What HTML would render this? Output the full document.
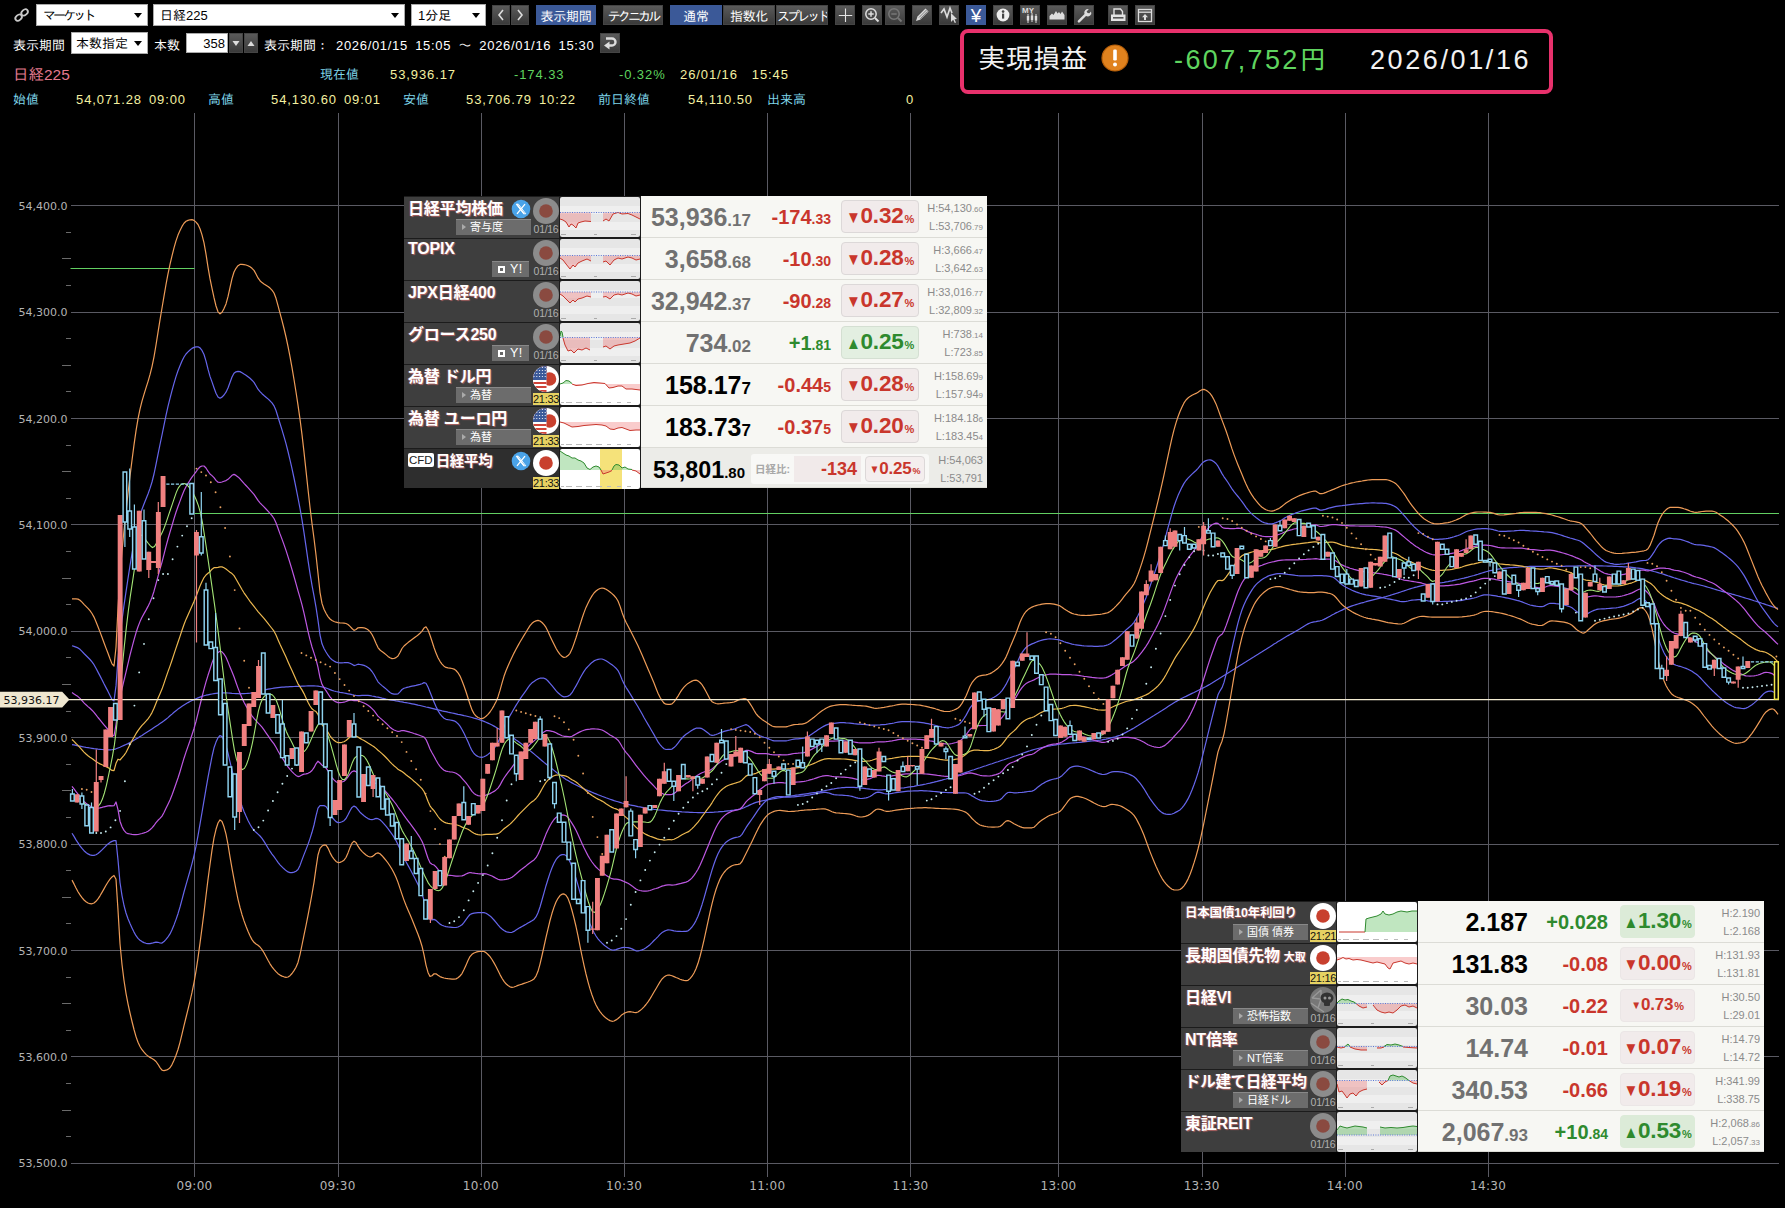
<!DOCTYPE html>
<html lang="ja"><head><meta charset="utf-8"><title>日経225 チャート</title>
<style>
html,body{margin:0;padding:0;background:#000}
body{width:1785px;height:1208px;position:relative;overflow:hidden;font-family:"Liberation Sans","IPAGothic","Noto Sans CJK JP",sans-serif}

.abs{position:absolute}
.sel{position:absolute;background:#fff;border:1px solid #aaa;box-sizing:border-box;color:#000;font-size:13px}
.sel span{position:absolute;top:3px;white-space:nowrap}
.sel i{position:absolute;right:5px;top:8px;width:0;height:0;border-left:4px solid transparent;border-right:4px solid transparent;border-top:5px solid #000}
.btn{position:absolute;box-sizing:border-box;overflow:hidden}
.btn.g{background:linear-gradient(#5a5a5a,#3a3a3a);border:1px solid #444}
.btn.b{background:#3b5998;border:1px solid #3b5998}
.btn.t{color:#fff;font-size:13px;text-align:center;line-height:21px;white-space:nowrap;letter-spacing:-0.3px}
.btn svg{position:absolute;left:-1px;top:-1px}
.tx{position:absolute;font-size:13px;white-space:nowrap;line-height:16px}
.tx.w{color:#fff}.tx.c{color:#7fd6ea}.tx.y{color:#f4f0a0;letter-spacing:0.9px;word-spacing:2.5px}.tx.gr{color:#5fd45f;letter-spacing:0.9px}
b.k{font-weight:normal;letter-spacing:-2.9px}
.inp{position:absolute;background:#fff;border:1px solid #aaa;box-sizing:border-box;color:#000;font-size:13px}
.inp span{position:absolute;right:2px;top:2px}
.pl{white-space:nowrap;line-height:34px}

.tbl{position:absolute;width:583px;background:#1c1c1c;font-family:"Liberation Sans","Noto Sans CJK JP",sans-serif}
.row{position:absolute;left:0;width:583px}
.lab{position:absolute;left:0;top:1px;width:155px;background:#3e3e3e}
.lastrow .lab{background:#2e2e2e}
.nm{position:absolute;left:4px;top:0px;font-size:16px;font-weight:bold;color:#fff;white-space:nowrap;line-height:24px;text-shadow:1px 1px 1px rgba(210,110,110,.75),-1px 0 1px rgba(210,110,110,.35);letter-spacing:-0.2px}
.nm .sub{font-size:11px;margin-left:4px;letter-spacing:0}
.cfdt{display:inline-block;background:#fff;color:#222;font-weight:normal;font-size:11.5px;line-height:14px;padding:0 1px;border-radius:2px;margin-right:2px;text-shadow:none;vertical-align:2px;letter-spacing:0}
.xi{position:absolute;left:107px;top:2px}
.fl{position:absolute;left:128px;top:0px}
.tm{position:absolute;left:128px;width:28px;top:26px;height:12px;font-size:10.5px;line-height:12px;color:#b0b0b0;text-align:center;letter-spacing:-0.3px}
.tm.live{background:#e6d262;color:#111;top:28px;left:129px;width:26px;height:12px;font-size:11px}
.tag{position:absolute;left:52px;top:22px;width:75px;height:16px;background:#6c6c6c;border-top:1px solid #888;box-sizing:border-box;color:#fff;font-size:11px;line-height:15px;padding-left:14px;white-space:nowrap}
.tag .ar{position:absolute;left:6px;top:4px;width:0;height:0;border-top:3.5px solid transparent;border-bottom:3.5px solid transparent;border-left:4px solid #aaa}
.tag.yt{left:88px;width:37px;padding-left:18px;font-size:12.5px;letter-spacing:0.3px}
.tag .sq{position:absolute;left:6px;top:3.5px;width:7px;height:7px;background:#fff;box-shadow:inset 0 0 0 2px #fff, inset 0 0 0 3.5px #666}
.mc{position:absolute;left:156px;top:1px}
.wh{position:absolute;left:237px;top:0px;width:346px;background:#f7f7f3;border-bottom:1px solid #dcdcd6;box-sizing:border-box}
.wh>*{margin-top:1px}
.wh.cfd{background:#ecece8}
.val{position:absolute;right:236px;top:5px;font-size:25px;font-weight:bold;line-height:30px;white-space:nowrap}
.val small{font-size:17px}
.chg{position:absolute;right:156px;top:7px;font-size:20px;font-weight:bold;line-height:26px;white-space:nowrap}
.chg small{font-size:14px}
.pct{position:absolute;left:200px;top:3px;width:78px;height:33px;box-sizing:border-box;border:1px solid #dcd8d8;border-radius:4px;background:#f1ebeb;font-size:22.5px;font-weight:bold;line-height:30px;text-align:center;white-space:nowrap;letter-spacing:-0.2px}
.pct.up{background:#e3efe1;border-color:#d4dfd2}
.pct i{font-style:normal;font-size:15px;vertical-align:1px;margin-right:0px;display:inline-block;transform:scale(1.0,1.15)}
.pct small{font-size:11px;margin-left:1px}
.pct.s2{font-size:17px}
.pct.s2 i{font-size:10px}
.hl{position:absolute;right:4px;font-size:11px;line-height:13px;color:#8b8b8b;white-space:nowrap}
.hl small{font-size:8px}
.cfdbox{position:absolute;left:110px;top:5px;width:178px;height:30px;background:#f8f8f6;border-radius:3px}
.nk{position:absolute;left:4px;top:8px;font-size:10.5px;font-weight:bold;color:#a8a8a8;line-height:14px}
.cv{position:absolute;left:43px;width:67px;top:2px;height:26px;background:#f1eaea;font-size:18px;font-weight:bold;line-height:26px;text-align:right;padding-right:4px;box-sizing:border-box}
.pct.sm{left:224px;top:7px;width:60px;height:26px;font-size:17px;line-height:24px;background:#f4eeee}
.wh.cfd .val{font-size:23.3px;right:242px;top:6px}
.wh.cfd .val small{font-size:15px}
.t2 .pct{border-color:#ebe6e6;left:202px;width:75px}
.t2 .pct.up{border-color:#dcebd8;background:#dcebd8}
.pct.sm i{font-size:10px}
.pct.sm small{font-size:9px}
</style></head>
<body>
<svg class="abs" style="left:0;top:0" width="1785" height="1208" viewBox="0 0 1785 1208">
<path d="M70.5 205.5H1779 M70.5 312.5H1779 M70.5 418.5H1779 M70.5 524.5H1779 M70.5 631.5H1779 M70.5 737.5H1779 M70.5 844.5H1779 M70.5 950.5H1779 M70.5 1056.5H1779 M70.5 1163.5H1779 M194.5 113V1177 M338.5 113V1177 M481.5 113V1177 M624.5 113V1177 M767.5 113V1177 M910.5 113V1177 M1058.5 113V1177 M1202.5 113V1177 M1345.5 113V1177 M1488.5 113V1177" stroke="#5a5a63" stroke-width="1" fill="none" shape-rendering="crispEdges"/>
<path d="M66 232.5H71 M62 258.5H71 M66 285.5H71 M66 338.5H71 M62 365.5H71 M66 391.5H71 M66 445.5H71 M62 471.5H71 M66 498.5H71 M66 551.5H71 M62 578.5H71 M66 604.5H71 M66 657.5H71 M62 684.5H71 M66 711.5H71 M66 764.5H71 M62 790.5H71 M66 817.5H71 M66 870.5H71 M62 897.5H71 M66 923.5H71 M66 977.5H71 M62 1003.5H71 M66 1030.5H71 M66 1083.5H71 M62 1110.5H71 M66 1136.5H71" stroke="#6a6a6a" stroke-width="1" fill="none" shape-rendering="crispEdges"/>
<g font-family="DejaVu Sans, Liberation Sans, sans-serif" font-size="11" fill="#b4b4b4" text-anchor="end">
<text x="67.5" y="209.8">54,400.0</text>
<text x="67.5" y="316.2">54,300.0</text>
<text x="67.5" y="422.6">54,200.0</text>
<text x="67.5" y="528.9">54,100.0</text>
<text x="67.5" y="635.3">54,000.0</text>
<text x="67.5" y="741.7">53,900.0</text>
<text x="67.5" y="848.1">53,800.0</text>
<text x="67.5" y="954.5">53,700.0</text>
<text x="67.5" y="1060.8">53,600.0</text>
<text x="67.5" y="1167.2">53,500.0</text>
</g>
<g font-family="DejaVu Sans, Liberation Sans, sans-serif" font-size="12" fill="#b4b4b4" text-anchor="middle" letter-spacing="0.3">
<text x="194.5" y="1190">09:00</text>
<text x="337.7" y="1190">09:30</text>
<text x="480.9" y="1190">10:00</text>
<text x="624.1" y="1190">10:30</text>
<text x="767.3" y="1190">11:00</text>
<text x="910.5" y="1190">11:30</text>
<text x="1058.5" y="1190">13:00</text>
<text x="1201.7" y="1190">13:30</text>
<text x="1344.9" y="1190">14:00</text>
<text x="1488.1" y="1190">14:30</text>
</g>
<path d="M70.5 268.5H194.5M194.5 513.5H1779" stroke="#62cf62" stroke-width="1.15" fill="none"/>
<path d="M72.0 744.6 L74.0 744.9 L76.0 745.3 L78.0 745.8 L80.0 746.2 L82.0 746.6 L84.0 747.0 L86.0 747.4 L88.0 747.7 L90.0 748.0 L92.0 748.3 L94.0 748.6 L96.0 748.8 L98.0 749.1 L100.0 749.3 L102.0 749.5 L104.0 749.7 L106.0 749.9 L108.0 749.9 L110.0 749.9 L112.0 749.7 L114.0 749.3 L116.0 748.8 L118.0 748.0 L120.0 747.2 L122.0 746.3 L124.0 745.4 L126.0 744.5 L128.0 743.6 L130.0 742.5 L132.0 741.4 L134.0 740.3 L136.0 739.1 L138.0 737.9 L140.0 736.6 L142.0 735.4 L144.0 734.1 L146.0 732.8 L148.0 731.5 L150.0 730.2 L152.0 728.9 L154.0 727.6 L156.0 726.3 L158.0 725.0 L160.0 723.6 L162.0 722.2 L164.0 720.8 L166.0 719.2 L168.0 717.6 L170.0 715.8 L172.0 714.1 L174.0 712.3 L176.0 710.7 L178.0 709.1 L180.0 707.7 L182.0 706.3 L184.0 705.0 L186.0 703.8 L188.0 702.6 L190.0 701.5 L192.0 700.5 L194.0 699.6 L196.0 698.7 L198.0 697.9 L200.0 697.1 L202.0 696.4 L204.0 695.8 L206.0 695.2 L208.0 694.8 L210.0 694.4 L212.0 694.0 L214.0 693.7 L216.0 693.4 L218.0 693.2 L220.0 693.0 L222.0 692.9 L224.0 692.8 L226.0 692.9 L228.0 693.0 L230.0 693.2 L232.0 693.4 L234.0 693.5 L236.0 693.7 L238.0 693.7 L240.0 693.8 L242.0 693.7 L244.0 693.6 L246.0 693.5 L248.0 693.3 L250.0 693.2 L252.0 693.0 L254.0 692.7 L256.0 692.4 L258.0 691.9 L260.0 691.4 L262.0 690.8 L264.0 690.2 L266.0 689.7 L268.0 689.2 L270.0 688.8 L272.0 688.5 L274.0 688.2 L276.0 687.9 L278.0 687.6 L280.0 687.4 L282.0 687.2 L284.0 687.1 L286.0 686.9 L288.0 686.8 L290.0 686.7 L292.0 686.6 L294.0 686.5 L296.0 686.4 L298.0 686.4 L300.0 686.3 L302.0 686.2 L304.0 686.1 L306.0 686.0 L308.0 685.9 L310.0 685.9 L312.0 685.9 L314.0 685.9 L316.0 686.0 L318.0 686.2 L320.0 686.5 L322.0 686.9 L324.0 687.4 L326.0 688.0 L328.0 688.8 L330.0 689.6 L332.0 690.4 L334.0 691.0 L336.0 691.5 L338.0 691.9 L340.0 692.3 L342.0 692.6 L344.0 693.0 L346.0 693.4 L348.0 693.8 L350.0 694.2 L352.0 694.7 L354.0 695.1 L356.0 695.4 L358.0 695.6 L360.0 695.6 L362.0 695.4 L364.0 695.3 L366.0 695.3 L368.0 695.4 L370.0 695.6 L372.0 696.0 L374.0 696.3 L376.0 696.8 L378.0 697.2 L380.0 697.7 L382.0 698.2 L384.0 698.6 L386.0 699.1 L388.0 699.5 L390.0 699.8 L392.0 700.2 L394.0 700.5 L396.0 700.9 L398.0 701.2 L400.0 701.6 L402.0 701.9 L404.0 702.3 L406.0 702.6 L408.0 703.0 L410.0 703.4 L412.0 703.8 L414.0 704.2 L416.0 704.6 L418.0 705.1 L420.0 705.5 L422.0 706.0 L424.0 706.5 L426.0 707.0 L428.0 707.4 L430.0 707.9 L432.0 708.4 L434.0 708.9 L436.0 709.4 L438.0 709.9 L440.0 710.4 L442.0 710.9 L444.0 711.3 L446.0 711.7 L448.0 712.2 L450.0 712.6 L452.0 713.0 L454.0 713.4 L456.0 713.8 L458.0 714.3 L460.0 714.7 L462.0 715.1 L464.0 715.6 L466.0 716.0 L468.0 716.5 L470.0 717.0 L472.0 717.5 L474.0 718.1 L476.0 718.6 L478.0 719.3 L480.0 719.9 L482.0 720.6 L484.0 721.4 L486.0 722.2 L488.0 723.1 L490.0 724.0 L492.0 725.0 L494.0 726.1 L496.0 727.2 L498.0 728.4 L500.0 729.6 L502.0 730.8 L504.0 732.0 L506.0 733.3 L508.0 734.6 L510.0 735.9 L512.0 737.2 L514.0 738.5 L516.0 739.9 L518.0 741.2 L520.0 742.7 L522.0 744.2 L524.0 745.7 L526.0 747.3 L528.0 748.9 L530.0 750.6 L532.0 752.2 L534.0 753.9 L536.0 755.6 L538.0 757.3 L540.0 759.0 L542.0 760.7 L544.0 762.4 L546.0 764.0 L548.0 765.6 L550.0 767.2 L552.0 768.8 L554.0 770.4 L556.0 772.0 L558.0 773.6 L560.0 775.1 L562.0 776.6 L564.0 778.0 L566.0 779.4 L568.0 780.6 L570.0 781.8 L572.0 782.9 L574.0 784.0 L576.0 785.0 L578.0 786.0 L580.0 787.0 L582.0 787.9 L584.0 788.8 L586.0 789.7 L588.0 790.6 L590.0 791.4 L592.0 792.2 L594.0 793.1 L596.0 793.9 L598.0 794.7 L600.0 795.5 L602.0 796.3 L604.0 797.0 L606.0 797.8 L608.0 798.5 L610.0 799.2 L612.0 799.9 L614.0 800.6 L616.0 801.2 L618.0 801.8 L620.0 802.4 L622.0 803.0 L624.0 803.5 L626.0 804.0 L628.0 804.4 L630.0 804.9 L632.0 805.3 L634.0 805.7 L636.0 806.1 L638.0 806.6 L640.0 806.9 L642.0 807.3 L644.0 807.7 L646.0 808.0 L648.0 808.4 L650.0 808.7 L652.0 809.0 L654.0 809.3 L656.0 809.5 L658.0 809.8 L660.0 810.0 L662.0 810.2 L664.0 810.4 L666.0 810.6 L668.0 810.8 L670.0 810.9 L672.0 811.1 L674.0 811.3 L676.0 811.4 L678.0 811.6 L680.0 811.7 L682.0 811.9 L684.0 812.0 L686.0 812.1 L688.0 812.2 L690.0 812.3 L692.0 812.4 L694.0 812.5 L696.0 812.5 L698.0 812.6 L700.0 812.6 L702.0 812.6 L704.0 812.6 L706.0 812.5 L708.0 812.5 L710.0 812.4 L712.0 812.3 L714.0 812.2 L716.0 812.0 L718.0 811.9 L720.0 811.7 L722.0 811.6 L724.0 811.4 L726.0 811.1 L728.0 810.9 L730.0 810.7 L732.0 810.4 L734.0 810.2 L736.0 809.9 L738.0 809.6 L740.0 809.1 L742.0 808.5 L744.0 807.7 L746.0 806.8 L748.0 805.9 L750.0 804.9 L752.0 804.0 L754.0 803.1 L756.0 802.4 L758.0 801.9 L760.0 801.4 L762.0 800.9 L764.0 800.5 L766.0 800.1 L768.0 799.7 L770.0 799.4 L772.0 799.0 L774.0 798.7 L776.0 798.3 L778.0 798.0 L780.0 797.7 L782.0 797.3 L784.0 797.0 L786.0 796.7 L788.0 796.4 L790.0 796.1 L792.0 795.8 L794.0 795.5 L796.0 795.2 L798.0 795.0 L800.0 794.7 L802.0 794.4 L804.0 794.1 L806.0 793.8 L808.0 793.5 L810.0 793.2 L812.0 792.9 L814.0 792.6 L816.0 792.3 L818.0 791.9 L820.0 791.6 L822.0 791.2 L824.0 790.8 L826.0 790.4 L828.0 790.0 L830.0 789.6 L832.0 789.2 L834.0 788.9 L836.0 788.5 L838.0 788.2 L840.0 788.0 L842.0 787.7 L844.0 787.6 L846.0 787.4 L848.0 787.3 L850.0 787.3 L852.0 787.3 L854.0 787.4 L856.0 787.6 L858.0 787.7 L860.0 788.0 L862.0 788.2 L864.0 788.4 L866.0 788.7 L868.0 788.9 L870.0 789.2 L872.0 789.4 L874.0 789.6 L876.0 789.7 L878.0 789.8 L880.0 789.8 L882.0 789.8 L884.0 789.7 L886.0 789.6 L888.0 789.5 L890.0 789.3 L892.0 789.1 L894.0 788.9 L896.0 788.7 L898.0 788.5 L900.0 788.2 L902.0 788.0 L904.0 787.8 L906.0 787.5 L908.0 787.2 L910.0 786.9 L912.0 786.6 L914.0 786.3 L916.0 785.9 L918.0 785.5 L920.0 785.2 L922.0 784.8 L924.0 784.4 L926.0 784.0 L928.0 783.5 L930.0 783.1 L932.0 782.6 L934.0 782.2 L936.0 781.7 L938.0 781.1 L940.0 780.6 L942.0 780.1 L944.0 779.5 L946.0 779.0 L948.0 778.4 L950.0 777.8 L952.0 777.1 L954.0 776.5 L956.0 775.8 L958.0 775.1 L960.0 774.5 L962.0 773.8 L964.0 773.1 L966.0 772.4 L968.0 771.7 L970.0 771.0 L972.0 770.3 L974.0 769.7 L976.0 769.0 L978.0 768.3 L980.0 767.7 L982.0 767.0 L984.0 766.3 L986.0 765.7 L988.0 765.0 L990.0 764.3 L992.0 763.7 L994.0 763.0 L996.0 762.3 L998.0 761.7 L1000.0 761.0 L1002.0 760.3 L1004.0 759.7 L1006.0 759.0 L1008.0 758.3 L1010.0 757.7 L1012.0 757.0 L1014.0 756.3 L1016.0 755.7 L1018.0 755.0 L1020.0 754.2 L1022.0 753.5 L1024.0 752.8 L1026.0 752.1 L1028.0 751.4 L1030.0 750.8 L1032.0 750.1 L1034.0 749.5 L1036.0 749.0 L1038.0 748.5 L1040.0 748.0 L1042.0 747.5 L1044.0 747.1 L1046.0 746.6 L1048.0 746.2 L1050.0 745.8 L1052.0 745.5 L1054.0 745.1 L1056.0 744.8 L1058.0 744.5 L1060.0 744.2 L1062.0 744.0 L1064.0 743.8 L1066.0 743.6 L1068.0 743.4 L1070.0 743.2 L1072.0 743.0 L1074.0 742.8 L1076.0 742.7 L1078.0 742.5 L1080.0 742.3 L1082.0 742.1 L1084.0 741.9 L1086.0 741.7 L1088.0 741.4 L1090.0 741.2 L1092.0 741.0 L1094.0 740.8 L1096.0 740.6 L1098.0 740.3 L1100.0 740.1 L1102.0 739.8 L1104.0 739.4 L1106.0 739.1 L1108.0 738.7 L1110.0 738.2 L1112.0 737.7 L1114.0 737.2 L1116.0 736.6 L1118.0 735.9 L1120.0 735.2 L1122.0 734.4 L1124.0 733.4 L1126.0 732.4 L1128.0 731.3 L1130.0 730.2 L1132.0 729.1 L1134.0 728.0 L1136.0 726.8 L1138.0 725.6 L1140.0 724.3 L1142.0 723.1 L1144.0 721.8 L1146.0 720.5 L1148.0 719.2 L1150.0 718.0 L1152.0 716.7 L1154.0 715.5 L1156.0 714.2 L1158.0 713.0 L1160.0 711.7 L1162.0 710.5 L1164.0 709.2 L1166.0 707.9 L1168.0 706.6 L1170.0 705.3 L1172.0 704.1 L1174.0 702.8 L1176.0 701.6 L1178.0 700.5 L1180.0 699.4 L1182.0 698.3 L1184.0 697.3 L1186.0 696.4 L1188.0 695.4 L1190.0 694.4 L1192.0 693.4 L1194.0 692.5 L1196.0 691.5 L1198.0 690.5 L1200.0 689.5 L1202.0 688.6 L1204.0 687.5 L1206.0 686.5 L1208.0 685.4 L1210.0 684.3 L1212.0 683.1 L1214.0 681.8 L1216.0 680.5 L1218.0 679.3 L1220.0 678.0 L1222.0 676.7 L1224.0 675.4 L1226.0 674.2 L1228.0 672.9 L1230.0 671.7 L1232.0 670.4 L1234.0 669.2 L1236.0 667.9 L1238.0 666.7 L1240.0 665.4 L1242.0 664.2 L1244.0 662.9 L1246.0 661.7 L1248.0 660.4 L1250.0 659.2 L1252.0 657.9 L1254.0 656.7 L1256.0 655.4 L1258.0 654.2 L1260.0 652.9 L1262.0 651.7 L1264.0 650.4 L1266.0 649.2 L1268.0 647.9 L1270.0 646.7 L1272.0 645.4 L1274.0 644.1 L1276.0 642.9 L1278.0 641.6 L1280.0 640.4 L1282.0 639.2 L1284.0 638.0 L1286.0 636.8 L1288.0 635.6 L1290.0 634.5 L1292.0 633.4 L1294.0 632.2 L1296.0 631.1 L1298.0 629.9 L1300.0 628.7 L1302.0 627.4 L1304.0 626.2 L1306.0 625.0 L1308.0 623.9 L1310.0 623.0 L1312.0 622.3 L1314.0 621.9 L1316.0 621.6 L1318.0 621.2 L1320.0 620.8 L1322.0 620.2 L1324.0 619.4 L1326.0 618.4 L1328.0 617.3 L1330.0 616.2 L1332.0 615.0 L1334.0 614.0 L1336.0 612.9 L1338.0 612.0 L1340.0 611.0 L1342.0 610.1 L1344.0 609.1 L1346.0 608.2 L1348.0 607.4 L1350.0 606.6 L1352.0 605.9 L1354.0 605.2 L1356.0 604.6 L1358.0 604.0 L1360.0 603.4 L1362.0 602.8 L1364.0 602.3 L1366.0 601.7 L1368.0 601.2 L1370.0 600.7 L1372.0 600.2 L1374.0 599.7 L1376.0 599.2 L1378.0 598.7 L1380.0 598.2 L1382.0 597.7 L1384.0 597.1 L1386.0 596.6 L1388.0 596.0 L1390.0 595.4 L1392.0 594.7 L1394.0 594.1 L1396.0 593.5 L1398.0 592.9 L1400.0 592.2 L1402.0 591.5 L1404.0 590.9 L1406.0 590.2 L1408.0 589.5 L1410.0 588.9 L1412.0 588.3 L1414.0 587.7 L1416.0 587.2 L1418.0 586.6 L1420.0 586.1 L1422.0 585.6 L1424.0 585.1 L1426.0 584.7 L1428.0 584.3 L1430.0 584.0 L1432.0 583.8 L1434.0 583.5 L1436.0 583.3 L1438.0 583.1 L1440.0 582.8 L1442.0 582.6 L1444.0 582.3 L1446.0 581.9 L1448.0 581.6 L1450.0 581.2 L1452.0 580.8 L1454.0 580.3 L1456.0 579.9 L1458.0 579.5 L1460.0 579.0 L1462.0 578.5 L1464.0 578.1 L1466.0 577.6 L1468.0 577.1 L1470.0 576.5 L1472.0 576.0 L1474.0 575.5 L1476.0 574.9 L1478.0 574.3 L1480.0 573.6 L1482.0 573.0 L1484.0 572.4 L1486.0 571.8 L1488.0 571.2 L1490.0 570.7 L1492.0 570.3 L1494.0 569.9 L1496.0 569.5 L1498.0 569.1 L1500.0 568.8 L1502.0 568.5 L1504.0 568.3 L1506.0 568.1 L1508.0 567.9 L1510.0 567.7 L1512.0 567.6 L1514.0 567.4 L1516.0 567.3 L1518.0 567.2 L1520.0 567.0 L1522.0 566.9 L1524.0 566.8 L1526.0 566.6 L1528.0 566.5 L1530.0 566.4 L1532.0 566.3 L1534.0 566.3 L1536.0 566.3 L1538.0 566.3 L1540.0 566.3 L1542.0 566.3 L1544.0 566.3 L1546.0 566.3 L1548.0 566.3 L1550.0 566.3 L1552.0 566.3 L1554.0 566.3 L1556.0 566.3 L1558.0 566.3 L1560.0 566.3 L1562.0 566.3 L1564.0 566.3 L1566.0 566.2 L1568.0 566.2 L1570.0 566.2 L1572.0 566.1 L1574.0 566.1 L1576.0 566.0 L1578.0 565.9 L1580.0 565.9 L1582.0 565.9 L1584.0 565.9 L1586.0 565.9 L1588.0 565.9 L1590.0 565.9 L1592.0 565.9 L1594.0 565.9 L1596.0 565.9 L1598.0 565.9 L1600.0 565.9 L1602.0 565.9 L1604.0 566.0 L1606.0 566.0 L1608.0 566.1 L1610.0 566.2 L1612.0 566.2 L1614.0 566.3 L1616.0 566.4 L1618.0 566.5 L1620.0 566.6 L1622.0 566.7 L1624.0 566.8 L1626.0 566.9 L1628.0 567.0 L1630.0 567.2 L1632.0 567.4 L1634.0 567.6 L1636.0 567.9 L1638.0 568.1 L1640.0 568.4 L1642.0 568.7 L1644.0 569.1 L1646.0 569.5 L1648.0 569.9 L1650.0 570.4 L1652.0 570.9 L1654.0 571.5 L1656.0 572.0 L1658.0 572.6 L1660.0 573.2 L1662.0 573.8 L1664.0 574.4 L1666.0 575.1 L1668.0 575.8 L1670.0 576.4 L1672.0 577.1 L1674.0 577.8 L1676.0 578.4 L1678.0 579.0 L1680.0 579.6 L1682.0 580.2 L1684.0 580.8 L1686.0 581.4 L1688.0 582.0 L1690.0 582.5 L1692.0 583.1 L1694.0 583.6 L1696.0 584.0 L1698.0 584.5 L1700.0 585.0 L1702.0 585.5 L1704.0 586.0 L1706.0 586.6 L1708.0 587.2 L1710.0 587.8 L1712.0 588.4 L1714.0 589.0 L1716.0 589.6 L1718.0 590.2 L1720.0 590.8 L1722.0 591.4 L1724.0 591.9 L1726.0 592.5 L1728.0 593.0 L1730.0 593.5 L1732.0 594.1 L1734.0 594.6 L1736.0 595.2 L1738.0 595.8 L1740.0 596.4 L1742.0 597.0 L1744.0 597.6 L1746.0 598.2 L1748.0 598.8 L1750.0 599.4 L1752.0 600.0 L1754.0 600.7 L1756.0 601.3 L1758.0 601.9 L1760.0 602.6 L1762.0 603.3 L1764.0 603.9 L1766.0 604.6 L1768.0 605.2 L1770.0 605.9 L1772.0 606.6 L1774.0 607.2 L1776.0 607.9 L1778.0 608.3" stroke="#6666ec" stroke-width="1.2" fill="none" stroke-linejoin="round"/>
<path d="M72.0 598.9 L74.0 598.9 L76.0 598.9 L78.0 599.1 L80.0 600.2 L82.0 602.1 L84.0 604.3 L86.0 606.3 L88.0 608.3 L90.0 610.7 L92.0 613.5 L94.0 617.1 L96.0 621.7 L98.0 626.8 L100.0 631.9 L102.0 637.2 L104.0 642.7 L106.0 648.1 L108.0 653.2 L110.0 658.8 L112.0 663.9 L114.0 666.0 L116.0 647.2 L118.0 608.1 L120.0 576.1 L122.0 550.9 L124.0 530.3 L126.0 511.7 L128.0 493.4 L130.0 476.1 L132.0 460.2 L134.0 444.9 L136.0 430.9 L138.0 418.8 L140.0 409.2 L142.0 401.2 L144.0 394.3 L146.0 387.9 L148.0 381.6 L150.0 374.7 L152.0 366.6 L154.0 356.8 L156.0 345.0 L158.0 332.3 L160.0 319.9 L162.0 308.0 L164.0 296.1 L166.0 284.5 L168.0 273.8 L170.0 264.4 L172.0 255.9 L174.0 247.9 L176.0 240.9 L178.0 235.1 L180.0 230.5 L182.0 226.4 L184.0 223.2 L186.0 221.3 L188.0 220.4 L190.0 219.8 L192.0 219.6 L194.0 220.4 L196.0 222.1 L198.0 224.5 L200.0 228.8 L202.0 234.9 L204.0 242.9 L206.0 254.2 L208.0 267.1 L210.0 278.7 L212.0 288.3 L214.0 297.7 L216.0 306.0 L218.0 311.8 L220.0 313.9 L222.0 312.2 L224.0 308.6 L226.0 303.9 L228.0 296.7 L230.0 287.6 L232.0 278.7 L234.0 272.0 L236.0 268.3 L238.0 265.7 L240.0 264.4 L242.0 264.4 L244.0 264.6 L246.0 265.0 L248.0 265.7 L250.0 266.8 L252.0 268.3 L254.0 270.4 L256.0 274.0 L258.0 277.9 L260.0 280.7 L262.0 282.6 L264.0 284.0 L266.0 285.3 L268.0 286.6 L270.0 288.1 L272.0 290.2 L274.0 293.0 L276.0 298.3 L278.0 305.7 L280.0 313.2 L282.0 320.7 L284.0 328.5 L286.0 337.0 L288.0 346.4 L290.0 356.7 L292.0 367.7 L294.0 379.5 L296.0 392.0 L298.0 405.2 L300.0 419.2 L302.0 434.7 L304.0 452.1 L306.0 470.6 L308.0 489.2 L310.0 507.2 L312.0 523.5 L314.0 538.5 L316.0 555.0 L318.0 573.5 L320.0 592.3 L322.0 603.4 L324.0 609.3 L326.0 613.3 L328.0 616.6 L330.0 619.0 L332.0 620.5 L334.0 621.5 L336.0 622.2 L338.0 622.6 L340.0 622.9 L342.0 623.0 L344.0 623.2 L346.0 623.5 L348.0 624.5 L350.0 626.4 L352.0 628.5 L354.0 630.4 L356.0 629.5 L358.0 627.8 L360.0 627.6 L362.0 627.6 L364.0 627.8 L366.0 628.6 L368.0 629.8 L370.0 631.6 L372.0 634.5 L374.0 638.4 L376.0 643.3 L378.0 647.6 L380.0 650.0 L382.0 651.6 L384.0 653.0 L386.0 654.6 L388.0 656.4 L390.0 657.8 L392.0 658.6 L394.0 658.5 L396.0 657.6 L398.0 656.0 L400.0 652.5 L402.0 648.5 L404.0 646.0 L406.0 644.2 L408.0 642.6 L410.0 641.1 L412.0 639.6 L414.0 638.1 L416.0 636.6 L418.0 635.0 L420.0 633.3 L422.0 631.2 L424.0 628.1 L426.0 626.8 L428.0 630.0 L430.0 635.2 L432.0 641.3 L434.0 647.5 L436.0 653.1 L438.0 657.7 L440.0 661.3 L442.0 664.1 L444.0 666.2 L446.0 667.4 L448.0 667.9 L450.0 668.2 L452.0 668.5 L454.0 669.1 L456.0 670.5 L458.0 672.8 L460.0 676.1 L462.0 680.7 L464.0 686.0 L466.0 691.8 L468.0 698.0 L470.0 704.3 L472.0 709.9 L474.0 713.6 L476.0 716.1 L478.0 717.5 L480.0 718.3 L482.0 718.6 L484.0 717.9 L486.0 716.3 L488.0 714.4 L490.0 712.0 L492.0 709.0 L494.0 705.6 L496.0 701.7 L498.0 696.9 L500.0 690.4 L502.0 683.1 L504.0 676.3 L506.0 670.8 L508.0 665.9 L510.0 661.4 L512.0 657.2 L514.0 653.1 L516.0 649.3 L518.0 645.6 L520.0 642.0 L522.0 638.7 L524.0 635.4 L526.0 632.2 L528.0 628.8 L530.0 625.7 L532.0 623.3 L534.0 621.8 L536.0 620.9 L538.0 620.4 L540.0 621.0 L542.0 622.5 L544.0 624.6 L546.0 627.4 L548.0 631.5 L550.0 636.0 L552.0 640.2 L554.0 644.3 L556.0 648.3 L558.0 651.7 L560.0 654.3 L562.0 656.4 L564.0 657.5 L566.0 657.0 L568.0 655.6 L570.0 653.3 L572.0 649.1 L574.0 643.6 L576.0 637.8 L578.0 631.4 L580.0 624.8 L582.0 618.5 L584.0 612.6 L586.0 607.4 L588.0 603.2 L590.0 599.3 L592.0 595.9 L594.0 593.0 L596.0 591.0 L598.0 589.5 L600.0 588.5 L602.0 588.0 L604.0 588.4 L606.0 589.3 L608.0 590.6 L610.0 592.0 L612.0 593.6 L614.0 595.5 L616.0 597.8 L618.0 601.0 L620.0 606.1 L622.0 612.3 L624.0 617.8 L626.0 622.2 L628.0 626.1 L630.0 629.9 L632.0 633.8 L634.0 637.8 L636.0 641.7 L638.0 645.8 L640.0 650.2 L642.0 654.8 L644.0 659.6 L646.0 664.3 L648.0 669.0 L650.0 673.6 L652.0 678.3 L654.0 683.1 L656.0 688.2 L658.0 693.2 L660.0 697.2 L662.0 700.5 L664.0 703.1 L666.0 704.2 L668.0 704.3 L670.0 704.3 L672.0 703.8 L674.0 701.8 L676.0 699.2 L678.0 696.1 L680.0 692.7 L682.0 689.6 L684.0 687.2 L686.0 685.1 L688.0 683.4 L690.0 682.2 L692.0 681.1 L694.0 680.3 L696.0 680.1 L698.0 680.9 L700.0 682.5 L702.0 684.7 L704.0 687.9 L706.0 691.5 L708.0 695.2 L710.0 699.2 L712.0 701.7 L714.0 702.8 L716.0 703.5 L718.0 703.8 L720.0 703.7 L722.0 703.5 L724.0 703.2 L726.0 703.0 L728.0 702.8 L730.0 702.7 L732.0 702.4 L734.0 702.0 L736.0 701.1 L738.0 700.1 L740.0 699.4 L742.0 699.0 L744.0 698.7 L746.0 698.9 L748.0 700.6 L750.0 703.6 L752.0 706.8 L754.0 710.3 L756.0 713.6 L758.0 716.0 L760.0 717.8 L762.0 719.4 L764.0 720.8 L766.0 722.1 L768.0 723.4 L770.0 724.8 L772.0 726.0 L774.0 726.7 L776.0 726.9 L778.0 726.9 L780.0 726.9 L782.0 726.9 L784.0 726.9 L786.0 726.8 L788.0 726.3 L790.0 725.7 L792.0 725.1 L794.0 724.7 L796.0 724.5 L798.0 724.4 L800.0 724.2 L802.0 724.1 L804.0 723.7 L806.0 722.9 L808.0 721.7 L810.0 720.2 L812.0 718.8 L814.0 717.3 L816.0 715.6 L818.0 713.9 L820.0 712.3 L822.0 710.8 L824.0 709.6 L826.0 708.3 L828.0 707.2 L830.0 706.4 L832.0 705.9 L834.0 705.5 L836.0 705.1 L838.0 704.8 L840.0 704.7 L842.0 704.6 L844.0 704.6 L846.0 704.7 L848.0 704.8 L850.0 705.0 L852.0 705.2 L854.0 705.3 L856.0 705.5 L858.0 705.6 L860.0 705.7 L862.0 705.8 L864.0 706.0 L866.0 706.2 L868.0 706.7 L870.0 707.2 L872.0 707.7 L874.0 708.1 L876.0 708.3 L878.0 708.2 L880.0 708.0 L882.0 707.7 L884.0 707.4 L886.0 707.0 L888.0 706.6 L890.0 706.2 L892.0 705.9 L894.0 705.5 L896.0 705.0 L898.0 704.6 L900.0 704.3 L902.0 704.2 L904.0 704.2 L906.0 704.2 L908.0 704.3 L910.0 704.4 L912.0 704.5 L914.0 704.6 L916.0 704.8 L918.0 705.0 L920.0 705.2 L922.0 705.6 L924.0 706.0 L926.0 706.4 L928.0 706.9 L930.0 707.4 L932.0 707.8 L934.0 708.3 L936.0 709.0 L938.0 709.6 L940.0 710.3 L942.0 710.8 L944.0 711.3 L946.0 711.5 L948.0 711.5 L950.0 711.3 L952.0 710.7 L954.0 710.0 L956.0 709.1 L958.0 708.0 L960.0 706.2 L962.0 703.4 L964.0 699.8 L966.0 696.0 L968.0 691.2 L970.0 686.2 L972.0 682.7 L974.0 680.1 L976.0 678.0 L978.0 676.6 L980.0 675.8 L982.0 675.4 L984.0 675.1 L986.0 674.8 L988.0 674.3 L990.0 673.6 L992.0 672.6 L994.0 671.3 L996.0 669.8 L998.0 668.2 L1000.0 666.1 L1002.0 663.6 L1004.0 660.7 L1006.0 657.1 L1008.0 652.4 L1010.0 647.4 L1012.0 642.7 L1014.0 638.1 L1016.0 633.3 L1018.0 627.8 L1020.0 622.2 L1022.0 617.7 L1024.0 614.2 L1026.0 611.5 L1028.0 609.6 L1030.0 608.3 L1032.0 607.1 L1034.0 606.2 L1036.0 605.6 L1038.0 605.0 L1040.0 604.6 L1042.0 604.1 L1044.0 603.8 L1046.0 603.6 L1048.0 603.6 L1050.0 603.7 L1052.0 603.9 L1054.0 604.2 L1056.0 604.7 L1058.0 605.2 L1060.0 605.9 L1062.0 607.2 L1064.0 608.7 L1066.0 610.1 L1068.0 611.3 L1070.0 612.4 L1072.0 613.4 L1074.0 614.0 L1076.0 614.4 L1078.0 614.8 L1080.0 615.1 L1082.0 615.3 L1084.0 615.4 L1086.0 615.5 L1088.0 615.4 L1090.0 615.3 L1092.0 615.1 L1094.0 614.9 L1096.0 614.7 L1098.0 614.5 L1100.0 614.3 L1102.0 614.0 L1104.0 613.6 L1106.0 613.2 L1108.0 612.6 L1110.0 611.5 L1112.0 610.0 L1114.0 608.1 L1116.0 606.1 L1118.0 604.0 L1120.0 601.8 L1122.0 599.3 L1124.0 596.7 L1126.0 594.1 L1128.0 591.8 L1130.0 589.5 L1132.0 586.9 L1134.0 583.7 L1136.0 579.4 L1138.0 574.2 L1140.0 568.6 L1142.0 562.6 L1144.0 556.1 L1146.0 549.1 L1148.0 541.5 L1150.0 533.4 L1152.0 525.3 L1154.0 517.3 L1156.0 509.3 L1158.0 501.1 L1160.0 492.6 L1162.0 483.9 L1164.0 474.9 L1166.0 465.5 L1168.0 456.1 L1170.0 446.9 L1172.0 437.9 L1174.0 429.8 L1176.0 422.9 L1178.0 416.8 L1180.0 411.5 L1182.0 406.9 L1184.0 402.9 L1186.0 400.0 L1188.0 398.0 L1190.0 396.4 L1192.0 395.2 L1194.0 394.2 L1196.0 393.4 L1198.0 392.2 L1200.0 390.8 L1202.0 389.7 L1204.0 389.4 L1206.0 390.2 L1208.0 391.6 L1210.0 393.4 L1212.0 396.1 L1214.0 399.7 L1216.0 403.9 L1218.0 409.1 L1220.0 414.7 L1222.0 420.1 L1224.0 425.4 L1226.0 430.8 L1228.0 436.6 L1230.0 442.7 L1232.0 448.9 L1234.0 454.6 L1236.0 459.9 L1238.0 465.0 L1240.0 469.8 L1242.0 474.6 L1244.0 479.4 L1246.0 484.0 L1248.0 488.2 L1250.0 491.9 L1252.0 495.2 L1254.0 498.1 L1256.0 500.7 L1258.0 503.1 L1260.0 505.4 L1262.0 507.3 L1264.0 508.6 L1266.0 509.7 L1268.0 510.5 L1270.0 511.0 L1272.0 511.1 L1274.0 510.6 L1276.0 509.8 L1278.0 508.9 L1280.0 507.7 L1282.0 506.2 L1284.0 504.6 L1286.0 503.0 L1288.0 501.7 L1290.0 500.5 L1292.0 499.3 L1294.0 498.3 L1296.0 497.3 L1298.0 496.3 L1300.0 495.4 L1302.0 494.6 L1304.0 493.9 L1306.0 493.2 L1308.0 492.6 L1310.0 492.0 L1312.0 491.5 L1314.0 491.2 L1316.0 491.2 L1318.0 492.5 L1320.0 493.7 L1322.0 493.7 L1324.0 493.1 L1326.0 492.4 L1328.0 491.5 L1330.0 490.7 L1332.0 489.9 L1334.0 489.1 L1336.0 488.2 L1338.0 487.4 L1340.0 486.5 L1342.0 485.8 L1344.0 485.1 L1346.0 484.5 L1348.0 484.0 L1350.0 483.4 L1352.0 482.9 L1354.0 482.5 L1356.0 482.0 L1358.0 481.7 L1360.0 481.3 L1362.0 481.0 L1364.0 480.6 L1366.0 480.3 L1368.0 480.0 L1370.0 479.8 L1372.0 479.7 L1374.0 479.6 L1376.0 479.6 L1378.0 479.6 L1380.0 479.6 L1382.0 479.6 L1384.0 479.6 L1386.0 479.7 L1388.0 480.0 L1390.0 480.6 L1392.0 481.5 L1394.0 482.5 L1396.0 483.8 L1398.0 485.8 L1400.0 488.3 L1402.0 491.0 L1404.0 493.7 L1406.0 496.7 L1408.0 499.9 L1410.0 502.9 L1412.0 505.6 L1414.0 508.2 L1416.0 510.7 L1418.0 513.0 L1420.0 515.1 L1422.0 517.0 L1424.0 518.8 L1426.0 520.1 L1428.0 521.3 L1430.0 522.3 L1432.0 523.2 L1434.0 523.7 L1436.0 523.9 L1438.0 523.8 L1440.0 523.7 L1442.0 523.5 L1444.0 523.2 L1446.0 522.9 L1448.0 522.6 L1450.0 522.1 L1452.0 521.5 L1454.0 520.7 L1456.0 520.0 L1458.0 519.1 L1460.0 518.2 L1462.0 517.1 L1464.0 515.9 L1466.0 514.8 L1468.0 514.0 L1470.0 513.4 L1472.0 512.8 L1474.0 512.4 L1476.0 512.1 L1478.0 512.0 L1480.0 512.0 L1482.0 512.0 L1484.0 512.1 L1486.0 512.2 L1488.0 512.3 L1490.0 512.4 L1492.0 512.8 L1494.0 513.4 L1496.0 514.1 L1498.0 514.6 L1500.0 515.0 L1502.0 515.0 L1504.0 514.9 L1506.0 514.7 L1508.0 514.5 L1510.0 514.2 L1512.0 514.0 L1514.0 513.7 L1516.0 513.4 L1518.0 513.0 L1520.0 512.7 L1522.0 512.5 L1524.0 512.4 L1526.0 512.4 L1528.0 512.4 L1530.0 512.4 L1532.0 512.4 L1534.0 512.4 L1536.0 512.4 L1538.0 512.5 L1540.0 512.7 L1542.0 513.0 L1544.0 513.3 L1546.0 513.7 L1548.0 514.1 L1550.0 514.5 L1552.0 515.0 L1554.0 515.6 L1556.0 516.2 L1558.0 516.8 L1560.0 517.4 L1562.0 518.1 L1564.0 518.8 L1566.0 519.5 L1568.0 520.2 L1570.0 520.8 L1572.0 521.2 L1574.0 521.5 L1576.0 521.9 L1578.0 522.3 L1580.0 522.9 L1582.0 524.1 L1584.0 526.0 L1586.0 528.3 L1588.0 530.7 L1590.0 533.0 L1592.0 535.5 L1594.0 538.2 L1596.0 540.7 L1598.0 542.9 L1600.0 545.2 L1602.0 547.3 L1604.0 549.1 L1606.0 550.5 L1608.0 551.3 L1610.0 552.0 L1612.0 552.6 L1614.0 553.1 L1616.0 553.4 L1618.0 553.5 L1620.0 553.5 L1622.0 553.4 L1624.0 553.2 L1626.0 553.0 L1628.0 552.8 L1630.0 552.6 L1632.0 552.4 L1634.0 552.3 L1636.0 552.1 L1638.0 551.8 L1640.0 551.5 L1642.0 551.2 L1644.0 550.8 L1646.0 550.2 L1648.0 548.8 L1650.0 545.4 L1652.0 540.5 L1654.0 535.2 L1656.0 528.8 L1658.0 522.7 L1660.0 518.2 L1662.0 514.6 L1664.0 511.8 L1666.0 509.8 L1668.0 508.2 L1670.0 507.4 L1672.0 507.4 L1674.0 507.4 L1676.0 507.4 L1678.0 507.4 L1680.0 507.6 L1682.0 508.1 L1684.0 508.8 L1686.0 509.4 L1688.0 510.1 L1690.0 511.0 L1692.0 511.7 L1694.0 512.2 L1696.0 512.3 L1698.0 512.1 L1700.0 511.8 L1702.0 511.5 L1704.0 511.3 L1706.0 511.2 L1708.0 511.2 L1710.0 511.2 L1712.0 511.2 L1714.0 511.5 L1716.0 512.3 L1718.0 513.6 L1720.0 514.9 L1722.0 516.2 L1724.0 517.6 L1726.0 519.2 L1728.0 520.8 L1730.0 522.6 L1732.0 524.5 L1734.0 526.6 L1736.0 528.9 L1738.0 531.7 L1740.0 534.8 L1742.0 538.3 L1744.0 542.1 L1746.0 546.5 L1748.0 551.5 L1750.0 556.6 L1752.0 561.6 L1754.0 566.7 L1756.0 571.8 L1758.0 576.7 L1760.0 581.2 L1762.0 585.4 L1764.0 589.3 L1766.0 593.1 L1768.0 596.7 L1770.0 600.2 L1772.0 603.4 L1774.0 606.0 L1776.0 608.0 L1778.0 609.4" stroke="#ee9c58" stroke-width="1.2" fill="none" stroke-linejoin="round"/>
<path d="M72.0 880.1 L74.0 883.9 L76.0 888.0 L78.0 891.7 L80.0 894.9 L82.0 897.7 L84.0 900.0 L86.0 901.7 L88.0 903.0 L90.0 903.7 L92.0 903.8 L94.0 903.0 L96.0 901.3 L98.0 898.9 L100.0 895.8 L102.0 892.4 L104.0 888.9 L106.0 885.3 L108.0 882.0 L110.0 879.2 L112.0 876.9 L114.0 875.5 L116.0 879.3 L118.0 910.3 L120.0 943.8 L122.0 964.5 L124.0 980.5 L126.0 993.3 L128.0 1003.8 L130.0 1013.0 L132.0 1021.5 L134.0 1029.5 L136.0 1036.6 L138.0 1042.3 L140.0 1046.5 L142.0 1049.7 L144.0 1052.2 L146.0 1054.4 L148.0 1056.1 L150.0 1057.4 L152.0 1058.5 L154.0 1059.8 L156.0 1061.5 L158.0 1064.3 L160.0 1067.6 L162.0 1070.1 L164.0 1070.7 L166.0 1070.2 L168.0 1069.4 L170.0 1067.8 L172.0 1064.6 L174.0 1060.3 L176.0 1055.3 L178.0 1049.5 L180.0 1042.3 L182.0 1034.2 L184.0 1025.7 L186.0 1017.5 L188.0 1009.4 L190.0 1001.2 L192.0 992.4 L194.0 982.6 L196.0 971.2 L198.0 957.8 L200.0 943.1 L202.0 928.0 L204.0 912.3 L206.0 895.7 L208.0 879.4 L210.0 864.5 L212.0 850.1 L214.0 837.8 L216.0 829.3 L218.0 823.0 L220.0 819.9 L222.0 821.5 L224.0 826.8 L226.0 834.1 L228.0 844.5 L230.0 856.8 L232.0 868.4 L234.0 879.2 L236.0 889.7 L238.0 899.3 L240.0 907.5 L242.0 914.7 L244.0 920.9 L246.0 926.3 L248.0 931.3 L250.0 935.8 L252.0 939.6 L254.0 942.3 L256.0 944.0 L258.0 945.3 L260.0 947.0 L262.0 949.6 L264.0 952.8 L266.0 956.5 L268.0 960.3 L270.0 963.8 L272.0 966.9 L274.0 969.4 L276.0 971.7 L278.0 973.7 L280.0 975.1 L282.0 976.1 L284.0 976.8 L286.0 977.3 L288.0 977.0 L290.0 975.7 L292.0 973.5 L294.0 970.6 L296.0 967.2 L298.0 962.4 L300.0 954.6 L302.0 945.0 L304.0 935.1 L306.0 925.5 L308.0 915.4 L310.0 904.9 L312.0 894.0 L314.0 882.3 L316.0 868.1 L318.0 855.0 L320.0 848.3 L322.0 846.1 L324.0 844.9 L326.0 845.1 L328.0 848.1 L330.0 852.6 L332.0 856.4 L334.0 859.1 L336.0 861.4 L338.0 862.6 L340.0 862.4 L342.0 861.5 L344.0 860.2 L346.0 857.5 L348.0 852.9 L350.0 847.6 L352.0 843.2 L354.0 841.2 L356.0 842.6 L358.0 846.1 L360.0 849.2 L362.0 851.3 L364.0 853.3 L366.0 855.0 L368.0 856.3 L370.0 857.0 L372.0 856.7 L374.0 855.2 L376.0 853.5 L378.0 852.9 L380.0 853.8 L382.0 855.7 L384.0 858.0 L386.0 860.4 L388.0 863.0 L390.0 866.0 L392.0 869.3 L394.0 873.0 L396.0 877.2 L398.0 882.4 L400.0 888.4 L402.0 894.4 L404.0 900.1 L406.0 905.2 L408.0 909.9 L410.0 914.5 L412.0 919.3 L414.0 924.3 L416.0 929.3 L418.0 934.3 L420.0 939.8 L422.0 946.2 L424.0 954.9 L426.0 965.1 L428.0 972.4 L430.0 976.4 L432.0 975.7 L434.0 973.8 L436.0 973.8 L438.0 975.3 L440.0 976.6 L442.0 977.4 L444.0 978.0 L446.0 978.4 L448.0 978.7 L450.0 978.9 L452.0 979.1 L454.0 979.1 L456.0 978.9 L458.0 977.8 L460.0 976.0 L462.0 973.6 L464.0 969.6 L466.0 965.2 L468.0 960.6 L470.0 956.6 L472.0 954.3 L474.0 953.0 L476.0 952.2 L478.0 951.7 L480.0 951.5 L482.0 951.4 L484.0 951.5 L486.0 952.6 L488.0 954.5 L490.0 956.7 L492.0 959.5 L494.0 962.9 L496.0 966.5 L498.0 970.5 L500.0 974.6 L502.0 978.2 L504.0 981.4 L506.0 983.8 L508.0 985.5 L510.0 986.8 L512.0 987.3 L514.0 987.0 L516.0 986.3 L518.0 985.4 L520.0 984.7 L522.0 984.1 L524.0 983.4 L526.0 982.7 L528.0 982.0 L530.0 981.2 L532.0 980.3 L534.0 978.9 L536.0 976.1 L538.0 971.3 L540.0 964.1 L542.0 955.5 L544.0 946.5 L546.0 937.4 L548.0 928.8 L550.0 920.5 L552.0 913.3 L554.0 907.1 L556.0 902.0 L558.0 898.3 L560.0 895.6 L562.0 894.2 L564.0 893.9 L566.0 895.2 L568.0 898.4 L570.0 903.7 L572.0 910.5 L574.0 918.1 L576.0 926.5 L578.0 935.9 L580.0 946.1 L582.0 956.0 L584.0 965.3 L586.0 974.0 L588.0 981.8 L590.0 988.9 L592.0 995.0 L594.0 1000.4 L596.0 1005.0 L598.0 1008.6 L600.0 1011.6 L602.0 1014.1 L604.0 1016.3 L606.0 1018.1 L608.0 1019.5 L610.0 1020.6 L612.0 1021.3 L614.0 1021.0 L616.0 1019.9 L618.0 1018.5 L620.0 1016.7 L622.0 1014.7 L624.0 1013.4 L626.0 1012.5 L628.0 1011.9 L630.0 1011.7 L632.0 1012.0 L634.0 1012.4 L636.0 1012.6 L638.0 1012.0 L640.0 1010.6 L642.0 1008.9 L644.0 1006.9 L646.0 1004.5 L648.0 1001.8 L650.0 998.9 L652.0 995.5 L654.0 992.0 L656.0 988.7 L658.0 985.3 L660.0 981.9 L662.0 979.0 L664.0 977.1 L666.0 975.8 L668.0 975.0 L670.0 975.2 L672.0 975.8 L674.0 976.6 L676.0 977.5 L678.0 978.3 L680.0 979.2 L682.0 979.9 L684.0 980.3 L686.0 980.6 L688.0 980.3 L690.0 978.6 L692.0 976.2 L694.0 973.0 L696.0 968.7 L698.0 963.3 L700.0 956.5 L702.0 948.7 L704.0 940.1 L706.0 930.9 L708.0 921.7 L710.0 912.4 L712.0 903.9 L714.0 896.2 L716.0 889.5 L718.0 883.9 L720.0 879.1 L722.0 875.4 L724.0 872.5 L726.0 870.1 L728.0 868.2 L730.0 866.9 L732.0 865.8 L734.0 865.0 L736.0 864.6 L738.0 864.3 L740.0 863.8 L742.0 861.5 L744.0 857.5 L746.0 853.4 L748.0 849.5 L750.0 845.5 L752.0 841.4 L754.0 837.3 L756.0 833.0 L758.0 828.9 L760.0 825.2 L762.0 822.1 L764.0 819.2 L766.0 816.7 L768.0 814.6 L770.0 813.2 L772.0 812.3 L774.0 811.4 L776.0 810.8 L778.0 810.5 L780.0 810.4 L782.0 810.6 L784.0 810.8 L786.0 811.1 L788.0 811.4 L790.0 811.5 L792.0 811.4 L794.0 811.3 L796.0 811.0 L798.0 810.8 L800.0 810.5 L802.0 810.3 L804.0 810.2 L806.0 810.0 L808.0 809.9 L810.0 809.8 L812.0 809.7 L814.0 809.5 L816.0 809.4 L818.0 809.2 L820.0 809.0 L822.0 808.9 L824.0 808.9 L826.0 809.2 L828.0 809.9 L830.0 810.8 L832.0 811.7 L834.0 812.4 L836.0 812.8 L838.0 813.0 L840.0 813.2 L842.0 813.3 L844.0 813.5 L846.0 813.7 L848.0 813.9 L850.0 814.1 L852.0 814.6 L854.0 815.3 L856.0 816.0 L858.0 816.6 L860.0 817.0 L862.0 817.0 L864.0 816.7 L866.0 816.1 L868.0 815.4 L870.0 814.3 L872.0 812.7 L874.0 810.9 L876.0 809.5 L878.0 809.0 L880.0 809.3 L882.0 809.9 L884.0 810.7 L886.0 811.3 L888.0 811.4 L890.0 811.2 L892.0 810.9 L894.0 810.5 L896.0 810.2 L898.0 809.9 L900.0 809.6 L902.0 809.3 L904.0 809.1 L906.0 808.8 L908.0 808.6 L910.0 808.5 L912.0 808.3 L914.0 808.2 L916.0 808.0 L918.0 807.9 L920.0 807.8 L922.0 807.8 L924.0 807.7 L926.0 807.7 L928.0 807.8 L930.0 807.9 L932.0 808.0 L934.0 808.1 L936.0 808.3 L938.0 808.4 L940.0 808.5 L942.0 808.6 L944.0 808.7 L946.0 808.7 L948.0 808.8 L950.0 808.9 L952.0 809.0 L954.0 809.2 L956.0 809.4 L958.0 809.7 L960.0 810.2 L962.0 810.8 L964.0 811.5 L966.0 812.4 L968.0 814.0 L970.0 816.2 L972.0 818.5 L974.0 820.4 L976.0 822.2 L978.0 823.8 L980.0 825.0 L982.0 825.6 L984.0 826.1 L986.0 826.5 L988.0 826.8 L990.0 827.0 L992.0 827.1 L994.0 827.1 L996.0 827.0 L998.0 826.8 L1000.0 826.5 L1002.0 825.1 L1004.0 822.9 L1006.0 821.1 L1008.0 820.6 L1010.0 821.2 L1012.0 822.4 L1014.0 823.7 L1016.0 824.7 L1018.0 825.7 L1020.0 826.6 L1022.0 827.4 L1024.0 827.8 L1026.0 827.9 L1028.0 827.9 L1030.0 827.9 L1032.0 827.8 L1034.0 827.2 L1036.0 825.4 L1038.0 823.3 L1040.0 821.5 L1042.0 820.1 L1044.0 818.7 L1046.0 817.5 L1048.0 816.3 L1050.0 815.3 L1052.0 814.6 L1054.0 814.0 L1056.0 813.3 L1058.0 812.5 L1060.0 811.4 L1062.0 809.4 L1064.0 806.7 L1066.0 804.0 L1068.0 801.2 L1070.0 798.8 L1072.0 797.6 L1074.0 796.8 L1076.0 796.4 L1078.0 796.4 L1080.0 796.8 L1082.0 797.3 L1084.0 798.0 L1086.0 798.7 L1088.0 799.7 L1090.0 800.8 L1092.0 801.9 L1094.0 803.0 L1096.0 804.0 L1098.0 805.0 L1100.0 805.8 L1102.0 806.4 L1104.0 806.7 L1106.0 806.4 L1108.0 805.5 L1110.0 804.7 L1112.0 804.3 L1114.0 804.5 L1116.0 804.8 L1118.0 805.2 L1120.0 805.8 L1122.0 806.6 L1124.0 807.7 L1126.0 808.9 L1128.0 810.2 L1130.0 811.6 L1132.0 813.3 L1134.0 815.4 L1136.0 818.3 L1138.0 822.1 L1140.0 826.1 L1142.0 830.5 L1144.0 835.3 L1146.0 840.7 L1148.0 846.3 L1150.0 851.6 L1152.0 856.6 L1154.0 861.5 L1156.0 866.2 L1158.0 870.6 L1160.0 874.7 L1162.0 878.3 L1164.0 881.4 L1166.0 883.9 L1168.0 886.0 L1170.0 887.7 L1172.0 889.2 L1174.0 889.9 L1176.0 890.0 L1178.0 890.0 L1180.0 889.5 L1182.0 888.0 L1184.0 885.9 L1186.0 882.9 L1188.0 879.1 L1190.0 874.5 L1192.0 869.0 L1194.0 862.9 L1196.0 856.3 L1198.0 849.0 L1200.0 840.9 L1202.0 831.8 L1204.0 822.3 L1206.0 812.4 L1208.0 802.3 L1210.0 792.3 L1212.0 782.3 L1214.0 772.1 L1216.0 761.3 L1218.0 751.9 L1220.0 746.0 L1222.0 741.2 L1224.0 733.8 L1226.0 723.5 L1228.0 712.0 L1230.0 700.5 L1232.0 688.5 L1234.0 676.7 L1236.0 665.3 L1238.0 654.5 L1240.0 645.2 L1242.0 636.9 L1244.0 629.8 L1246.0 623.6 L1248.0 618.2 L1250.0 613.4 L1252.0 608.9 L1254.0 604.8 L1256.0 601.4 L1258.0 598.6 L1260.0 596.2 L1262.0 594.1 L1264.0 592.3 L1266.0 590.7 L1268.0 589.3 L1270.0 588.2 L1272.0 587.5 L1274.0 587.0 L1276.0 586.7 L1278.0 586.5 L1280.0 586.6 L1282.0 587.1 L1284.0 587.7 L1286.0 588.3 L1288.0 588.9 L1290.0 589.5 L1292.0 590.0 L1294.0 590.6 L1296.0 591.1 L1298.0 591.6 L1300.0 591.9 L1302.0 592.1 L1304.0 592.3 L1306.0 592.4 L1308.0 592.6 L1310.0 592.6 L1312.0 592.7 L1314.0 592.6 L1316.0 592.4 L1318.0 592.2 L1320.0 592.1 L1322.0 592.1 L1324.0 592.3 L1326.0 592.6 L1328.0 593.1 L1330.0 593.5 L1332.0 594.2 L1334.0 595.5 L1336.0 597.5 L1338.0 599.8 L1340.0 602.3 L1342.0 604.5 L1344.0 606.2 L1346.0 607.8 L1348.0 609.2 L1350.0 610.5 L1352.0 611.8 L1354.0 612.9 L1356.0 613.9 L1358.0 614.8 L1360.0 615.7 L1362.0 616.5 L1364.0 617.2 L1366.0 617.8 L1368.0 618.3 L1370.0 618.7 L1372.0 619.1 L1374.0 619.4 L1376.0 619.8 L1378.0 620.2 L1380.0 620.7 L1382.0 621.2 L1384.0 621.7 L1386.0 622.2 L1388.0 622.6 L1390.0 622.9 L1392.0 623.2 L1394.0 623.5 L1396.0 623.7 L1398.0 623.9 L1400.0 624.0 L1402.0 623.8 L1404.0 623.2 L1406.0 622.3 L1408.0 621.2 L1410.0 620.1 L1412.0 619.1 L1414.0 618.4 L1416.0 617.7 L1418.0 617.0 L1420.0 616.5 L1422.0 616.3 L1424.0 616.4 L1426.0 616.6 L1428.0 616.8 L1430.0 617.0 L1432.0 617.1 L1434.0 617.1 L1436.0 617.1 L1438.0 617.1 L1440.0 617.1 L1442.0 617.1 L1444.0 617.1 L1446.0 617.1 L1448.0 617.1 L1450.0 617.1 L1452.0 617.1 L1454.0 617.1 L1456.0 617.1 L1458.0 617.1 L1460.0 617.0 L1462.0 616.9 L1464.0 616.7 L1466.0 616.5 L1468.0 616.2 L1470.0 615.9 L1472.0 615.5 L1474.0 615.1 L1476.0 614.5 L1478.0 613.7 L1480.0 612.8 L1482.0 612.0 L1484.0 611.5 L1486.0 611.3 L1488.0 611.4 L1490.0 611.5 L1492.0 611.7 L1494.0 612.0 L1496.0 612.3 L1498.0 612.6 L1500.0 613.0 L1502.0 613.4 L1504.0 613.9 L1506.0 614.4 L1508.0 615.0 L1510.0 615.5 L1512.0 616.1 L1514.0 616.8 L1516.0 617.5 L1518.0 618.2 L1520.0 618.9 L1522.0 619.8 L1524.0 620.7 L1526.0 621.7 L1528.0 622.7 L1530.0 623.5 L1532.0 624.1 L1534.0 624.5 L1536.0 624.9 L1538.0 625.3 L1540.0 625.5 L1542.0 625.4 L1544.0 624.6 L1546.0 623.3 L1548.0 622.0 L1550.0 621.1 L1552.0 620.9 L1554.0 621.0 L1556.0 621.2 L1558.0 621.4 L1560.0 621.6 L1562.0 621.9 L1564.0 622.2 L1566.0 622.7 L1568.0 623.2 L1570.0 624.0 L1572.0 625.2 L1574.0 627.0 L1576.0 629.0 L1578.0 630.6 L1580.0 631.8 L1582.0 632.8 L1584.0 633.1 L1586.0 631.9 L1588.0 630.0 L1590.0 628.2 L1592.0 626.5 L1594.0 624.8 L1596.0 623.4 L1598.0 622.5 L1600.0 621.8 L1602.0 621.2 L1604.0 620.7 L1606.0 620.3 L1608.0 619.9 L1610.0 619.5 L1612.0 619.2 L1614.0 619.0 L1616.0 618.7 L1618.0 618.3 L1620.0 617.9 L1622.0 617.3 L1624.0 616.7 L1626.0 615.9 L1628.0 615.0 L1630.0 614.1 L1632.0 613.1 L1634.0 611.8 L1636.0 610.2 L1638.0 608.8 L1640.0 607.8 L1642.0 607.7 L1644.0 609.0 L1646.0 611.5 L1648.0 615.0 L1650.0 620.9 L1652.0 628.6 L1654.0 637.7 L1656.0 649.0 L1658.0 659.8 L1660.0 668.0 L1662.0 675.0 L1664.0 680.8 L1666.0 685.5 L1668.0 689.0 L1670.0 691.9 L1672.0 694.3 L1674.0 695.8 L1676.0 696.8 L1678.0 697.5 L1680.0 698.1 L1682.0 698.7 L1684.0 699.5 L1686.0 700.2 L1688.0 701.0 L1690.0 702.0 L1692.0 703.3 L1694.0 704.7 L1696.0 706.4 L1698.0 708.3 L1700.0 710.7 L1702.0 713.3 L1704.0 716.0 L1706.0 718.5 L1708.0 721.1 L1710.0 723.6 L1712.0 726.1 L1714.0 728.3 L1716.0 730.4 L1718.0 732.4 L1720.0 734.2 L1722.0 735.9 L1724.0 737.5 L1726.0 739.0 L1728.0 740.2 L1730.0 741.3 L1732.0 742.3 L1734.0 743.0 L1736.0 743.3 L1738.0 743.2 L1740.0 742.9 L1742.0 742.5 L1744.0 741.9 L1746.0 740.5 L1748.0 738.3 L1750.0 735.8 L1752.0 733.3 L1754.0 730.4 L1756.0 727.3 L1758.0 724.1 L1760.0 720.9 L1762.0 717.5 L1764.0 714.3 L1766.0 711.9 L1768.0 710.4 L1770.0 709.3 L1772.0 708.8 L1774.0 709.5 L1776.0 711.6 L1778.0 714.3" stroke="#ee9c58" stroke-width="1.2" fill="none" stroke-linejoin="round"/>
<path d="M72.0 645.8 L74.0 646.4 L76.0 647.1 L78.0 647.9 L80.0 649.3 L82.0 651.4 L84.0 653.5 L86.0 655.5 L88.0 657.5 L90.0 659.5 L92.0 661.9 L94.0 664.7 L96.0 668.3 L98.0 672.1 L100.0 675.9 L102.0 679.7 L104.0 683.8 L106.0 687.6 L108.0 691.4 L110.0 695.5 L112.0 699.4 L114.0 700.9 L116.0 685.9 L118.0 658.5 L120.0 637.4 L122.0 619.9 L124.0 605.3 L126.0 591.9 L128.0 578.5 L130.0 565.6 L132.0 553.7 L134.0 542.3 L136.0 531.8 L138.0 522.7 L140.0 515.4 L142.0 509.3 L144.0 504.0 L146.0 499.0 L148.0 494.0 L150.0 488.4 L152.0 482.0 L154.0 474.0 L156.0 464.4 L158.0 454.3 L160.0 444.5 L162.0 435.0 L164.0 425.2 L166.0 415.4 L168.0 406.4 L170.0 398.3 L172.0 390.7 L174.0 383.3 L176.0 376.6 L178.0 370.8 L180.0 365.8 L182.0 361.1 L184.0 357.0 L186.0 354.0 L188.0 351.9 L190.0 350.0 L192.0 348.4 L194.0 347.4 L196.0 346.9 L198.0 346.8 L200.0 347.9 L202.0 350.4 L204.0 354.5 L206.0 361.1 L208.0 369.2 L210.0 376.4 L212.0 381.9 L214.0 387.7 L216.0 393.2 L218.0 397.0 L220.0 398.2 L222.0 397.1 L224.0 395.0 L226.0 392.2 L228.0 388.0 L230.0 382.5 L232.0 377.0 L234.0 373.2 L236.0 371.8 L238.0 371.3 L240.0 371.6 L242.0 372.7 L244.0 374.0 L246.0 375.2 L248.0 376.7 L250.0 378.3 L252.0 380.2 L254.0 382.4 L256.0 385.7 L258.0 389.2 L260.0 391.7 L262.0 393.7 L264.0 395.5 L266.0 397.2 L268.0 398.9 L270.0 400.8 L272.0 402.9 L274.0 405.8 L276.0 410.5 L278.0 417.0 L280.0 423.5 L282.0 429.9 L284.0 436.6 L286.0 443.7 L288.0 451.5 L290.0 459.8 L292.0 468.7 L294.0 478.0 L296.0 487.8 L298.0 498.0 L300.0 508.4 L302.0 519.8 L304.0 532.6 L306.0 546.4 L308.0 560.3 L310.0 573.4 L312.0 585.3 L314.0 595.8 L316.0 607.2 L318.0 620.4 L320.0 635.0 L322.0 643.8 L324.0 648.5 L326.0 652.0 L328.0 655.2 L330.0 657.9 L332.0 659.8 L334.0 661.1 L336.0 662.1 L338.0 662.6 L340.0 662.8 L342.0 662.8 L344.0 662.7 L346.0 662.5 L348.0 662.6 L350.0 663.2 L352.0 664.3 L354.0 665.6 L356.0 665.0 L358.0 664.2 L360.0 664.5 L362.0 664.9 L364.0 665.4 L366.0 666.3 L368.0 667.6 L370.0 669.1 L372.0 671.5 L374.0 674.5 L376.0 678.3 L378.0 681.8 L380.0 683.9 L382.0 685.6 L384.0 687.2 L386.0 688.9 L388.0 690.8 L390.0 692.5 L392.0 693.7 L394.0 694.2 L396.0 694.2 L398.0 693.8 L400.0 691.8 L402.0 689.5 L404.0 688.3 L406.0 687.7 L408.0 687.2 L410.0 686.6 L412.0 686.2 L414.0 685.8 L416.0 685.4 L418.0 684.9 L420.0 684.4 L422.0 683.7 L424.0 682.6 L426.0 683.2 L428.0 687.1 L430.0 692.0 L432.0 697.0 L434.0 701.9 L436.0 706.6 L438.0 710.6 L440.0 713.9 L442.0 716.3 L444.0 718.2 L446.0 719.3 L448.0 719.7 L450.0 720.0 L452.0 720.3 L454.0 720.8 L456.0 721.9 L458.0 723.7 L460.0 726.1 L462.0 729.5 L464.0 733.3 L466.0 737.4 L468.0 741.8 L470.0 746.4 L472.0 750.7 L474.0 753.5 L476.0 755.4 L478.0 756.5 L480.0 757.2 L482.0 757.4 L484.0 756.8 L486.0 755.7 L488.0 754.4 L490.0 752.8 L492.0 750.8 L494.0 748.5 L496.0 745.8 L498.0 742.5 L500.0 737.8 L502.0 732.3 L504.0 727.1 L506.0 722.9 L508.0 719.2 L510.0 715.6 L512.0 712.2 L514.0 708.8 L516.0 705.4 L518.0 702.2 L520.0 699.2 L522.0 696.2 L524.0 693.4 L526.0 690.6 L528.0 687.7 L530.0 684.9 L532.0 682.8 L534.0 681.4 L536.0 680.1 L538.0 678.9 L540.0 678.2 L542.0 678.0 L544.0 678.2 L546.0 679.1 L548.0 681.0 L550.0 683.4 L552.0 685.7 L554.0 688.1 L556.0 690.6 L558.0 692.8 L560.0 694.5 L562.0 696.1 L564.0 696.9 L566.0 696.7 L568.0 696.1 L570.0 695.0 L572.0 692.7 L574.0 689.3 L576.0 685.9 L578.0 682.2 L580.0 678.3 L582.0 674.8 L584.0 671.4 L586.0 668.5 L588.0 666.3 L590.0 664.3 L592.0 662.4 L594.0 660.9 L596.0 660.0 L598.0 659.4 L600.0 659.0 L602.0 659.0 L604.0 659.7 L606.0 660.8 L608.0 662.1 L610.0 663.4 L612.0 664.8 L614.0 666.4 L616.0 668.2 L618.0 670.6 L620.0 674.5 L622.0 679.4 L624.0 683.8 L626.0 687.3 L628.0 690.4 L630.0 693.6 L632.0 696.9 L634.0 700.2 L636.0 703.5 L638.0 706.8 L640.0 710.2 L642.0 713.8 L644.0 717.5 L646.0 721.0 L648.0 724.4 L650.0 727.8 L652.0 731.2 L654.0 734.6 L656.0 738.3 L658.0 741.9 L660.0 744.6 L662.0 746.9 L664.0 748.7 L666.0 749.5 L668.0 749.4 L670.0 749.4 L672.0 749.1 L674.0 747.6 L676.0 745.6 L678.0 743.2 L680.0 740.4 L682.0 738.0 L684.0 736.0 L686.0 734.3 L688.0 732.9 L690.0 731.6 L692.0 730.2 L694.0 729.1 L696.0 728.2 L698.0 728.0 L700.0 728.2 L702.0 728.7 L704.0 729.9 L706.0 731.4 L708.0 732.9 L710.0 734.7 L712.0 735.4 L714.0 735.1 L716.0 734.5 L718.0 733.8 L720.0 732.9 L722.0 732.2 L724.0 731.4 L726.0 730.9 L728.0 730.4 L730.0 730.0 L732.0 729.7 L734.0 729.2 L736.0 728.4 L738.0 727.5 L740.0 726.8 L742.0 726.0 L744.0 725.2 L746.0 724.6 L748.0 725.5 L750.0 727.3 L752.0 729.2 L754.0 731.5 L756.0 733.5 L758.0 734.8 L760.0 735.7 L762.0 736.5 L764.0 737.2 L766.0 737.8 L768.0 738.6 L770.0 739.5 L772.0 740.3 L774.0 740.8 L776.0 740.9 L778.0 740.8 L780.0 740.8 L782.0 740.9 L784.0 740.9 L786.0 740.8 L788.0 740.5 L790.0 740.0 L792.0 739.5 L794.0 739.1 L796.0 738.9 L798.0 738.8 L800.0 738.6 L802.0 738.5 L804.0 738.1 L806.0 737.5 L808.0 736.4 L810.0 735.2 L812.0 733.9 L814.0 732.6 L816.0 731.2 L818.0 729.8 L820.0 728.4 L822.0 727.2 L824.0 726.1 L826.0 725.1 L828.0 724.4 L830.0 723.8 L832.0 723.5 L834.0 723.3 L836.0 723.1 L838.0 722.9 L840.0 722.7 L842.0 722.7 L844.0 722.7 L846.0 722.9 L848.0 723.0 L850.0 723.2 L852.0 723.4 L854.0 723.7 L856.0 723.9 L858.0 724.1 L860.0 724.2 L862.0 724.3 L864.0 724.4 L866.0 724.6 L868.0 724.8 L870.0 725.1 L872.0 725.2 L874.0 725.2 L876.0 725.1 L878.0 725.0 L880.0 724.9 L882.0 724.7 L884.0 724.6 L886.0 724.4 L888.0 724.0 L890.0 723.7 L892.0 723.4 L894.0 723.0 L896.0 722.5 L898.0 722.2 L900.0 721.9 L902.0 721.7 L904.0 721.6 L906.0 721.6 L908.0 721.7 L910.0 721.7 L912.0 721.8 L914.0 721.9 L916.0 722.0 L918.0 722.1 L920.0 722.3 L922.0 722.6 L924.0 722.9 L926.0 723.3 L928.0 723.7 L930.0 724.1 L932.0 724.5 L934.0 725.0 L936.0 725.5 L938.0 726.1 L940.0 726.6 L942.0 727.1 L944.0 727.5 L946.0 727.7 L948.0 727.8 L950.0 727.5 L952.0 727.1 L954.0 726.5 L956.0 725.8 L958.0 724.9 L960.0 723.5 L962.0 721.3 L964.0 718.5 L966.0 715.4 L968.0 711.6 L970.0 707.9 L972.0 705.3 L974.0 703.5 L976.0 702.0 L978.0 701.1 L980.0 700.7 L982.0 700.5 L984.0 700.3 L986.0 700.1 L988.0 699.7 L990.0 699.2 L992.0 698.3 L994.0 697.2 L996.0 696.0 L998.0 694.6 L1000.0 692.9 L1002.0 690.6 L1004.0 687.7 L1006.0 684.4 L1008.0 680.4 L1010.0 676.4 L1012.0 672.7 L1014.0 669.0 L1016.0 665.2 L1018.0 660.8 L1020.0 656.3 L1022.0 652.7 L1024.0 649.8 L1026.0 647.5 L1028.0 646.0 L1030.0 644.9 L1032.0 643.9 L1034.0 643.1 L1036.0 642.2 L1038.0 641.4 L1040.0 640.7 L1042.0 640.1 L1044.0 639.6 L1046.0 639.3 L1048.0 639.0 L1050.0 638.9 L1052.0 639.0 L1054.0 639.2 L1056.0 639.5 L1058.0 639.7 L1060.0 640.2 L1062.0 640.9 L1064.0 641.7 L1066.0 642.4 L1068.0 642.9 L1070.0 643.5 L1072.0 644.1 L1074.0 644.5 L1076.0 644.8 L1078.0 645.1 L1080.0 645.4 L1082.0 645.7 L1084.0 645.9 L1086.0 646.0 L1088.0 646.1 L1090.0 646.2 L1092.0 646.2 L1094.0 646.3 L1096.0 646.3 L1098.0 646.3 L1100.0 646.2 L1102.0 646.1 L1104.0 645.8 L1106.0 645.4 L1108.0 644.7 L1110.0 643.7 L1112.0 642.4 L1114.0 640.8 L1116.0 639.2 L1118.0 637.5 L1120.0 635.8 L1122.0 633.9 L1124.0 631.9 L1126.0 629.9 L1128.0 628.2 L1130.0 626.5 L1132.0 624.7 L1134.0 622.3 L1136.0 619.2 L1138.0 615.5 L1140.0 611.5 L1142.0 607.3 L1144.0 602.6 L1146.0 597.7 L1148.0 592.3 L1150.0 586.4 L1152.0 580.5 L1154.0 574.7 L1156.0 568.8 L1158.0 562.7 L1160.0 556.3 L1162.0 549.6 L1164.0 542.6 L1166.0 535.2 L1168.0 527.7 L1170.0 520.4 L1172.0 513.1 L1174.0 506.5 L1176.0 500.7 L1178.0 495.6 L1180.0 491.2 L1182.0 487.1 L1184.0 483.4 L1186.0 480.5 L1188.0 478.1 L1190.0 476.1 L1192.0 474.1 L1194.0 472.3 L1196.0 470.5 L1198.0 468.3 L1200.0 465.8 L1202.0 463.4 L1204.0 461.6 L1206.0 460.6 L1208.0 460.0 L1210.0 459.9 L1212.0 460.4 L1214.0 461.8 L1216.0 463.5 L1218.0 466.2 L1220.0 469.9 L1222.0 473.6 L1224.0 476.8 L1226.0 479.6 L1228.0 482.5 L1230.0 485.7 L1232.0 488.8 L1234.0 491.6 L1236.0 494.1 L1238.0 496.5 L1240.0 499.0 L1242.0 501.6 L1244.0 504.4 L1246.0 507.3 L1248.0 509.9 L1250.0 512.1 L1252.0 514.1 L1254.0 515.9 L1256.0 517.5 L1258.0 519.0 L1260.0 520.5 L1262.0 521.8 L1264.0 522.6 L1266.0 523.2 L1268.0 523.6 L1270.0 523.9 L1272.0 523.8 L1274.0 523.3 L1276.0 522.6 L1278.0 521.8 L1280.0 520.9 L1282.0 519.7 L1284.0 518.4 L1286.0 517.3 L1288.0 516.3 L1290.0 515.3 L1292.0 514.4 L1294.0 513.7 L1296.0 512.9 L1298.0 512.2 L1300.0 511.5 L1302.0 510.8 L1304.0 510.3 L1306.0 509.8 L1308.0 509.3 L1310.0 508.8 L1312.0 508.4 L1314.0 508.1 L1316.0 508.1 L1318.0 509.1 L1320.0 510.1 L1322.0 510.1 L1324.0 509.7 L1326.0 509.1 L1328.0 508.4 L1330.0 507.8 L1332.0 507.3 L1334.0 506.8 L1336.0 506.4 L1338.0 506.1 L1340.0 505.8 L1342.0 505.6 L1344.0 505.3 L1346.0 505.1 L1348.0 504.8 L1350.0 504.6 L1352.0 504.4 L1354.0 504.2 L1356.0 504.0 L1358.0 503.8 L1360.0 503.7 L1362.0 503.6 L1364.0 503.4 L1366.0 503.2 L1368.0 503.1 L1370.0 503.0 L1372.0 502.9 L1374.0 502.9 L1376.0 503.0 L1378.0 503.1 L1380.0 503.2 L1382.0 503.2 L1384.0 503.3 L1386.0 503.4 L1388.0 503.8 L1390.0 504.3 L1392.0 505.1 L1394.0 506.0 L1396.0 507.1 L1398.0 508.8 L1400.0 510.9 L1402.0 513.1 L1404.0 515.3 L1406.0 517.7 L1408.0 520.1 L1410.0 522.4 L1412.0 524.5 L1414.0 526.6 L1416.0 528.5 L1418.0 530.3 L1420.0 532.0 L1422.0 533.6 L1424.0 535.0 L1426.0 536.2 L1428.0 537.2 L1430.0 538.1 L1432.0 538.8 L1434.0 539.3 L1436.0 539.4 L1438.0 539.4 L1440.0 539.2 L1442.0 539.1 L1444.0 538.8 L1446.0 538.6 L1448.0 538.3 L1450.0 537.9 L1452.0 537.4 L1454.0 536.8 L1456.0 536.1 L1458.0 535.5 L1460.0 534.7 L1462.0 533.7 L1464.0 532.7 L1466.0 531.8 L1468.0 531.0 L1470.0 530.5 L1472.0 530.0 L1474.0 529.5 L1476.0 529.2 L1478.0 528.9 L1480.0 528.8 L1482.0 528.7 L1484.0 528.7 L1486.0 528.7 L1488.0 528.8 L1490.0 529.0 L1492.0 529.3 L1494.0 529.9 L1496.0 530.4 L1498.0 531.0 L1500.0 531.3 L1502.0 531.4 L1504.0 531.4 L1506.0 531.3 L1508.0 531.2 L1510.0 531.1 L1512.0 531.0 L1514.0 530.9 L1516.0 530.7 L1518.0 530.5 L1520.0 530.4 L1522.0 530.3 L1524.0 530.4 L1526.0 530.6 L1528.0 530.7 L1530.0 530.9 L1532.0 531.0 L1534.0 531.1 L1536.0 531.1 L1538.0 531.3 L1540.0 531.5 L1542.0 531.7 L1544.0 531.9 L1546.0 532.0 L1548.0 532.1 L1550.0 532.3 L1552.0 532.7 L1554.0 533.2 L1556.0 533.7 L1558.0 534.2 L1560.0 534.8 L1562.0 535.4 L1564.0 536.1 L1566.0 536.7 L1568.0 537.4 L1570.0 538.0 L1572.0 538.5 L1574.0 539.1 L1576.0 539.7 L1578.0 540.3 L1580.0 541.0 L1582.0 542.2 L1584.0 543.8 L1586.0 545.5 L1588.0 547.2 L1590.0 548.9 L1592.0 550.7 L1594.0 552.6 L1596.0 554.5 L1598.0 556.2 L1600.0 557.9 L1602.0 559.6 L1604.0 561.1 L1606.0 562.1 L1608.0 562.7 L1610.0 563.3 L1612.0 563.7 L1614.0 564.1 L1616.0 564.3 L1618.0 564.3 L1620.0 564.2 L1622.0 564.0 L1624.0 563.8 L1626.0 563.5 L1628.0 563.1 L1630.0 562.8 L1632.0 562.5 L1634.0 562.2 L1636.0 561.8 L1638.0 561.3 L1640.0 560.9 L1642.0 560.6 L1644.0 560.5 L1646.0 560.4 L1648.0 559.8 L1650.0 557.9 L1652.0 555.2 L1654.0 552.2 L1656.0 548.8 L1658.0 545.6 L1660.0 543.2 L1662.0 541.3 L1664.0 540.0 L1666.0 539.1 L1668.0 538.4 L1670.0 538.2 L1672.0 538.5 L1674.0 538.8 L1676.0 538.9 L1678.0 539.1 L1680.0 539.3 L1682.0 539.9 L1684.0 540.5 L1686.0 541.2 L1688.0 541.9 L1690.0 542.8 L1692.0 543.6 L1694.0 544.3 L1696.0 544.7 L1698.0 544.8 L1700.0 544.9 L1702.0 545.1 L1704.0 545.4 L1706.0 545.8 L1708.0 546.2 L1710.0 546.6 L1712.0 547.0 L1714.0 547.6 L1716.0 548.7 L1718.0 550.0 L1720.0 551.4 L1722.0 552.8 L1724.0 554.2 L1726.0 555.8 L1728.0 557.4 L1730.0 559.0 L1732.0 560.8 L1734.0 562.6 L1736.0 564.7 L1738.0 566.9 L1740.0 569.5 L1742.0 572.3 L1744.0 575.4 L1746.0 578.9 L1748.0 582.6 L1750.0 586.4 L1752.0 590.2 L1754.0 594.0 L1756.0 597.7 L1758.0 601.3 L1760.0 604.5 L1762.0 607.4 L1764.0 610.1 L1766.0 612.9 L1768.0 615.6 L1770.0 618.4 L1772.0 621.0 L1774.0 623.3 L1776.0 625.3 L1778.0 626.9" stroke="#6666ec" stroke-width="1.2" fill="none" stroke-linejoin="round"/>
<path d="M72.0 833.2 L74.0 836.4 L76.0 839.9 L78.0 842.9 L80.0 845.8 L82.0 848.4 L84.0 850.7 L86.0 852.5 L88.0 853.9 L90.0 854.9 L92.0 855.4 L94.0 855.4 L96.0 854.7 L98.0 853.5 L100.0 851.8 L102.0 849.9 L104.0 847.8 L106.0 845.8 L108.0 843.9 L110.0 842.4 L112.0 841.4 L114.0 840.6 L116.0 840.6 L118.0 859.9 L120.0 882.5 L122.0 895.6 L124.0 905.5 L126.0 913.0 L128.0 918.8 L130.0 923.5 L132.0 927.9 L134.0 932.1 L136.0 935.7 L138.0 938.4 L140.0 940.2 L142.0 941.6 L144.0 942.6 L146.0 943.3 L148.0 943.6 L150.0 943.6 L152.0 943.2 L154.0 942.6 L156.0 942.1 L158.0 942.3 L160.0 943.0 L162.0 943.1 L164.0 941.6 L166.0 939.3 L168.0 936.8 L170.0 933.9 L172.0 929.8 L174.0 924.9 L176.0 919.6 L178.0 913.7 L180.0 907.0 L182.0 899.6 L184.0 892.0 L186.0 884.8 L188.0 877.9 L190.0 871.0 L192.0 863.6 L194.0 855.6 L196.0 846.4 L198.0 835.6 L200.0 824.1 L202.0 812.5 L204.0 800.7 L206.0 788.8 L208.0 777.4 L210.0 766.9 L212.0 756.5 L214.0 747.8 L216.0 742.1 L218.0 737.8 L220.0 735.5 L222.0 736.6 L224.0 740.5 L226.0 745.7 L228.0 753.2 L230.0 761.9 L232.0 770.1 L234.0 778.0 L236.0 786.1 L238.0 793.7 L240.0 800.3 L242.0 806.3 L244.0 811.5 L246.0 816.1 L248.0 820.4 L250.0 824.3 L252.0 827.7 L254.0 830.3 L256.0 832.3 L258.0 834.1 L260.0 836.0 L262.0 838.4 L264.0 841.4 L266.0 844.6 L268.0 848.0 L270.0 851.2 L272.0 854.1 L274.0 856.7 L276.0 859.5 L278.0 862.3 L280.0 864.8 L282.0 866.8 L284.0 868.8 L286.0 870.6 L288.0 871.9 L290.0 872.6 L292.0 872.6 L294.0 872.1 L296.0 871.3 L298.0 869.5 L300.0 865.4 L302.0 859.9 L304.0 854.6 L306.0 849.6 L308.0 844.4 L310.0 838.6 L312.0 832.3 L314.0 825.0 L316.0 815.9 L318.0 808.1 L320.0 805.6 L322.0 805.6 L324.0 805.6 L326.0 806.5 L328.0 809.5 L330.0 813.7 L332.0 817.1 L334.0 819.5 L336.0 821.6 L338.0 822.6 L340.0 822.5 L342.0 821.8 L344.0 820.7 L346.0 818.5 L348.0 814.8 L350.0 810.8 L352.0 807.4 L354.0 806.1 L356.0 807.1 L358.0 809.7 L360.0 812.2 L362.0 814.0 L364.0 815.7 L366.0 817.3 L368.0 818.6 L370.0 819.4 L372.0 819.7 L374.0 819.1 L376.0 818.4 L378.0 818.7 L380.0 819.8 L382.0 821.6 L384.0 823.9 L386.0 826.1 L388.0 828.6 L390.0 831.3 L392.0 834.2 L394.0 837.2 L396.0 840.6 L398.0 844.7 L400.0 849.1 L402.0 853.4 L404.0 857.7 L406.0 861.7 L408.0 865.4 L410.0 869.0 L412.0 872.7 L414.0 876.6 L416.0 880.5 L418.0 884.4 L420.0 888.8 L422.0 893.7 L424.0 900.4 L426.0 908.7 L428.0 915.3 L430.0 919.5 L432.0 919.9 L434.0 919.4 L436.0 920.4 L438.0 922.3 L440.0 924.1 L442.0 925.2 L444.0 926.0 L446.0 926.6 L448.0 926.9 L450.0 927.1 L452.0 927.3 L454.0 927.5 L456.0 927.5 L458.0 927.0 L460.0 926.0 L462.0 924.8 L464.0 922.3 L466.0 919.6 L468.0 916.9 L470.0 914.5 L472.0 913.6 L474.0 913.1 L476.0 912.8 L478.0 912.7 L480.0 912.6 L482.0 912.6 L484.0 912.6 L486.0 913.2 L488.0 914.5 L490.0 915.9 L492.0 917.8 L494.0 920.0 L496.0 922.4 L498.0 924.9 L500.0 927.2 L502.0 929.0 L504.0 930.5 L506.0 931.6 L508.0 932.2 L510.0 932.5 L512.0 932.3 L514.0 931.4 L516.0 930.1 L518.0 928.8 L520.0 927.6 L522.0 926.5 L524.0 925.4 L526.0 924.3 L528.0 923.1 L530.0 921.9 L532.0 920.8 L534.0 919.4 L536.0 916.9 L538.0 912.8 L540.0 907.0 L542.0 900.0 L544.0 892.8 L546.0 885.7 L548.0 879.2 L550.0 873.1 L552.0 867.8 L554.0 863.3 L556.0 859.7 L558.0 857.2 L560.0 855.4 L562.0 854.6 L564.0 854.5 L566.0 855.5 L568.0 857.9 L570.0 861.9 L572.0 867.0 L574.0 872.3 L576.0 878.4 L578.0 885.1 L580.0 892.5 L582.0 899.7 L584.0 906.5 L586.0 912.9 L588.0 918.7 L590.0 923.9 L592.0 928.5 L594.0 932.5 L596.0 936.0 L598.0 938.8 L600.0 941.1 L602.0 943.1 L604.0 945.0 L606.0 946.6 L608.0 948.0 L610.0 949.2 L612.0 950.0 L614.0 950.1 L616.0 949.6 L618.0 948.9 L620.0 948.2 L622.0 947.6 L624.0 947.4 L626.0 947.5 L628.0 947.6 L630.0 948.1 L632.0 948.9 L634.0 949.9 L636.0 950.8 L638.0 951.0 L640.0 950.5 L642.0 949.9 L644.0 949.0 L646.0 947.8 L648.0 946.3 L650.0 944.7 L652.0 942.7 L654.0 940.5 L656.0 938.6 L658.0 936.6 L660.0 934.4 L662.0 932.6 L664.0 931.4 L666.0 930.5 L668.0 929.9 L670.0 930.0 L672.0 930.4 L674.0 930.8 L676.0 931.1 L678.0 931.3 L680.0 931.4 L682.0 931.5 L684.0 931.4 L686.0 931.3 L688.0 930.8 L690.0 929.2 L692.0 927.0 L694.0 924.2 L696.0 920.6 L698.0 916.3 L700.0 910.8 L702.0 904.7 L704.0 898.1 L706.0 891.0 L708.0 883.9 L710.0 876.9 L712.0 870.2 L714.0 864.0 L716.0 858.5 L718.0 853.8 L720.0 849.9 L722.0 846.8 L724.0 844.3 L726.0 842.2 L728.0 840.7 L730.0 839.5 L732.0 838.6 L734.0 837.9 L736.0 837.4 L738.0 837.0 L740.0 836.4 L742.0 834.4 L744.0 831.0 L746.0 827.7 L748.0 824.7 L750.0 821.8 L752.0 819.0 L754.0 816.1 L756.0 813.1 L758.0 810.1 L760.0 807.3 L762.0 805.0 L764.0 802.8 L766.0 800.9 L768.0 799.4 L770.0 798.5 L772.0 797.9 L774.0 797.3 L776.0 796.8 L778.0 796.5 L780.0 796.5 L782.0 796.6 L784.0 796.9 L786.0 797.1 L788.0 797.2 L790.0 797.2 L792.0 797.0 L794.0 796.8 L796.0 796.6 L798.0 796.4 L800.0 796.1 L802.0 796.0 L804.0 795.8 L806.0 795.5 L808.0 795.2 L810.0 794.9 L812.0 794.5 L814.0 794.1 L816.0 793.7 L818.0 793.3 L820.0 792.9 L822.0 792.6 L824.0 792.4 L826.0 792.4 L828.0 792.8 L830.0 793.4 L832.0 794.1 L834.0 794.6 L836.0 794.8 L838.0 795.0 L840.0 795.1 L842.0 795.2 L844.0 795.3 L846.0 795.5 L848.0 795.7 L850.0 796.0 L852.0 796.4 L854.0 797.0 L856.0 797.6 L858.0 798.1 L860.0 798.4 L862.0 798.5 L864.0 798.2 L866.0 797.8 L868.0 797.3 L870.0 796.5 L872.0 795.2 L874.0 793.7 L876.0 792.6 L878.0 792.2 L880.0 792.4 L882.0 792.9 L884.0 793.5 L886.0 793.9 L888.0 793.9 L890.0 793.7 L892.0 793.4 L894.0 793.0 L896.0 792.6 L898.0 792.3 L900.0 792.1 L902.0 791.8 L904.0 791.6 L906.0 791.4 L908.0 791.2 L910.0 791.1 L912.0 791.0 L914.0 790.9 L916.0 790.8 L918.0 790.8 L920.0 790.7 L922.0 790.7 L924.0 790.8 L926.0 790.8 L928.0 791.0 L930.0 791.1 L932.0 791.3 L934.0 791.5 L936.0 791.7 L938.0 791.9 L940.0 792.1 L942.0 792.3 L944.0 792.4 L946.0 792.5 L948.0 792.6 L950.0 792.6 L952.0 792.6 L954.0 792.6 L956.0 792.7 L958.0 792.8 L960.0 792.9 L962.0 792.9 L964.0 792.9 L966.0 793.0 L968.0 793.5 L970.0 794.6 L972.0 795.9 L974.0 797.0 L976.0 798.2 L978.0 799.3 L980.0 800.1 L982.0 800.6 L984.0 800.9 L986.0 801.2 L988.0 801.4 L990.0 801.5 L992.0 801.3 L994.0 801.1 L996.0 800.8 L998.0 800.4 L1000.0 799.8 L1002.0 798.2 L1004.0 795.9 L1006.0 793.8 L1008.0 792.5 L1010.0 792.3 L1012.0 792.5 L1014.0 792.8 L1016.0 792.8 L1018.0 792.7 L1020.0 792.5 L1022.0 792.4 L1024.0 792.2 L1026.0 791.8 L1028.0 791.5 L1030.0 791.3 L1032.0 791.1 L1034.0 790.3 L1036.0 788.8 L1038.0 786.9 L1040.0 785.4 L1042.0 784.1 L1044.0 782.9 L1046.0 781.8 L1048.0 780.9 L1050.0 780.1 L1052.0 779.5 L1054.0 779.0 L1056.0 778.6 L1058.0 778.0 L1060.0 777.1 L1062.0 775.7 L1064.0 773.7 L1066.0 771.7 L1068.0 769.5 L1070.0 767.7 L1072.0 766.9 L1074.0 766.4 L1076.0 766.1 L1078.0 766.2 L1080.0 766.5 L1082.0 767.0 L1084.0 767.5 L1086.0 768.2 L1088.0 769.0 L1090.0 769.9 L1092.0 770.7 L1094.0 771.6 L1096.0 772.5 L1098.0 773.3 L1100.0 773.8 L1102.0 774.3 L1104.0 774.5 L1106.0 774.2 L1108.0 773.4 L1110.0 772.5 L1112.0 771.9 L1114.0 771.7 L1116.0 771.7 L1118.0 771.7 L1120.0 771.8 L1122.0 772.1 L1124.0 772.5 L1126.0 773.1 L1128.0 773.8 L1130.0 774.6 L1132.0 775.6 L1134.0 776.8 L1136.0 778.5 L1138.0 780.8 L1140.0 783.2 L1142.0 785.9 L1144.0 788.8 L1146.0 792.1 L1148.0 795.5 L1150.0 798.6 L1152.0 801.4 L1154.0 804.1 L1156.0 806.7 L1158.0 809.1 L1160.0 811.0 L1162.0 812.6 L1164.0 813.6 L1166.0 814.1 L1168.0 814.3 L1170.0 814.3 L1172.0 814.0 L1174.0 813.2 L1176.0 812.1 L1178.0 811.1 L1180.0 809.9 L1182.0 807.8 L1184.0 805.4 L1186.0 802.4 L1188.0 798.9 L1190.0 794.8 L1192.0 790.0 L1194.0 784.8 L1196.0 779.1 L1198.0 772.9 L1200.0 765.9 L1202.0 758.1 L1204.0 750.2 L1206.0 742.1 L1208.0 733.9 L1210.0 725.8 L1212.0 717.9 L1214.0 710.0 L1216.0 701.8 L1218.0 694.8 L1220.0 690.8 L1222.0 687.7 L1224.0 682.4 L1226.0 674.7 L1228.0 666.1 L1230.0 657.5 L1232.0 648.5 L1234.0 639.7 L1236.0 631.0 L1238.0 622.9 L1240.0 615.9 L1242.0 609.8 L1244.0 604.7 L1246.0 600.4 L1248.0 596.6 L1250.0 593.1 L1252.0 589.9 L1254.0 587.0 L1256.0 584.7 L1258.0 582.7 L1260.0 581.1 L1262.0 579.6 L1264.0 578.3 L1266.0 577.2 L1268.0 576.1 L1270.0 575.3 L1272.0 574.8 L1274.0 574.3 L1276.0 573.9 L1278.0 573.6 L1280.0 573.5 L1282.0 573.6 L1284.0 573.8 L1286.0 574.1 L1288.0 574.4 L1290.0 574.6 L1292.0 574.9 L1294.0 575.2 L1296.0 575.5 L1298.0 575.7 L1300.0 575.8 L1302.0 575.9 L1304.0 575.9 L1306.0 575.9 L1308.0 575.9 L1310.0 575.9 L1312.0 575.8 L1314.0 575.7 L1316.0 575.6 L1318.0 575.6 L1320.0 575.7 L1322.0 575.7 L1324.0 575.8 L1326.0 575.9 L1328.0 576.1 L1330.0 576.4 L1332.0 576.8 L1334.0 577.7 L1336.0 579.3 L1338.0 581.1 L1340.0 583.0 L1342.0 584.7 L1344.0 586.0 L1346.0 587.2 L1348.0 588.3 L1350.0 589.3 L1352.0 590.3 L1354.0 591.1 L1356.0 591.9 L1358.0 592.6 L1360.0 593.3 L1362.0 593.9 L1364.0 594.4 L1366.0 594.9 L1368.0 595.2 L1370.0 595.5 L1372.0 595.8 L1374.0 596.1 L1376.0 596.4 L1378.0 596.8 L1380.0 597.2 L1382.0 597.6 L1384.0 598.0 L1386.0 598.5 L1388.0 598.8 L1390.0 599.2 L1392.0 599.6 L1394.0 600.0 L1396.0 600.4 L1398.0 600.9 L1400.0 601.4 L1402.0 601.7 L1404.0 601.7 L1406.0 601.4 L1408.0 601.0 L1410.0 600.5 L1412.0 600.2 L1414.0 600.0 L1416.0 599.8 L1418.0 599.6 L1420.0 599.6 L1422.0 599.8 L1424.0 600.1 L1426.0 600.5 L1428.0 600.9 L1430.0 601.2 L1432.0 601.4 L1434.0 601.5 L1436.0 601.5 L1438.0 601.5 L1440.0 601.5 L1442.0 601.5 L1444.0 601.4 L1446.0 601.4 L1448.0 601.3 L1450.0 601.2 L1452.0 601.1 L1454.0 601.0 L1456.0 600.9 L1458.0 600.7 L1460.0 600.6 L1462.0 600.3 L1464.0 599.9 L1466.0 599.5 L1468.0 599.2 L1470.0 598.8 L1472.0 598.4 L1474.0 598.0 L1476.0 597.5 L1478.0 596.8 L1480.0 596.0 L1482.0 595.4 L1484.0 594.9 L1486.0 594.8 L1488.0 594.9 L1490.0 595.0 L1492.0 595.3 L1494.0 595.6 L1496.0 595.9 L1498.0 596.3 L1500.0 596.6 L1502.0 597.0 L1504.0 597.4 L1506.0 597.8 L1508.0 598.2 L1510.0 598.6 L1512.0 599.1 L1514.0 599.6 L1516.0 600.1 L1518.0 600.7 L1520.0 601.2 L1522.0 601.9 L1524.0 602.7 L1526.0 603.5 L1528.0 604.3 L1530.0 605.0 L1532.0 605.4 L1534.0 605.8 L1536.0 606.2 L1538.0 606.5 L1540.0 606.7 L1542.0 606.7 L1544.0 606.1 L1546.0 605.0 L1548.0 604.0 L1550.0 603.3 L1552.0 603.3 L1554.0 603.4 L1556.0 603.7 L1558.0 603.9 L1560.0 604.2 L1562.0 604.6 L1564.0 605.0 L1566.0 605.5 L1568.0 606.1 L1570.0 606.8 L1572.0 607.8 L1574.0 609.4 L1576.0 611.1 L1578.0 612.5 L1580.0 613.7 L1582.0 614.7 L1584.0 615.2 L1586.0 614.7 L1588.0 613.4 L1590.0 612.3 L1592.0 611.3 L1594.0 610.4 L1596.0 609.7 L1598.0 609.2 L1600.0 609.0 L1602.0 608.9 L1604.0 608.8 L1606.0 608.7 L1608.0 608.5 L1610.0 608.3 L1612.0 608.1 L1614.0 608.0 L1616.0 607.8 L1618.0 607.5 L1620.0 607.1 L1622.0 606.7 L1624.0 606.1 L1626.0 605.4 L1628.0 604.6 L1630.0 603.8 L1632.0 603.0 L1634.0 601.9 L1636.0 600.5 L1638.0 599.3 L1640.0 598.4 L1642.0 598.3 L1644.0 599.3 L1646.0 601.3 L1648.0 604.0 L1650.0 608.3 L1652.0 613.9 L1654.0 620.6 L1656.0 628.9 L1658.0 637.0 L1660.0 643.1 L1662.0 648.2 L1664.0 652.7 L1666.0 656.2 L1668.0 658.9 L1670.0 661.2 L1672.0 663.1 L1674.0 664.4 L1676.0 665.2 L1678.0 665.8 L1680.0 666.3 L1682.0 667.0 L1684.0 667.7 L1686.0 668.4 L1688.0 669.2 L1690.0 670.2 L1692.0 671.3 L1694.0 672.7 L1696.0 674.1 L1698.0 675.6 L1700.0 677.5 L1702.0 679.7 L1704.0 681.8 L1706.0 684.0 L1708.0 686.1 L1710.0 688.2 L1712.0 690.2 L1714.0 692.1 L1716.0 694.0 L1718.0 695.9 L1720.0 697.6 L1722.0 699.3 L1724.0 700.9 L1726.0 702.4 L1728.0 703.7 L1730.0 704.9 L1732.0 706.0 L1734.0 707.0 L1736.0 707.6 L1738.0 707.9 L1740.0 708.2 L1742.0 708.5 L1744.0 708.6 L1746.0 708.1 L1748.0 707.2 L1750.0 705.9 L1752.0 704.7 L1754.0 703.1 L1756.0 701.4 L1758.0 699.6 L1760.0 697.7 L1762.0 695.5 L1764.0 693.4 L1766.0 692.1 L1768.0 691.4 L1770.0 691.1 L1772.0 691.2 L1774.0 692.2 L1776.0 694.3 L1778.0 696.8" stroke="#6666ec" stroke-width="1.2" fill="none" stroke-linejoin="round"/>
<path d="M72.0 692.6 L74.0 693.9 L76.0 695.3 L78.0 696.6 L80.0 698.4 L82.0 700.6 L84.0 702.8 L86.0 704.8 L88.0 706.6 L90.0 708.3 L92.0 710.2 L94.0 712.4 L96.0 714.9 L98.0 717.5 L100.0 719.9 L102.0 722.3 L104.0 724.8 L106.0 727.2 L108.0 729.5 L110.0 732.3 L112.0 734.9 L114.0 735.8 L116.0 724.6 L118.0 708.8 L120.0 698.7 L122.0 688.8 L124.0 680.4 L126.0 672.2 L128.0 663.6 L130.0 655.1 L132.0 647.3 L134.0 639.8 L136.0 632.8 L138.0 626.7 L140.0 621.6 L142.0 617.3 L144.0 613.6 L146.0 610.1 L148.0 606.4 L150.0 602.2 L152.0 597.3 L154.0 591.2 L156.0 583.9 L158.0 576.3 L160.0 569.2 L162.0 562.1 L164.0 554.3 L166.0 546.4 L168.0 539.0 L170.0 532.2 L172.0 525.5 L174.0 518.7 L176.0 512.3 L178.0 506.5 L180.0 501.1 L182.0 495.7 L184.0 490.7 L186.0 486.7 L188.0 483.4 L190.0 480.2 L192.0 477.2 L194.0 474.5 L196.0 471.8 L198.0 469.0 L200.0 466.9 L202.0 466.0 L204.0 466.0 L206.0 468.0 L208.0 471.2 L210.0 474.0 L212.0 475.6 L214.0 477.7 L216.0 480.4 L218.0 482.2 L220.0 482.5 L222.0 482.0 L224.0 481.3 L226.0 480.6 L228.0 479.3 L230.0 477.3 L232.0 475.3 L234.0 474.4 L236.0 475.4 L238.0 476.9 L240.0 478.8 L242.0 481.1 L244.0 483.4 L246.0 485.5 L248.0 487.6 L250.0 489.8 L252.0 492.1 L254.0 494.4 L256.0 497.3 L258.0 500.4 L260.0 502.8 L262.0 504.9 L264.0 506.9 L266.0 509.0 L268.0 511.1 L270.0 513.4 L272.0 515.7 L274.0 518.5 L276.0 522.8 L278.0 528.3 L280.0 533.9 L282.0 539.1 L284.0 544.6 L286.0 550.4 L288.0 556.6 L290.0 563.0 L292.0 569.6 L294.0 576.5 L296.0 583.7 L298.0 590.9 L300.0 597.6 L302.0 604.8 L304.0 613.1 L306.0 622.2 L308.0 631.3 L310.0 639.7 L312.0 647.0 L314.0 653.1 L316.0 659.4 L318.0 667.3 L320.0 677.6 L322.0 684.3 L324.0 687.8 L326.0 690.6 L328.0 693.8 L330.0 696.9 L332.0 699.1 L334.0 700.7 L336.0 701.9 L338.0 702.6 L340.0 702.7 L342.0 702.5 L344.0 702.2 L346.0 701.5 L348.0 700.6 L350.0 700.1 L352.0 700.1 L354.0 700.7 L356.0 700.6 L358.0 700.6 L360.0 701.5 L362.0 702.2 L364.0 703.0 L366.0 704.0 L368.0 705.3 L370.0 706.7 L372.0 708.6 L374.0 710.7 L376.0 713.4 L378.0 716.1 L380.0 717.9 L382.0 719.6 L384.0 721.4 L386.0 723.2 L388.0 725.2 L390.0 727.2 L392.0 728.8 L394.0 730.0 L396.0 730.8 L398.0 731.5 L400.0 731.1 L402.0 730.5 L404.0 730.7 L406.0 731.2 L408.0 731.7 L410.0 732.2 L412.0 732.8 L414.0 733.5 L416.0 734.1 L418.0 734.8 L420.0 735.5 L422.0 736.2 L424.0 737.0 L426.0 739.6 L428.0 744.1 L430.0 748.9 L432.0 752.8 L434.0 756.3 L436.0 760.0 L438.0 763.5 L440.0 766.4 L442.0 768.5 L444.0 770.2 L446.0 771.1 L448.0 771.5 L450.0 771.8 L452.0 772.0 L454.0 772.5 L456.0 773.3 L458.0 774.5 L460.0 776.0 L462.0 778.3 L464.0 780.6 L466.0 782.9 L468.0 785.5 L470.0 788.4 L472.0 791.4 L474.0 793.4 L476.0 794.8 L478.0 795.6 L480.0 796.0 L482.0 796.2 L484.0 795.8 L486.0 795.1 L488.0 794.4 L490.0 793.6 L492.0 792.5 L494.0 791.4 L496.0 789.9 L498.0 788.1 L500.0 785.2 L502.0 781.4 L504.0 778.0 L506.0 775.1 L508.0 772.4 L510.0 769.8 L512.0 767.2 L514.0 764.4 L516.0 761.6 L518.0 758.9 L520.0 756.3 L522.0 753.8 L524.0 751.4 L526.0 749.0 L528.0 746.5 L530.0 744.2 L532.0 742.3 L534.0 740.9 L536.0 739.3 L538.0 737.4 L540.0 735.4 L542.0 733.5 L544.0 731.9 L546.0 730.7 L548.0 730.6 L550.0 730.8 L552.0 731.3 L554.0 731.9 L556.0 732.8 L558.0 733.9 L560.0 734.7 L562.0 735.7 L564.0 736.3 L566.0 736.4 L568.0 736.5 L570.0 736.8 L572.0 736.2 L574.0 735.1 L576.0 734.0 L578.0 732.9 L580.0 731.9 L582.0 731.0 L584.0 730.2 L586.0 729.6 L588.0 729.4 L590.0 729.2 L592.0 728.9 L594.0 728.8 L596.0 729.0 L598.0 729.2 L600.0 729.5 L602.0 730.0 L604.0 731.0 L606.0 732.2 L608.0 733.6 L610.0 734.9 L612.0 736.1 L614.0 737.3 L616.0 738.5 L618.0 740.2 L620.0 743.0 L622.0 746.5 L624.0 749.7 L626.0 752.3 L628.0 754.7 L630.0 757.2 L632.0 759.9 L634.0 762.6 L636.0 765.3 L638.0 767.9 L640.0 770.3 L642.0 772.8 L644.0 775.3 L646.0 777.7 L648.0 779.9 L650.0 782.0 L652.0 784.0 L654.0 786.1 L656.0 788.4 L658.0 790.6 L660.0 792.1 L662.0 793.3 L664.0 794.4 L666.0 794.7 L668.0 794.5 L670.0 794.6 L672.0 794.4 L674.0 793.4 L676.0 791.9 L678.0 790.2 L680.0 788.2 L682.0 786.4 L684.0 784.9 L686.0 783.6 L688.0 782.4 L690.0 781.0 L692.0 779.4 L694.0 777.8 L696.0 776.3 L698.0 775.0 L700.0 773.8 L702.0 772.7 L704.0 772.0 L706.0 771.3 L708.0 770.7 L710.0 770.3 L712.0 769.1 L714.0 767.3 L716.0 765.5 L718.0 763.8 L720.0 762.2 L722.0 760.8 L724.0 759.7 L726.0 758.7 L728.0 758.0 L730.0 757.4 L732.0 756.9 L734.0 756.3 L736.0 755.6 L738.0 754.8 L740.0 754.2 L742.0 753.1 L744.0 751.6 L746.0 750.4 L748.0 750.3 L750.0 750.9 L752.0 751.6 L754.0 752.6 L756.0 753.4 L758.0 753.6 L760.0 753.6 L762.0 753.6 L764.0 753.6 L766.0 753.6 L768.0 753.8 L770.0 754.3 L772.0 754.7 L774.0 754.9 L776.0 754.9 L778.0 754.8 L780.0 754.7 L782.0 754.8 L784.0 754.9 L786.0 754.9 L788.0 754.7 L790.0 754.3 L792.0 753.9 L794.0 753.5 L796.0 753.3 L798.0 753.2 L800.0 753.0 L802.0 752.8 L804.0 752.6 L806.0 752.0 L808.0 751.1 L810.0 750.1 L812.0 749.1 L814.0 748.0 L816.0 746.9 L818.0 745.7 L820.0 744.5 L822.0 743.5 L824.0 742.7 L826.0 742.0 L828.0 741.5 L830.0 741.2 L832.0 741.2 L834.0 741.1 L836.0 741.0 L838.0 740.9 L840.0 740.8 L842.0 740.8 L844.0 740.9 L846.0 741.0 L848.0 741.2 L850.0 741.4 L852.0 741.7 L854.0 742.0 L856.0 742.3 L858.0 742.6 L860.0 742.8 L862.0 742.9 L864.0 742.9 L866.0 742.9 L868.0 742.9 L870.0 742.9 L872.0 742.7 L874.0 742.4 L876.0 742.0 L878.0 741.8 L880.0 741.8 L882.0 741.8 L884.0 741.8 L886.0 741.7 L888.0 741.5 L890.0 741.2 L892.0 740.9 L894.0 740.5 L896.0 740.1 L898.0 739.7 L900.0 739.4 L902.0 739.2 L904.0 739.1 L906.0 739.1 L908.0 739.1 L910.0 739.1 L912.0 739.1 L914.0 739.1 L916.0 739.2 L918.0 739.3 L920.0 739.4 L922.0 739.6 L924.0 739.9 L926.0 740.2 L928.0 740.5 L930.0 740.9 L932.0 741.2 L934.0 741.6 L936.0 742.1 L938.0 742.5 L940.0 743.0 L942.0 743.4 L944.0 743.7 L946.0 743.9 L948.0 744.0 L950.0 743.8 L952.0 743.5 L954.0 743.0 L956.0 742.5 L958.0 741.9 L960.0 740.9 L962.0 739.2 L964.0 737.1 L966.0 734.8 L968.0 732.1 L970.0 729.5 L972.0 728.0 L974.0 726.9 L976.0 726.1 L978.0 725.7 L980.0 725.6 L982.0 725.5 L984.0 725.5 L986.0 725.4 L988.0 725.2 L990.0 724.7 L992.0 724.1 L994.0 723.2 L996.0 722.2 L998.0 721.1 L1000.0 719.6 L1002.0 717.5 L1004.0 714.8 L1006.0 711.7 L1008.0 708.4 L1010.0 705.3 L1012.0 702.6 L1014.0 700.0 L1016.0 697.1 L1018.0 693.7 L1020.0 690.3 L1022.0 687.6 L1024.0 685.4 L1026.0 683.6 L1028.0 682.4 L1030.0 681.5 L1032.0 680.7 L1034.0 679.9 L1036.0 678.8 L1038.0 677.8 L1040.0 676.9 L1042.0 676.1 L1044.0 675.5 L1046.0 674.9 L1048.0 674.5 L1050.0 674.2 L1052.0 674.1 L1054.0 674.1 L1056.0 674.2 L1058.0 674.3 L1060.0 674.4 L1062.0 674.6 L1064.0 674.7 L1066.0 674.7 L1068.0 674.6 L1070.0 674.5 L1072.0 674.8 L1074.0 675.0 L1076.0 675.1 L1078.0 675.4 L1080.0 675.7 L1082.0 676.0 L1084.0 676.3 L1086.0 676.5 L1088.0 676.8 L1090.0 677.1 L1092.0 677.4 L1094.0 677.6 L1096.0 677.8 L1098.0 678.0 L1100.0 678.1 L1102.0 678.1 L1104.0 678.0 L1106.0 677.6 L1108.0 676.9 L1110.0 675.9 L1112.0 674.8 L1114.0 673.6 L1116.0 672.3 L1118.0 671.1 L1120.0 669.8 L1122.0 668.4 L1124.0 667.0 L1126.0 665.7 L1128.0 664.6 L1130.0 663.5 L1132.0 662.4 L1134.0 660.9 L1136.0 659.0 L1138.0 656.8 L1140.0 654.4 L1142.0 651.9 L1144.0 649.2 L1146.0 646.3 L1148.0 643.1 L1150.0 639.5 L1152.0 635.7 L1154.0 632.0 L1156.0 628.3 L1158.0 624.3 L1160.0 620.0 L1162.0 615.4 L1164.0 610.4 L1166.0 604.9 L1168.0 599.4 L1170.0 593.9 L1172.0 588.4 L1174.0 583.2 L1176.0 578.6 L1178.0 574.5 L1180.0 570.9 L1182.0 567.3 L1184.0 563.9 L1186.0 561.0 L1188.0 558.3 L1190.0 555.7 L1192.0 553.1 L1194.0 550.5 L1196.0 547.7 L1198.0 544.5 L1200.0 540.8 L1202.0 537.1 L1204.0 533.7 L1206.0 530.9 L1208.0 528.5 L1210.0 526.3 L1212.0 524.8 L1214.0 523.8 L1216.0 523.1 L1218.0 523.4 L1220.0 525.1 L1222.0 527.2 L1224.0 528.2 L1226.0 528.4 L1228.0 528.4 L1230.0 528.6 L1232.0 528.7 L1234.0 528.6 L1236.0 528.4 L1238.0 528.1 L1240.0 528.3 L1242.0 528.7 L1244.0 529.5 L1246.0 530.6 L1248.0 531.6 L1250.0 532.4 L1252.0 533.1 L1254.0 533.7 L1256.0 534.3 L1258.0 535.0 L1260.0 535.7 L1262.0 536.2 L1264.0 536.5 L1266.0 536.7 L1268.0 536.7 L1270.0 536.7 L1272.0 536.6 L1274.0 536.1 L1276.0 535.4 L1278.0 534.7 L1280.0 534.0 L1282.0 533.2 L1284.0 532.3 L1286.0 531.5 L1288.0 530.8 L1290.0 530.1 L1292.0 529.6 L1294.0 529.0 L1296.0 528.6 L1298.0 528.1 L1300.0 527.6 L1302.0 527.1 L1304.0 526.7 L1306.0 526.3 L1308.0 525.9 L1310.0 525.6 L1312.0 525.2 L1314.0 525.0 L1316.0 524.9 L1318.0 525.7 L1320.0 526.5 L1322.0 526.5 L1324.0 526.2 L1326.0 525.8 L1328.0 525.4 L1330.0 525.0 L1332.0 524.6 L1334.0 524.5 L1336.0 524.6 L1338.0 524.9 L1340.0 525.1 L1342.0 525.4 L1344.0 525.5 L1346.0 525.6 L1348.0 525.7 L1350.0 525.8 L1352.0 525.9 L1354.0 525.9 L1356.0 526.0 L1358.0 526.0 L1360.0 526.1 L1362.0 526.1 L1364.0 526.1 L1366.0 526.1 L1368.0 526.1 L1370.0 526.1 L1372.0 526.2 L1374.0 526.2 L1376.0 526.4 L1378.0 526.5 L1380.0 526.7 L1382.0 526.8 L1384.0 527.0 L1386.0 527.2 L1388.0 527.5 L1390.0 528.1 L1392.0 528.7 L1394.0 529.5 L1396.0 530.4 L1398.0 531.8 L1400.0 533.5 L1402.0 535.2 L1404.0 536.9 L1406.0 538.6 L1408.0 540.3 L1410.0 541.9 L1412.0 543.4 L1414.0 545.0 L1416.0 546.4 L1418.0 547.6 L1420.0 548.9 L1422.0 550.1 L1424.0 551.3 L1426.0 552.3 L1428.0 553.1 L1430.0 553.9 L1432.0 554.5 L1434.0 554.8 L1436.0 554.9 L1438.0 554.9 L1440.0 554.8 L1442.0 554.7 L1444.0 554.5 L1446.0 554.3 L1448.0 554.1 L1450.0 553.7 L1452.0 553.3 L1454.0 552.9 L1456.0 552.3 L1458.0 551.8 L1460.0 551.2 L1462.0 550.4 L1464.0 549.5 L1466.0 548.7 L1468.0 548.1 L1470.0 547.5 L1472.0 547.1 L1474.0 546.6 L1476.0 546.2 L1478.0 545.9 L1480.0 545.6 L1482.0 545.4 L1484.0 545.2 L1486.0 545.2 L1488.0 545.3 L1490.0 545.5 L1492.0 545.8 L1494.0 546.3 L1496.0 546.8 L1498.0 547.3 L1500.0 547.6 L1502.0 547.8 L1504.0 547.9 L1506.0 548.0 L1508.0 548.0 L1510.0 548.0 L1512.0 548.0 L1514.0 548.1 L1516.0 548.1 L1518.0 548.1 L1520.0 548.1 L1522.0 548.2 L1524.0 548.5 L1526.0 548.8 L1528.0 549.1 L1530.0 549.4 L1532.0 549.6 L1534.0 549.7 L1536.0 549.9 L1538.0 550.1 L1540.0 550.3 L1542.0 550.5 L1544.0 550.4 L1546.0 550.2 L1548.0 550.0 L1550.0 550.1 L1552.0 550.3 L1554.0 550.7 L1556.0 551.2 L1558.0 551.7 L1560.0 552.1 L1562.0 552.7 L1564.0 553.3 L1566.0 553.9 L1568.0 554.5 L1570.0 555.2 L1572.0 555.9 L1574.0 556.7 L1576.0 557.6 L1578.0 558.4 L1580.0 559.2 L1582.0 560.3 L1584.0 561.7 L1586.0 562.8 L1588.0 563.8 L1590.0 564.7 L1592.0 565.9 L1594.0 567.1 L1596.0 568.3 L1598.0 569.5 L1600.0 570.7 L1602.0 571.9 L1604.0 573.0 L1606.0 573.7 L1608.0 574.2 L1610.0 574.5 L1612.0 574.8 L1614.0 575.0 L1616.0 575.1 L1618.0 575.1 L1620.0 575.0 L1622.0 574.7 L1624.0 574.3 L1626.0 573.9 L1628.0 573.5 L1630.0 573.1 L1632.0 572.6 L1634.0 572.1 L1636.0 571.4 L1638.0 570.8 L1640.0 570.3 L1642.0 570.0 L1644.0 570.2 L1646.0 570.6 L1648.0 570.9 L1650.0 570.5 L1652.0 569.9 L1654.0 569.3 L1656.0 568.8 L1658.0 568.4 L1660.0 568.2 L1662.0 568.0 L1664.0 568.1 L1666.0 568.4 L1668.0 568.5 L1670.0 568.9 L1672.0 569.7 L1674.0 570.2 L1676.0 570.5 L1678.0 570.7 L1680.0 571.1 L1682.0 571.7 L1684.0 572.3 L1686.0 573.0 L1688.0 573.8 L1690.0 574.6 L1692.0 575.6 L1694.0 576.4 L1696.0 577.0 L1698.0 577.5 L1700.0 578.1 L1702.0 578.7 L1704.0 579.5 L1706.0 580.3 L1708.0 581.2 L1710.0 582.0 L1712.0 582.8 L1714.0 583.7 L1716.0 585.0 L1718.0 586.5 L1720.0 588.0 L1722.0 589.4 L1724.0 590.9 L1726.0 592.4 L1728.0 594.0 L1730.0 595.5 L1732.0 597.1 L1734.0 598.7 L1736.0 600.4 L1738.0 602.2 L1740.0 604.2 L1742.0 606.3 L1744.0 608.7 L1746.0 611.2 L1748.0 613.8 L1750.0 616.3 L1752.0 618.8 L1754.0 621.3 L1756.0 623.7 L1758.0 625.9 L1760.0 627.8 L1762.0 629.4 L1764.0 631.0 L1766.0 632.7 L1768.0 634.6 L1770.0 636.5 L1772.0 638.5 L1774.0 640.5 L1776.0 642.5 L1778.0 644.4" stroke="#bd58e2" stroke-width="1.2" fill="none" stroke-linejoin="round"/>
<path d="M72.0 786.4 L74.0 788.9 L76.0 791.7 L78.0 794.2 L80.0 796.7 L82.0 799.2 L84.0 801.4 L86.0 803.2 L88.0 804.8 L90.0 806.0 L92.0 807.0 L94.0 807.7 L96.0 808.1 L98.0 808.2 L100.0 807.9 L102.0 807.4 L104.0 806.8 L106.0 806.3 L108.0 805.8 L110.0 805.7 L112.0 805.9 L114.0 805.7 L116.0 802.0 L118.0 809.6 L120.0 821.2 L122.0 826.7 L124.0 830.4 L126.0 832.7 L128.0 833.7 L130.0 834.0 L132.0 834.4 L134.0 834.6 L136.0 834.7 L138.0 834.5 L140.0 834.0 L142.0 833.5 L144.0 832.9 L146.0 832.2 L148.0 831.2 L150.0 829.8 L152.0 827.9 L154.0 825.5 L156.0 822.7 L158.0 820.3 L160.0 818.4 L162.0 816.1 L164.0 812.5 L166.0 808.3 L168.0 804.2 L170.0 800.0 L172.0 795.0 L174.0 789.5 L176.0 783.8 L178.0 778.0 L180.0 771.7 L182.0 764.9 L184.0 758.2 L186.0 752.1 L188.0 746.4 L190.0 740.7 L192.0 734.8 L194.0 728.5 L196.0 721.5 L198.0 713.4 L200.0 705.0 L202.0 697.0 L204.0 689.1 L206.0 681.9 L208.0 675.3 L210.0 669.2 L212.0 662.9 L214.0 657.8 L216.0 654.9 L218.0 652.6 L220.0 651.2 L222.0 651.8 L224.0 654.1 L226.0 657.3 L228.0 661.9 L230.0 667.1 L232.0 671.8 L234.0 676.8 L236.0 682.5 L238.0 688.1 L240.0 693.2 L242.0 697.9 L244.0 702.2 L246.0 705.9 L248.0 709.4 L250.0 712.8 L252.0 715.8 L254.0 718.3 L256.0 720.7 L258.0 722.9 L260.0 724.9 L262.0 727.2 L264.0 729.9 L266.0 732.8 L268.0 735.7 L270.0 738.6 L272.0 741.3 L274.0 743.9 L276.0 747.2 L278.0 751.0 L280.0 754.5 L282.0 757.6 L284.0 760.7 L286.0 763.9 L288.0 766.8 L290.0 769.4 L292.0 771.6 L294.0 773.6 L296.0 775.4 L298.0 776.6 L300.0 776.1 L302.0 774.9 L304.0 774.1 L306.0 773.8 L308.0 773.3 L310.0 772.3 L312.0 770.5 L314.0 767.7 L316.0 763.8 L318.0 761.2 L320.0 763.0 L322.0 765.2 L324.0 766.4 L326.0 767.9 L328.0 770.9 L330.0 774.7 L332.0 777.7 L334.0 779.9 L336.0 781.7 L338.0 782.6 L340.0 782.6 L342.0 782.0 L344.0 781.2 L346.0 779.5 L348.0 776.8 L350.0 773.9 L352.0 771.7 L354.0 770.9 L356.0 771.6 L358.0 773.4 L360.0 775.3 L362.0 776.7 L364.0 778.1 L366.0 779.5 L368.0 780.8 L370.0 781.9 L372.0 782.6 L374.0 782.9 L376.0 783.4 L378.0 784.5 L380.0 785.8 L382.0 787.6 L384.0 789.7 L386.0 791.8 L388.0 794.1 L390.0 796.6 L392.0 799.0 L394.0 801.5 L396.0 804.0 L398.0 807.0 L400.0 809.8 L402.0 812.5 L404.0 815.4 L406.0 818.2 L408.0 820.8 L410.0 823.4 L412.0 826.1 L414.0 828.9 L416.0 831.7 L418.0 834.6 L420.0 837.7 L422.0 841.2 L424.0 846.0 L426.0 852.3 L428.0 858.3 L430.0 862.7 L432.0 864.2 L434.0 865.0 L436.0 866.9 L438.0 869.4 L440.0 871.5 L442.0 873.0 L444.0 874.1 L446.0 874.8 L448.0 875.1 L450.0 875.3 L452.0 875.5 L454.0 875.8 L456.0 876.1 L458.0 876.1 L460.0 876.0 L462.0 875.9 L464.0 875.1 L466.0 874.0 L468.0 873.1 L470.0 872.5 L472.0 872.9 L474.0 873.2 L476.0 873.5 L478.0 873.7 L480.0 873.8 L482.0 873.8 L484.0 873.6 L486.0 873.8 L488.0 874.5 L490.0 875.2 L492.0 876.0 L494.0 877.1 L496.0 878.2 L498.0 879.3 L500.0 879.9 L502.0 879.8 L504.0 879.7 L506.0 879.4 L508.0 878.9 L510.0 878.3 L512.0 877.2 L514.0 875.7 L516.0 874.0 L518.0 872.2 L520.0 870.5 L522.0 868.9 L524.0 867.4 L526.0 865.9 L528.0 864.2 L530.0 862.7 L532.0 861.3 L534.0 859.9 L536.0 857.7 L538.0 854.3 L540.0 849.8 L542.0 844.5 L544.0 839.2 L546.0 834.1 L548.0 829.7 L550.0 825.7 L552.0 822.3 L554.0 819.5 L556.0 817.4 L558.0 816.1 L560.0 815.2 L562.0 814.9 L564.0 815.1 L566.0 815.8 L568.0 817.4 L570.0 820.2 L572.0 823.4 L574.0 826.6 L576.0 830.3 L578.0 834.4 L580.0 839.0 L582.0 843.5 L584.0 847.8 L586.0 851.8 L588.0 855.6 L590.0 859.0 L592.0 862.0 L594.0 864.6 L596.0 867.0 L598.0 868.9 L600.0 870.6 L602.0 872.1 L604.0 873.7 L606.0 875.2 L608.0 876.5 L610.0 877.8 L612.0 878.7 L614.0 879.2 L616.0 879.2 L618.0 879.3 L620.0 879.8 L622.0 880.6 L624.0 881.5 L626.0 882.4 L628.0 883.3 L630.0 884.5 L632.0 885.9 L634.0 887.5 L636.0 889.0 L638.0 890.0 L640.0 890.5 L642.0 890.9 L644.0 891.1 L646.0 891.1 L648.0 890.9 L650.0 890.5 L652.0 889.8 L654.0 889.0 L656.0 888.5 L658.0 887.9 L660.0 887.0 L662.0 886.1 L664.0 885.7 L666.0 885.2 L668.0 884.8 L670.0 884.9 L672.0 885.1 L674.0 885.0 L676.0 884.7 L678.0 884.2 L680.0 883.7 L682.0 883.1 L684.0 882.6 L686.0 882.1 L688.0 881.3 L690.0 879.8 L692.0 877.8 L694.0 875.4 L696.0 872.5 L698.0 869.2 L700.0 865.2 L702.0 860.7 L704.0 856.0 L706.0 851.1 L708.0 846.2 L710.0 841.3 L712.0 836.5 L714.0 831.8 L716.0 827.5 L718.0 823.8 L720.0 820.7 L722.0 818.1 L724.0 816.1 L726.0 814.4 L728.0 813.1 L730.0 812.1 L732.0 811.3 L734.0 810.7 L736.0 810.1 L738.0 809.6 L740.0 809.0 L742.0 807.3 L744.0 804.6 L746.0 801.9 L748.0 799.9 L750.0 798.2 L752.0 796.5 L754.0 795.0 L756.0 793.2 L758.0 791.2 L760.0 789.4 L762.0 787.9 L764.0 786.4 L766.0 785.1 L768.0 784.2 L770.0 783.8 L772.0 783.5 L774.0 783.2 L776.0 782.8 L778.0 782.6 L780.0 782.6 L782.0 782.7 L784.0 782.9 L786.0 783.0 L788.0 783.0 L790.0 782.9 L792.0 782.6 L794.0 782.4 L796.0 782.2 L798.0 782.0 L800.0 781.8 L802.0 781.6 L804.0 781.4 L806.0 781.0 L808.0 780.5 L810.0 779.9 L812.0 779.4 L814.0 778.8 L816.0 778.1 L818.0 777.4 L820.0 776.8 L822.0 776.2 L824.0 775.8 L826.0 775.6 L828.0 775.7 L830.0 776.0 L832.0 776.4 L834.0 776.7 L836.0 776.9 L838.0 776.9 L840.0 777.0 L842.0 777.1 L844.0 777.2 L846.0 777.3 L848.0 777.5 L850.0 777.8 L852.0 778.1 L854.0 778.6 L856.0 779.1 L858.0 779.6 L860.0 779.9 L862.0 779.9 L864.0 779.8 L866.0 779.5 L868.0 779.1 L870.0 778.6 L872.0 777.7 L874.0 776.6 L876.0 775.7 L878.0 775.4 L880.0 775.5 L882.0 775.9 L884.0 776.2 L886.0 776.5 L888.0 776.5 L890.0 776.2 L892.0 775.9 L894.0 775.5 L896.0 775.1 L898.0 774.8 L900.0 774.5 L902.0 774.3 L904.0 774.1 L906.0 773.9 L908.0 773.8 L910.0 773.8 L912.0 773.7 L914.0 773.7 L916.0 773.6 L918.0 773.6 L920.0 773.6 L922.0 773.7 L924.0 773.8 L926.0 774.0 L928.0 774.2 L930.0 774.4 L932.0 774.6 L934.0 774.9 L936.0 775.2 L938.0 775.5 L940.0 775.7 L942.0 776.0 L944.0 776.2 L946.0 776.3 L948.0 776.4 L950.0 776.4 L952.0 776.3 L954.0 776.1 L956.0 775.9 L958.0 775.8 L960.0 775.5 L962.0 775.0 L964.0 774.3 L966.0 773.6 L968.0 773.1 L970.0 772.9 L972.0 773.2 L974.0 773.6 L976.0 774.1 L978.0 774.7 L980.0 775.3 L982.0 775.6 L984.0 775.8 L986.0 775.9 L988.0 776.0 L990.0 775.9 L992.0 775.6 L994.0 775.1 L996.0 774.6 L998.0 773.9 L1000.0 773.0 L1002.0 771.3 L1004.0 768.9 L1006.0 766.4 L1008.0 764.5 L1010.0 763.3 L1012.0 762.5 L1014.0 761.8 L1016.0 760.9 L1018.0 759.7 L1020.0 758.5 L1022.0 757.5 L1024.0 756.6 L1026.0 755.8 L1028.0 755.1 L1030.0 754.7 L1032.0 754.3 L1034.0 753.5 L1036.0 752.1 L1038.0 750.5 L1040.0 749.2 L1042.0 748.1 L1044.0 747.1 L1046.0 746.2 L1048.0 745.4 L1050.0 744.8 L1052.0 744.3 L1054.0 744.0 L1056.0 743.8 L1058.0 743.4 L1060.0 742.9 L1062.0 742.0 L1064.0 740.7 L1066.0 739.4 L1068.0 737.9 L1070.0 736.6 L1072.0 736.2 L1074.0 735.9 L1076.0 735.8 L1078.0 735.9 L1080.0 736.2 L1082.0 736.7 L1084.0 737.1 L1086.0 737.6 L1088.0 738.3 L1090.0 739.0 L1092.0 739.6 L1094.0 740.3 L1096.0 740.9 L1098.0 741.5 L1100.0 741.9 L1102.0 742.3 L1104.0 742.4 L1106.0 742.0 L1108.0 741.2 L1110.0 740.3 L1112.0 739.5 L1114.0 739.0 L1116.0 738.6 L1118.0 738.2 L1120.0 737.8 L1122.0 737.5 L1124.0 737.3 L1126.0 737.3 L1128.0 737.4 L1130.0 737.6 L1132.0 737.9 L1134.0 738.2 L1136.0 738.7 L1138.0 739.5 L1140.0 740.3 L1142.0 741.2 L1144.0 742.2 L1146.0 743.5 L1148.0 744.7 L1150.0 745.5 L1152.0 746.2 L1154.0 746.8 L1156.0 747.2 L1158.0 747.5 L1160.0 747.3 L1162.0 746.8 L1164.0 745.9 L1166.0 744.4 L1168.0 742.7 L1170.0 740.8 L1172.0 738.8 L1174.0 736.5 L1176.0 734.3 L1178.0 732.2 L1180.0 730.2 L1182.0 727.6 L1184.0 724.9 L1186.0 722.0 L1188.0 718.7 L1190.0 715.1 L1192.0 711.0 L1194.0 706.7 L1196.0 702.0 L1198.0 696.7 L1200.0 690.8 L1202.0 684.4 L1204.0 678.0 L1206.0 671.7 L1208.0 665.4 L1210.0 659.3 L1212.0 653.5 L1214.0 648.0 L1216.0 642.2 L1218.0 637.6 L1220.0 635.6 L1222.0 634.2 L1224.0 631.0 L1226.0 625.9 L1228.0 620.2 L1230.0 614.5 L1232.0 608.6 L1234.0 602.7 L1236.0 596.8 L1238.0 591.3 L1240.0 586.7 L1242.0 582.8 L1244.0 579.6 L1246.0 577.1 L1248.0 574.9 L1250.0 572.9 L1252.0 571.0 L1254.0 569.3 L1256.0 567.9 L1258.0 566.8 L1260.0 565.9 L1262.0 565.2 L1264.0 564.4 L1266.0 563.7 L1268.0 563.0 L1270.0 562.5 L1272.0 562.0 L1274.0 561.6 L1276.0 561.1 L1278.0 560.6 L1280.0 560.3 L1282.0 560.1 L1284.0 560.0 L1286.0 559.9 L1288.0 559.8 L1290.0 559.8 L1292.0 559.8 L1294.0 559.8 L1296.0 559.8 L1298.0 559.8 L1300.0 559.7 L1302.0 559.6 L1304.0 559.5 L1306.0 559.4 L1308.0 559.2 L1310.0 559.1 L1312.0 559.0 L1314.0 558.8 L1316.0 558.7 L1318.0 559.0 L1320.0 559.3 L1322.0 559.3 L1324.0 559.3 L1326.0 559.2 L1328.0 559.2 L1330.0 559.2 L1332.0 559.4 L1334.0 560.0 L1336.0 561.0 L1338.0 562.4 L1340.0 563.7 L1342.0 564.9 L1344.0 565.9 L1346.0 566.7 L1348.0 567.4 L1350.0 568.2 L1352.0 568.8 L1354.0 569.4 L1356.0 569.9 L1358.0 570.4 L1360.0 570.9 L1362.0 571.3 L1364.0 571.7 L1366.0 572.0 L1368.0 572.2 L1370.0 572.4 L1372.0 572.6 L1374.0 572.8 L1376.0 573.1 L1378.0 573.3 L1380.0 573.7 L1382.0 574.0 L1384.0 574.4 L1386.0 574.7 L1388.0 575.1 L1390.0 575.5 L1392.0 576.0 L1394.0 576.5 L1396.0 577.1 L1398.0 577.8 L1400.0 578.7 L1402.0 579.5 L1404.0 580.1 L1406.0 580.4 L1408.0 580.7 L1410.0 581.0 L1412.0 581.3 L1414.0 581.7 L1416.0 582.0 L1418.0 582.3 L1420.0 582.7 L1422.0 583.2 L1424.0 583.8 L1426.0 584.4 L1428.0 585.0 L1430.0 585.4 L1432.0 585.8 L1434.0 586.0 L1436.0 586.0 L1438.0 586.0 L1440.0 585.9 L1442.0 585.9 L1444.0 585.8 L1446.0 585.7 L1448.0 585.6 L1450.0 585.4 L1452.0 585.2 L1454.0 585.0 L1456.0 584.7 L1458.0 584.4 L1460.0 584.1 L1462.0 583.6 L1464.0 583.1 L1466.0 582.6 L1468.0 582.1 L1470.0 581.7 L1472.0 581.3 L1474.0 580.9 L1476.0 580.4 L1478.0 579.8 L1480.0 579.2 L1482.0 578.7 L1484.0 578.3 L1486.0 578.3 L1488.0 578.3 L1490.0 578.5 L1492.0 578.8 L1494.0 579.1 L1496.0 579.6 L1498.0 579.9 L1500.0 580.3 L1502.0 580.6 L1504.0 580.9 L1506.0 581.2 L1508.0 581.5 L1510.0 581.8 L1512.0 582.1 L1514.0 582.4 L1516.0 582.8 L1518.0 583.1 L1520.0 583.5 L1522.0 584.0 L1524.0 584.6 L1526.0 585.3 L1528.0 585.9 L1530.0 586.4 L1532.0 586.8 L1534.0 587.1 L1536.0 587.4 L1538.0 587.7 L1540.0 587.9 L1542.0 587.9 L1544.0 587.5 L1546.0 586.8 L1548.0 586.0 L1550.0 585.6 L1552.0 585.6 L1554.0 585.9 L1556.0 586.2 L1558.0 586.5 L1560.0 586.9 L1562.0 587.3 L1564.0 587.8 L1566.0 588.3 L1568.0 588.9 L1570.0 589.6 L1572.0 590.5 L1574.0 591.9 L1576.0 593.3 L1578.0 594.5 L1580.0 595.5 L1582.0 596.6 L1584.0 597.4 L1586.0 597.4 L1588.0 596.9 L1590.0 596.5 L1592.0 596.2 L1594.0 595.9 L1596.0 595.9 L1598.0 596.0 L1600.0 596.3 L1602.0 596.6 L1604.0 596.9 L1606.0 597.0 L1608.0 597.0 L1610.0 597.0 L1612.0 597.0 L1614.0 597.0 L1616.0 596.9 L1618.0 596.7 L1620.0 596.4 L1622.0 596.0 L1624.0 595.5 L1626.0 594.9 L1628.0 594.3 L1630.0 593.6 L1632.0 592.9 L1634.0 591.9 L1636.0 590.8 L1638.0 589.8 L1640.0 589.0 L1642.0 588.8 L1644.0 589.6 L1646.0 591.0 L1648.0 593.0 L1650.0 595.7 L1652.0 599.2 L1654.0 603.5 L1656.0 608.9 L1658.0 614.1 L1660.0 618.1 L1662.0 621.5 L1664.0 624.5 L1666.0 626.9 L1668.0 628.7 L1670.0 630.4 L1672.0 632.0 L1674.0 633.0 L1676.0 633.7 L1678.0 634.1 L1680.0 634.6 L1682.0 635.2 L1684.0 635.9 L1686.0 636.6 L1688.0 637.4 L1690.0 638.3 L1692.0 639.4 L1694.0 640.6 L1696.0 641.7 L1698.0 642.9 L1700.0 644.4 L1702.0 646.0 L1704.0 647.7 L1706.0 649.4 L1708.0 651.1 L1710.0 652.8 L1712.0 654.4 L1714.0 656.0 L1716.0 657.7 L1718.0 659.4 L1720.0 661.1 L1722.0 662.6 L1724.0 664.2 L1726.0 665.7 L1728.0 667.1 L1730.0 668.4 L1732.0 669.7 L1734.0 670.9 L1736.0 671.8 L1738.0 672.7 L1740.0 673.5 L1742.0 674.4 L1744.0 675.3 L1746.0 675.8 L1748.0 676.0 L1750.0 676.1 L1752.0 676.0 L1754.0 675.9 L1756.0 675.5 L1758.0 675.0 L1760.0 674.4 L1762.0 673.5 L1764.0 672.6 L1766.0 672.3 L1768.0 672.5 L1770.0 672.9 L1772.0 673.6 L1774.0 675.0 L1776.0 677.1 L1778.0 679.3" stroke="#bd58e2" stroke-width="1.2" fill="none" stroke-linejoin="round"/>
<path d="M72.0 739.5 L74.0 741.4 L76.0 743.5 L78.0 745.4 L80.0 747.6 L82.0 749.9 L84.0 752.1 L86.0 754.0 L88.0 755.7 L90.0 757.2 L92.0 758.6 L94.0 760.1 L96.0 761.5 L98.0 762.8 L100.0 763.9 L102.0 764.8 L104.0 765.8 L106.0 766.7 L108.0 767.6 L110.0 769.0 L112.0 770.4 L114.0 770.7 L116.0 763.3 L118.0 759.2 L120.0 760.0 L122.0 757.7 L124.0 755.4 L126.0 752.5 L128.0 748.6 L130.0 744.5 L132.0 740.8 L134.0 737.2 L136.0 733.7 L138.0 730.6 L140.0 727.8 L142.0 725.4 L144.0 723.3 L146.0 721.2 L148.0 718.8 L150.0 716.0 L152.0 712.6 L154.0 708.3 L156.0 703.3 L158.0 698.3 L160.0 693.8 L162.0 689.1 L164.0 683.4 L166.0 677.4 L168.0 671.6 L170.0 666.1 L172.0 660.2 L174.0 654.1 L176.0 648.1 L178.0 642.3 L180.0 636.4 L182.0 630.3 L184.0 624.5 L186.0 619.4 L188.0 614.9 L190.0 610.5 L192.0 606.0 L194.0 601.5 L196.0 596.6 L198.0 591.2 L200.0 586.0 L202.0 581.5 L204.0 577.6 L206.0 575.0 L208.0 573.3 L210.0 571.6 L212.0 569.2 L214.0 567.7 L216.0 567.7 L218.0 567.4 L220.0 566.9 L222.0 566.9 L224.0 567.7 L226.0 569.0 L228.0 570.6 L230.0 572.2 L232.0 573.6 L234.0 575.6 L236.0 579.0 L238.0 582.5 L240.0 586.0 L242.0 589.5 L244.0 592.8 L246.0 595.7 L248.0 598.5 L250.0 601.3 L252.0 603.9 L254.0 606.4 L256.0 609.0 L258.0 611.6 L260.0 613.8 L262.0 616.1 L264.0 618.4 L266.0 620.9 L268.0 623.4 L270.0 626.0 L272.0 628.5 L274.0 631.2 L276.0 635.0 L278.0 639.7 L280.0 644.2 L282.0 648.4 L284.0 652.7 L286.0 657.1 L288.0 661.7 L290.0 666.2 L292.0 670.6 L294.0 675.0 L296.0 679.6 L298.0 683.8 L300.0 686.9 L302.0 689.9 L304.0 693.6 L306.0 698.0 L308.0 702.3 L310.0 706.0 L312.0 708.8 L314.0 710.4 L316.0 711.6 L318.0 714.3 L320.0 720.3 L322.0 724.7 L324.0 727.1 L326.0 729.2 L328.0 732.4 L330.0 735.8 L332.0 738.4 L334.0 740.3 L336.0 741.8 L338.0 742.6 L340.0 742.6 L342.0 742.3 L344.0 741.7 L346.0 740.5 L348.0 738.7 L350.0 737.0 L352.0 735.9 L354.0 735.8 L356.0 736.1 L358.0 737.0 L360.0 738.4 L362.0 739.5 L364.0 740.5 L366.0 741.8 L368.0 743.1 L370.0 744.3 L372.0 745.6 L374.0 746.8 L376.0 748.4 L378.0 750.3 L380.0 751.9 L382.0 753.6 L384.0 755.5 L386.0 757.5 L388.0 759.7 L390.0 761.9 L392.0 763.9 L394.0 765.7 L396.0 767.4 L398.0 769.2 L400.0 770.4 L402.0 771.5 L404.0 773.0 L406.0 774.7 L408.0 776.3 L410.0 777.8 L412.0 779.4 L414.0 781.2 L416.0 782.9 L418.0 784.7 L420.0 786.6 L422.0 788.7 L424.0 791.5 L426.0 796.0 L428.0 801.2 L430.0 805.8 L432.0 808.5 L434.0 810.7 L436.0 813.5 L438.0 816.5 L440.0 819.0 L442.0 820.7 L444.0 822.1 L446.0 822.9 L448.0 823.3 L450.0 823.6 L452.0 823.8 L454.0 824.1 L456.0 824.7 L458.0 825.3 L460.0 826.0 L462.0 827.1 L464.0 827.8 L466.0 828.5 L468.0 829.3 L470.0 830.5 L472.0 832.1 L474.0 833.3 L476.0 834.1 L478.0 834.6 L480.0 834.9 L482.0 835.0 L484.0 834.7 L486.0 834.4 L488.0 834.4 L490.0 834.4 L492.0 834.3 L494.0 834.2 L496.0 834.1 L498.0 833.7 L500.0 832.5 L502.0 830.6 L504.0 828.8 L506.0 827.3 L508.0 825.7 L510.0 824.1 L512.0 822.2 L514.0 820.1 L516.0 817.8 L518.0 815.5 L520.0 813.4 L522.0 811.4 L524.0 809.4 L526.0 807.4 L528.0 805.4 L530.0 803.4 L532.0 801.8 L534.0 800.4 L536.0 798.5 L538.0 795.9 L540.0 792.6 L542.0 789.0 L544.0 785.5 L546.0 782.4 L548.0 780.1 L550.0 778.3 L552.0 776.8 L554.0 775.7 L556.0 775.1 L558.0 775.0 L560.0 775.0 L562.0 775.3 L564.0 775.7 L566.0 776.1 L568.0 777.0 L570.0 778.5 L572.0 779.8 L574.0 780.8 L576.0 782.1 L578.0 783.6 L580.0 785.4 L582.0 787.2 L584.0 789.0 L586.0 790.7 L588.0 792.5 L590.0 794.1 L592.0 795.5 L594.0 796.7 L596.0 798.0 L598.0 799.1 L600.0 800.0 L602.0 801.1 L604.0 802.3 L606.0 803.7 L608.0 805.0 L610.0 806.3 L612.0 807.4 L614.0 808.2 L616.0 808.9 L618.0 809.8 L620.0 811.4 L622.0 813.5 L624.0 815.6 L626.0 817.4 L628.0 819.0 L630.0 820.8 L632.0 822.9 L634.0 825.1 L636.0 827.2 L638.0 828.9 L640.0 830.4 L642.0 831.9 L644.0 833.2 L646.0 834.4 L648.0 835.4 L650.0 836.2 L652.0 836.9 L654.0 837.6 L656.0 838.4 L658.0 839.2 L660.0 839.5 L662.0 839.7 L664.0 840.1 L666.0 840.0 L668.0 839.7 L670.0 839.7 L672.0 839.8 L674.0 839.2 L676.0 838.3 L678.0 837.2 L680.0 835.9 L682.0 834.7 L684.0 833.7 L686.0 832.8 L688.0 831.9 L690.0 830.4 L692.0 828.6 L694.0 826.6 L696.0 824.4 L698.0 822.1 L700.0 819.5 L702.0 816.7 L704.0 814.0 L706.0 811.2 L708.0 808.4 L710.0 805.8 L712.0 802.8 L714.0 799.5 L716.0 796.5 L718.0 793.8 L720.0 791.4 L722.0 789.5 L724.0 787.9 L726.0 786.5 L728.0 785.5 L730.0 784.8 L732.0 784.1 L734.0 783.5 L736.0 782.9 L738.0 782.2 L740.0 781.6 L742.0 780.2 L744.0 778.1 L746.0 776.1 L748.0 775.1 L750.0 774.5 L752.0 774.1 L754.0 773.8 L756.0 773.3 L758.0 772.4 L760.0 771.5 L762.0 770.8 L764.0 770.0 L766.0 769.4 L768.0 769.0 L770.0 769.0 L772.0 769.1 L774.0 769.1 L776.0 768.9 L778.0 768.7 L780.0 768.7 L782.0 768.7 L784.0 768.9 L786.0 769.0 L788.0 768.8 L790.0 768.6 L792.0 768.3 L794.0 768.0 L796.0 767.8 L798.0 767.6 L800.0 767.4 L802.0 767.2 L804.0 767.0 L806.0 766.5 L808.0 765.8 L810.0 765.0 L812.0 764.2 L814.0 763.4 L816.0 762.5 L818.0 761.5 L820.0 760.6 L822.0 759.9 L824.0 759.2 L826.0 758.8 L828.0 758.6 L830.0 758.6 L832.0 758.8 L834.0 758.9 L836.0 758.9 L838.0 758.9 L840.0 758.9 L842.0 759.0 L844.0 759.0 L846.0 759.2 L848.0 759.4 L850.0 759.6 L852.0 759.9 L854.0 760.3 L856.0 760.7 L858.0 761.1 L860.0 761.3 L862.0 761.4 L864.0 761.3 L866.0 761.2 L868.0 761.0 L870.0 760.8 L872.0 760.2 L874.0 759.5 L876.0 758.9 L878.0 758.6 L880.0 758.6 L882.0 758.8 L884.0 759.0 L886.0 759.1 L888.0 759.0 L890.0 758.7 L892.0 758.4 L894.0 758.0 L896.0 757.6 L898.0 757.3 L900.0 757.0 L902.0 756.7 L904.0 756.6 L906.0 756.5 L908.0 756.4 L910.0 756.4 L912.0 756.4 L914.0 756.4 L916.0 756.4 L918.0 756.4 L920.0 756.5 L922.0 756.7 L924.0 756.8 L926.0 757.1 L928.0 757.3 L930.0 757.6 L932.0 757.9 L934.0 758.2 L936.0 758.6 L938.0 759.0 L940.0 759.4 L942.0 759.7 L944.0 760.0 L946.0 760.1 L948.0 760.2 L950.0 760.1 L952.0 759.9 L954.0 759.6 L956.0 759.2 L958.0 758.8 L960.0 758.2 L962.0 757.1 L964.0 755.7 L966.0 754.2 L968.0 752.6 L970.0 751.2 L972.0 750.6 L974.0 750.2 L976.0 750.1 L978.0 750.2 L980.0 750.4 L982.0 750.5 L984.0 750.6 L986.0 750.7 L988.0 750.6 L990.0 750.3 L992.0 749.8 L994.0 749.2 L996.0 748.4 L998.0 747.5 L1000.0 746.3 L1002.0 744.4 L1004.0 741.8 L1006.0 739.1 L1008.0 736.5 L1010.0 734.3 L1012.0 732.6 L1014.0 730.9 L1016.0 729.0 L1018.0 726.7 L1020.0 724.4 L1022.0 722.5 L1024.0 721.0 L1026.0 719.7 L1028.0 718.8 L1030.0 718.1 L1032.0 717.5 L1034.0 716.7 L1036.0 715.5 L1038.0 714.2 L1040.0 713.0 L1042.0 712.1 L1044.0 711.3 L1046.0 710.5 L1048.0 709.9 L1050.0 709.5 L1052.0 709.2 L1054.0 709.1 L1056.0 709.0 L1058.0 708.9 L1060.0 708.7 L1062.0 708.3 L1064.0 707.7 L1066.0 707.0 L1068.0 706.2 L1070.0 705.6 L1072.0 705.5 L1074.0 705.4 L1076.0 705.4 L1078.0 705.6 L1080.0 705.9 L1082.0 706.3 L1084.0 706.7 L1086.0 707.1 L1088.0 707.5 L1090.0 708.0 L1092.0 708.5 L1094.0 708.9 L1096.0 709.4 L1098.0 709.8 L1100.0 710.0 L1102.0 710.2 L1104.0 710.2 L1106.0 709.8 L1108.0 709.1 L1110.0 708.1 L1112.0 707.2 L1114.0 706.3 L1116.0 705.4 L1118.0 704.6 L1120.0 703.8 L1122.0 703.0 L1124.0 702.2 L1126.0 701.5 L1128.0 701.0 L1130.0 700.6 L1132.0 700.1 L1134.0 699.6 L1136.0 698.9 L1138.0 698.1 L1140.0 697.4 L1142.0 696.6 L1144.0 695.7 L1146.0 694.9 L1148.0 693.9 L1150.0 692.5 L1152.0 690.9 L1154.0 689.4 L1156.0 687.8 L1158.0 685.9 L1160.0 683.6 L1162.0 681.1 L1164.0 678.1 L1166.0 674.7 L1168.0 671.0 L1170.0 667.3 L1172.0 663.6 L1174.0 659.8 L1176.0 656.4 L1178.0 653.4 L1180.0 650.5 L1182.0 647.5 L1184.0 644.4 L1186.0 641.5 L1188.0 638.5 L1190.0 635.4 L1192.0 632.1 L1194.0 628.6 L1196.0 624.8 L1198.0 620.6 L1200.0 615.8 L1202.0 610.8 L1204.0 605.9 L1206.0 601.3 L1208.0 597.0 L1210.0 592.8 L1212.0 589.2 L1214.0 585.9 L1216.0 582.6 L1218.0 580.5 L1220.0 580.4 L1222.0 580.7 L1224.0 579.6 L1226.0 577.1 L1228.0 574.3 L1230.0 571.6 L1232.0 568.7 L1234.0 565.7 L1236.0 562.6 L1238.0 559.7 L1240.0 557.5 L1242.0 555.7 L1244.0 554.6 L1246.0 553.8 L1248.0 553.2 L1250.0 552.6 L1252.0 552.0 L1254.0 551.5 L1256.0 551.1 L1258.0 550.9 L1260.0 550.8 L1262.0 550.7 L1264.0 550.5 L1266.0 550.2 L1268.0 549.9 L1270.0 549.6 L1272.0 549.3 L1274.0 548.8 L1276.0 548.3 L1278.0 547.7 L1280.0 547.2 L1282.0 546.6 L1284.0 546.1 L1286.0 545.7 L1288.0 545.3 L1290.0 545.0 L1292.0 544.7 L1294.0 544.4 L1296.0 544.2 L1298.0 543.9 L1300.0 543.7 L1302.0 543.4 L1304.0 543.1 L1306.0 542.8 L1308.0 542.6 L1310.0 542.3 L1312.0 542.1 L1314.0 541.9 L1316.0 541.8 L1318.0 542.3 L1320.0 542.9 L1322.0 542.9 L1324.0 542.7 L1326.0 542.5 L1328.0 542.3 L1330.0 542.1 L1332.0 542.0 L1334.0 542.3 L1336.0 542.8 L1338.0 543.6 L1340.0 544.4 L1342.0 545.1 L1344.0 545.7 L1346.0 546.1 L1348.0 546.6 L1350.0 547.0 L1352.0 547.3 L1354.0 547.7 L1356.0 548.0 L1358.0 548.2 L1360.0 548.5 L1362.0 548.7 L1364.0 548.9 L1366.0 549.0 L1368.0 549.2 L1370.0 549.3 L1372.0 549.4 L1374.0 549.5 L1376.0 549.7 L1378.0 549.9 L1380.0 550.2 L1382.0 550.4 L1384.0 550.7 L1386.0 550.9 L1388.0 551.3 L1390.0 551.8 L1392.0 552.4 L1394.0 553.0 L1396.0 553.8 L1398.0 554.8 L1400.0 556.1 L1402.0 557.4 L1404.0 558.5 L1406.0 559.5 L1408.0 560.5 L1410.0 561.5 L1412.0 562.4 L1414.0 563.3 L1416.0 564.2 L1418.0 565.0 L1420.0 565.8 L1422.0 566.7 L1424.0 567.6 L1426.0 568.4 L1428.0 569.0 L1430.0 569.7 L1432.0 570.1 L1434.0 570.4 L1436.0 570.5 L1438.0 570.4 L1440.0 570.4 L1442.0 570.3 L1444.0 570.1 L1446.0 570.0 L1448.0 569.8 L1450.0 569.6 L1452.0 569.3 L1454.0 568.9 L1456.0 568.5 L1458.0 568.1 L1460.0 567.6 L1462.0 567.0 L1464.0 566.3 L1466.0 565.6 L1468.0 565.1 L1470.0 564.6 L1472.0 564.2 L1474.0 563.8 L1476.0 563.3 L1478.0 562.9 L1480.0 562.4 L1482.0 562.0 L1484.0 561.8 L1486.0 561.7 L1488.0 561.8 L1490.0 562.0 L1492.0 562.3 L1494.0 562.7 L1496.0 563.2 L1498.0 563.6 L1500.0 564.0 L1502.0 564.2 L1504.0 564.4 L1506.0 564.6 L1508.0 564.7 L1510.0 564.9 L1512.0 565.0 L1514.0 565.2 L1516.0 565.4 L1518.0 565.6 L1520.0 565.8 L1522.0 566.1 L1524.0 566.6 L1526.0 567.0 L1528.0 567.5 L1530.0 567.9 L1532.0 568.2 L1534.0 568.4 L1536.0 568.7 L1538.0 568.9 L1540.0 569.1 L1542.0 569.2 L1544.0 569.0 L1546.0 568.5 L1548.0 568.0 L1550.0 567.8 L1552.0 568.0 L1554.0 568.3 L1556.0 568.7 L1558.0 569.1 L1560.0 569.5 L1562.0 570.0 L1564.0 570.5 L1566.0 571.1 L1568.0 571.7 L1570.0 572.4 L1572.0 573.2 L1574.0 574.3 L1576.0 575.4 L1578.0 576.4 L1580.0 577.4 L1582.0 578.5 L1584.0 579.5 L1586.0 580.1 L1588.0 580.3 L1590.0 580.6 L1592.0 581.0 L1594.0 581.5 L1596.0 582.1 L1598.0 582.7 L1600.0 583.5 L1602.0 584.3 L1604.0 584.9 L1606.0 585.4 L1608.0 585.6 L1610.0 585.8 L1612.0 585.9 L1614.0 586.0 L1616.0 586.0 L1618.0 585.9 L1620.0 585.7 L1622.0 585.3 L1624.0 584.9 L1626.0 584.4 L1628.0 583.9 L1630.0 583.3 L1632.0 582.8 L1634.0 582.0 L1636.0 581.1 L1638.0 580.3 L1640.0 579.6 L1642.0 579.4 L1644.0 579.9 L1646.0 580.8 L1648.0 581.9 L1650.0 583.1 L1652.0 584.6 L1654.0 586.4 L1656.0 588.9 L1658.0 591.3 L1660.0 593.1 L1662.0 594.8 L1664.0 596.3 L1666.0 597.6 L1668.0 598.6 L1670.0 599.7 L1672.0 600.8 L1674.0 601.6 L1676.0 602.1 L1678.0 602.4 L1680.0 602.8 L1682.0 603.4 L1684.0 604.1 L1686.0 604.8 L1688.0 605.6 L1690.0 606.5 L1692.0 607.5 L1694.0 608.5 L1696.0 609.4 L1698.0 610.2 L1700.0 611.2 L1702.0 612.4 L1704.0 613.6 L1706.0 614.9 L1708.0 616.2 L1710.0 617.4 L1712.0 618.6 L1714.0 619.9 L1716.0 621.3 L1718.0 623.0 L1720.0 624.5 L1722.0 626.0 L1724.0 627.6 L1726.0 629.1 L1728.0 630.5 L1730.0 632.0 L1732.0 633.4 L1734.0 634.8 L1736.0 636.1 L1738.0 637.4 L1740.0 638.8 L1742.0 640.4 L1744.0 642.0 L1746.0 643.5 L1748.0 644.9 L1750.0 646.2 L1752.0 647.4 L1754.0 648.6 L1756.0 649.6 L1758.0 650.4 L1760.0 651.1 L1762.0 651.4 L1764.0 651.8 L1766.0 652.5 L1768.0 653.5 L1770.0 654.7 L1772.0 656.1 L1774.0 657.7 L1776.0 659.8 L1778.0 661.9" stroke="#ecb850" stroke-width="1.2" fill="none" stroke-linejoin="round"/>
<path d="M68 699.6H1779" stroke="#f3ecd2" stroke-width="1.2" fill="none"/>
<g fill="#c8ecf0"><circle cx="96.3" cy="833.0" r="0.95"/><circle cx="101.0" cy="833.0" r="0.95"/><circle cx="105.8" cy="831.5" r="0.95"/><circle cx="110.6" cy="827.4" r="0.95"/><circle cx="115.4" cy="820.2" r="0.95"/><circle cx="120.1" cy="810.9" r="0.95"/><circle cx="124.9" cy="781.3" r="0.95"/><circle cx="129.7" cy="744.2" r="0.95"/><circle cx="134.4" cy="705.6" r="0.95"/><circle cx="139.2" cy="672.4" r="0.95"/><circle cx="144.0" cy="643.9" r="0.95"/><circle cx="148.8" cy="619.3" r="0.95"/><circle cx="153.5" cy="598.2" r="0.95"/><circle cx="158.3" cy="580.1" r="0.95"/><circle cx="163.1" cy="574.0" r="0.95"/><circle cx="167.9" cy="574.0" r="0.95"/><circle cx="172.6" cy="559.2" r="0.95"/><circle cx="177.4" cy="546.6" r="0.95"/><circle cx="182.2" cy="535.6" r="0.95"/><circle cx="187.0" cy="526.3" r="0.95"/><circle cx="191.7" cy="518.2" r="0.95"/><circle cx="253.8" cy="830.0" r="0.95"/><circle cx="258.5" cy="827.2" r="0.95"/><circle cx="263.3" cy="820.6" r="0.95"/><circle cx="268.1" cy="810.5" r="0.95"/><circle cx="272.9" cy="801.0" r="0.95"/><circle cx="277.6" cy="792.2" r="0.95"/><circle cx="282.4" cy="783.8" r="0.95"/><circle cx="287.2" cy="776.0" r="0.95"/><circle cx="292.0" cy="768.6" r="0.95"/><circle cx="296.7" cy="765.0" r="0.95"/><circle cx="449.5" cy="923.0" r="0.95"/><circle cx="454.2" cy="921.3" r="0.95"/><circle cx="459.0" cy="917.1" r="0.95"/><circle cx="463.8" cy="910.3" r="0.95"/><circle cx="468.6" cy="900.4" r="0.95"/><circle cx="473.3" cy="891.3" r="0.95"/><circle cx="478.1" cy="882.9" r="0.95"/><circle cx="482.9" cy="875.1" r="0.95"/><circle cx="487.7" cy="865.5" r="0.95"/><circle cx="492.4" cy="853.3" r="0.95"/><circle cx="497.2" cy="837.8" r="0.95"/><circle cx="502.0" cy="820.2" r="0.95"/><circle cx="506.7" cy="800.5" r="0.95"/><circle cx="511.5" cy="784.3" r="0.95"/><circle cx="540.2" cy="781.3" r="0.95"/><circle cx="544.9" cy="780.0" r="0.95"/><circle cx="549.7" cy="778.7" r="0.95"/><circle cx="607.0" cy="942.7" r="0.95"/><circle cx="611.7" cy="940.5" r="0.95"/><circle cx="616.5" cy="936.1" r="0.95"/><circle cx="621.3" cy="928.7" r="0.95"/><circle cx="626.1" cy="919.1" r="0.95"/><circle cx="630.8" cy="904.8" r="0.95"/><circle cx="635.6" cy="892.0" r="0.95"/><circle cx="640.4" cy="880.4" r="0.95"/><circle cx="645.2" cy="870.0" r="0.95"/><circle cx="649.9" cy="860.6" r="0.95"/><circle cx="654.7" cy="852.2" r="0.95"/><circle cx="659.5" cy="844.6" r="0.95"/><circle cx="664.3" cy="837.8" r="0.95"/><circle cx="669.0" cy="828.8" r="0.95"/><circle cx="673.8" cy="820.8" r="0.95"/><circle cx="678.6" cy="813.8" r="0.95"/><circle cx="683.3" cy="807.7" r="0.95"/><circle cx="688.1" cy="802.3" r="0.95"/><circle cx="692.9" cy="797.5" r="0.95"/><circle cx="697.7" cy="793.4" r="0.95"/><circle cx="702.4" cy="791.2" r="0.95"/><circle cx="707.2" cy="788.7" r="0.95"/><circle cx="712.0" cy="784.2" r="0.95"/><circle cx="716.8" cy="779.4" r="0.95"/><circle cx="721.5" cy="772.8" r="0.95"/><circle cx="726.3" cy="764.1" r="0.95"/><circle cx="797.9" cy="804.9" r="0.95"/><circle cx="802.7" cy="804.0" r="0.95"/><circle cx="807.4" cy="801.7" r="0.95"/><circle cx="812.2" cy="797.5" r="0.95"/><circle cx="817.0" cy="793.5" r="0.95"/><circle cx="821.8" cy="789.8" r="0.95"/><circle cx="826.5" cy="786.3" r="0.95"/><circle cx="831.3" cy="783.0" r="0.95"/><circle cx="836.1" cy="778.2" r="0.95"/><circle cx="840.9" cy="773.7" r="0.95"/><circle cx="845.6" cy="769.6" r="0.95"/><circle cx="850.4" cy="765.8" r="0.95"/><circle cx="855.2" cy="762.4" r="0.95"/><circle cx="926.8" cy="800.6" r="0.95"/><circle cx="931.5" cy="799.3" r="0.95"/><circle cx="936.3" cy="796.1" r="0.95"/><circle cx="941.1" cy="793.0" r="0.95"/><circle cx="945.9" cy="790.0" r="0.95"/><circle cx="950.6" cy="787.2" r="0.95"/><circle cx="974.5" cy="793.7" r="0.95"/><circle cx="979.3" cy="791.7" r="0.95"/><circle cx="984.0" cy="787.7" r="0.95"/><circle cx="988.8" cy="783.8" r="0.95"/><circle cx="993.6" cy="780.2" r="0.95"/><circle cx="998.4" cy="776.6" r="0.95"/><circle cx="1003.1" cy="773.2" r="0.95"/><circle cx="1007.9" cy="770.0" r="0.95"/><circle cx="1012.7" cy="766.9" r="0.95"/><circle cx="1017.5" cy="760.5" r="0.95"/><circle cx="1022.2" cy="754.5" r="0.95"/><circle cx="1027.0" cy="746.4" r="0.95"/><circle cx="1031.8" cy="735.0" r="0.95"/><circle cx="1036.5" cy="724.7" r="0.95"/><circle cx="1041.3" cy="715.5" r="0.95"/><circle cx="1108.1" cy="741.7" r="0.95"/><circle cx="1112.9" cy="740.9" r="0.95"/><circle cx="1117.7" cy="738.7" r="0.95"/><circle cx="1122.5" cy="734.5" r="0.95"/><circle cx="1127.2" cy="728.4" r="0.95"/><circle cx="1132.0" cy="718.6" r="0.95"/><circle cx="1136.8" cy="709.9" r="0.95"/><circle cx="1141.6" cy="698.8" r="0.95"/><circle cx="1146.3" cy="683.8" r="0.95"/><circle cx="1151.1" cy="667.2" r="0.95"/><circle cx="1155.9" cy="648.7" r="0.95"/><circle cx="1160.6" cy="633.5" r="0.95"/><circle cx="1165.4" cy="616.1" r="0.95"/><circle cx="1170.2" cy="600.0" r="0.95"/><circle cx="1175.0" cy="585.6" r="0.95"/><circle cx="1179.7" cy="574.2" r="0.95"/><circle cx="1184.5" cy="565.0" r="0.95"/><circle cx="1189.3" cy="557.3" r="0.95"/><circle cx="1194.1" cy="551.3" r="0.95"/><circle cx="1203.6" cy="550.5" r="0.95"/><circle cx="1208.4" cy="555.5" r="0.95"/><circle cx="1213.1" cy="555.5" r="0.95"/><circle cx="1217.9" cy="554.0" r="0.95"/><circle cx="1270.4" cy="579.1" r="0.95"/><circle cx="1275.2" cy="578.2" r="0.95"/><circle cx="1280.0" cy="576.1" r="0.95"/><circle cx="1284.7" cy="572.8" r="0.95"/><circle cx="1289.5" cy="568.5" r="0.95"/><circle cx="1294.3" cy="563.2" r="0.95"/><circle cx="1299.1" cy="558.5" r="0.95"/><circle cx="1303.8" cy="554.2" r="0.95"/><circle cx="1308.6" cy="550.4" r="0.95"/><circle cx="1313.4" cy="546.9" r="0.95"/><circle cx="1318.2" cy="543.8" r="0.95"/><circle cx="1380.2" cy="587.8" r="0.95"/><circle cx="1385.0" cy="587.1" r="0.95"/><circle cx="1389.7" cy="585.1" r="0.95"/><circle cx="1394.5" cy="582.0" r="0.95"/><circle cx="1399.3" cy="579.0" r="0.95"/><circle cx="1404.1" cy="577.8" r="0.95"/><circle cx="1408.8" cy="577.8" r="0.95"/><circle cx="1413.6" cy="575.3" r="0.95"/><circle cx="1437.5" cy="604.4" r="0.95"/><circle cx="1442.3" cy="604.4" r="0.95"/><circle cx="1447.0" cy="603.1" r="0.95"/><circle cx="1451.8" cy="601.9" r="0.95"/><circle cx="1456.6" cy="600.7" r="0.95"/><circle cx="1461.3" cy="599.5" r="0.95"/><circle cx="1466.1" cy="598.4" r="0.95"/><circle cx="1470.9" cy="596.0" r="0.95"/><circle cx="1475.7" cy="592.4" r="0.95"/><circle cx="1480.4" cy="587.8" r="0.95"/><circle cx="1485.2" cy="583.6" r="0.95"/><circle cx="1490.0" cy="579.7" r="0.95"/><circle cx="1494.8" cy="576.1" r="0.95"/><circle cx="1575.9" cy="612.6" r="0.95"/><circle cx="1595.0" cy="620.8" r="0.95"/><circle cx="1599.8" cy="619.7" r="0.95"/><circle cx="1604.5" cy="618.6" r="0.95"/><circle cx="1609.3" cy="617.5" r="0.95"/><circle cx="1614.1" cy="616.5" r="0.95"/><circle cx="1618.9" cy="615.5" r="0.95"/><circle cx="1623.6" cy="614.5" r="0.95"/><circle cx="1628.4" cy="613.5" r="0.95"/><circle cx="1633.2" cy="611.5" r="0.95"/><circle cx="1637.9" cy="609.5" r="0.95"/><circle cx="1642.7" cy="607.6" r="0.95"/><circle cx="1743.0" cy="687.8" r="0.95"/><circle cx="1747.7" cy="687.8" r="0.95"/><circle cx="1752.5" cy="687.2" r="0.95"/><circle cx="1757.3" cy="686.6" r="0.95"/><circle cx="1762.0" cy="686.0" r="0.95"/><circle cx="1766.8" cy="685.4" r="0.95"/><circle cx="1771.6" cy="684.8" r="0.95"/></g><g fill="#e8a060"><circle cx="81.9" cy="789.0" r="0.95"/><circle cx="86.7" cy="789.8" r="0.95"/><circle cx="91.5" cy="792.0" r="0.95"/><circle cx="196.5" cy="468.6" r="0.95"/><circle cx="201.3" cy="472.1" r="0.95"/><circle cx="206.0" cy="475.5" r="0.95"/><circle cx="210.8" cy="482.3" r="0.95"/><circle cx="215.6" cy="492.2" r="0.95"/><circle cx="220.4" cy="507.3" r="0.95"/><circle cx="225.1" cy="528.0" r="0.95"/><circle cx="229.9" cy="556.5" r="0.95"/><circle cx="234.7" cy="590.1" r="0.95"/><circle cx="239.5" cy="628.5" r="0.95"/><circle cx="244.2" cy="660.7" r="0.95"/><circle cx="249.0" cy="687.8" r="0.95"/><circle cx="301.5" cy="653.0" r="0.95"/><circle cx="306.3" cy="655.4" r="0.95"/><circle cx="311.0" cy="657.7" r="0.95"/><circle cx="315.8" cy="660.0" r="0.95"/><circle cx="320.6" cy="662.2" r="0.95"/><circle cx="325.4" cy="664.4" r="0.95"/><circle cx="330.1" cy="666.6" r="0.95"/><circle cx="334.9" cy="673.0" r="0.95"/><circle cx="339.7" cy="679.1" r="0.95"/><circle cx="344.5" cy="685.0" r="0.95"/><circle cx="349.2" cy="690.6" r="0.95"/><circle cx="354.0" cy="696.0" r="0.95"/><circle cx="358.8" cy="701.2" r="0.95"/><circle cx="363.6" cy="706.2" r="0.95"/><circle cx="368.3" cy="711.0" r="0.95"/><circle cx="373.1" cy="715.6" r="0.95"/><circle cx="377.9" cy="720.0" r="0.95"/><circle cx="382.6" cy="724.3" r="0.95"/><circle cx="387.4" cy="728.3" r="0.95"/><circle cx="392.2" cy="732.2" r="0.95"/><circle cx="397.0" cy="736.0" r="0.95"/><circle cx="401.7" cy="742.1" r="0.95"/><circle cx="406.5" cy="751.9" r="0.95"/><circle cx="411.3" cy="761.0" r="0.95"/><circle cx="416.1" cy="769.3" r="0.95"/><circle cx="420.8" cy="779.7" r="0.95"/><circle cx="425.6" cy="793.6" r="0.95"/><circle cx="430.4" cy="811.1" r="0.95"/><circle cx="435.1" cy="829.0" r="0.95"/><circle cx="439.9" cy="844.1" r="0.95"/><circle cx="444.7" cy="856.7" r="0.95"/><circle cx="516.3" cy="710.5" r="0.95"/><circle cx="521.1" cy="711.9" r="0.95"/><circle cx="525.8" cy="713.3" r="0.95"/><circle cx="530.6" cy="714.7" r="0.95"/><circle cx="535.4" cy="716.0" r="0.95"/><circle cx="554.5" cy="716.2" r="0.95"/><circle cx="559.2" cy="718.1" r="0.95"/><circle cx="564.0" cy="722.2" r="0.95"/><circle cx="568.8" cy="729.4" r="0.95"/><circle cx="573.6" cy="739.8" r="0.95"/><circle cx="578.3" cy="755.8" r="0.95"/><circle cx="583.1" cy="773.5" r="0.95"/><circle cx="587.9" cy="793.0" r="0.95"/><circle cx="592.7" cy="816.9" r="0.95"/><circle cx="597.4" cy="837.1" r="0.95"/><circle cx="602.2" cy="854.0" r="0.95"/><circle cx="731.1" cy="729.1" r="0.95"/><circle cx="735.8" cy="729.9" r="0.95"/><circle cx="740.6" cy="730.6" r="0.95"/><circle cx="745.4" cy="731.3" r="0.95"/><circle cx="750.2" cy="732.0" r="0.95"/><circle cx="754.9" cy="733.7" r="0.95"/><circle cx="759.7" cy="737.3" r="0.95"/><circle cx="764.5" cy="742.7" r="0.95"/><circle cx="769.3" cy="747.7" r="0.95"/><circle cx="774.0" cy="752.3" r="0.95"/><circle cx="778.8" cy="756.5" r="0.95"/><circle cx="783.6" cy="760.4" r="0.95"/><circle cx="788.3" cy="763.9" r="0.95"/><circle cx="793.1" cy="763.9" r="0.95"/><circle cx="859.9" cy="722.4" r="0.95"/><circle cx="864.7" cy="723.8" r="0.95"/><circle cx="869.5" cy="725.1" r="0.95"/><circle cx="874.3" cy="726.4" r="0.95"/><circle cx="879.0" cy="727.7" r="0.95"/><circle cx="883.8" cy="729.0" r="0.95"/><circle cx="888.6" cy="730.2" r="0.95"/><circle cx="893.4" cy="733.0" r="0.95"/><circle cx="898.1" cy="735.7" r="0.95"/><circle cx="902.9" cy="738.3" r="0.95"/><circle cx="907.7" cy="740.8" r="0.95"/><circle cx="912.4" cy="743.2" r="0.95"/><circle cx="917.2" cy="745.5" r="0.95"/><circle cx="922.0" cy="747.7" r="0.95"/><circle cx="955.4" cy="718.7" r="0.95"/><circle cx="960.2" cy="720.2" r="0.95"/><circle cx="965.0" cy="721.7" r="0.95"/><circle cx="969.7" cy="723.1" r="0.95"/><circle cx="1046.1" cy="632.3" r="0.95"/><circle cx="1050.9" cy="633.8" r="0.95"/><circle cx="1055.6" cy="637.3" r="0.95"/><circle cx="1060.4" cy="643.2" r="0.95"/><circle cx="1065.2" cy="650.8" r="0.95"/><circle cx="1070.0" cy="657.8" r="0.95"/><circle cx="1074.7" cy="664.2" r="0.95"/><circle cx="1079.5" cy="671.8" r="0.95"/><circle cx="1084.3" cy="678.7" r="0.95"/><circle cx="1089.0" cy="686.2" r="0.95"/><circle cx="1093.8" cy="692.9" r="0.95"/><circle cx="1098.6" cy="698.8" r="0.95"/><circle cx="1103.4" cy="703.9" r="0.95"/><circle cx="1198.8" cy="526.9" r="0.95"/><circle cx="1222.7" cy="518.2" r="0.95"/><circle cx="1227.5" cy="519.0" r="0.95"/><circle cx="1232.2" cy="521.0" r="0.95"/><circle cx="1237.0" cy="524.5" r="0.95"/><circle cx="1241.8" cy="527.8" r="0.95"/><circle cx="1246.6" cy="530.8" r="0.95"/><circle cx="1251.3" cy="533.7" r="0.95"/><circle cx="1256.1" cy="536.4" r="0.95"/><circle cx="1260.9" cy="539.0" r="0.95"/><circle cx="1265.7" cy="541.4" r="0.95"/><circle cx="1322.9" cy="515.7" r="0.95"/><circle cx="1327.7" cy="516.6" r="0.95"/><circle cx="1332.5" cy="517.5" r="0.95"/><circle cx="1337.2" cy="519.5" r="0.95"/><circle cx="1342.0" cy="522.9" r="0.95"/><circle cx="1346.8" cy="527.7" r="0.95"/><circle cx="1351.6" cy="533.4" r="0.95"/><circle cx="1356.3" cy="538.4" r="0.95"/><circle cx="1361.1" cy="544.2" r="0.95"/><circle cx="1365.9" cy="549.3" r="0.95"/><circle cx="1370.7" cy="554.7" r="0.95"/><circle cx="1375.4" cy="559.3" r="0.95"/><circle cx="1418.4" cy="533.1" r="0.95"/><circle cx="1423.2" cy="534.0" r="0.95"/><circle cx="1427.9" cy="536.7" r="0.95"/><circle cx="1432.7" cy="539.3" r="0.95"/><circle cx="1499.5" cy="534.9" r="0.95"/><circle cx="1504.3" cy="535.7" r="0.95"/><circle cx="1509.1" cy="538.1" r="0.95"/><circle cx="1513.8" cy="540.3" r="0.95"/><circle cx="1518.6" cy="542.5" r="0.95"/><circle cx="1523.4" cy="545.7" r="0.95"/><circle cx="1528.2" cy="548.8" r="0.95"/><circle cx="1532.9" cy="551.7" r="0.95"/><circle cx="1537.7" cy="554.4" r="0.95"/><circle cx="1542.5" cy="557.0" r="0.95"/><circle cx="1547.3" cy="559.4" r="0.95"/><circle cx="1552.0" cy="561.6" r="0.95"/><circle cx="1556.8" cy="563.7" r="0.95"/><circle cx="1561.6" cy="565.7" r="0.95"/><circle cx="1566.3" cy="569.5" r="0.95"/><circle cx="1571.1" cy="572.9" r="0.95"/><circle cx="1580.7" cy="567.1" r="0.95"/><circle cx="1585.4" cy="567.1" r="0.95"/><circle cx="1590.2" cy="568.2" r="0.95"/><circle cx="1647.5" cy="562.9" r="0.95"/><circle cx="1652.3" cy="563.8" r="0.95"/><circle cx="1657.0" cy="566.2" r="0.95"/><circle cx="1661.8" cy="572.3" r="0.95"/><circle cx="1666.6" cy="580.8" r="0.95"/><circle cx="1671.4" cy="590.8" r="0.95"/><circle cx="1676.1" cy="599.8" r="0.95"/><circle cx="1680.9" cy="607.9" r="0.95"/><circle cx="1685.7" cy="610.8" r="0.95"/><circle cx="1690.4" cy="610.8" r="0.95"/><circle cx="1695.2" cy="617.8" r="0.95"/><circle cx="1700.0" cy="624.2" r="0.95"/><circle cx="1704.8" cy="629.8" r="0.95"/><circle cx="1709.5" cy="634.9" r="0.95"/><circle cx="1714.3" cy="639.5" r="0.95"/><circle cx="1719.1" cy="643.7" r="0.95"/><circle cx="1723.9" cy="647.4" r="0.95"/><circle cx="1728.6" cy="650.7" r="0.95"/><circle cx="1733.4" cy="654.8" r="0.95"/><circle cx="1738.2" cy="658.4" r="0.95"/><circle cx="1776.4" cy="656.5" r="0.95"/></g>
<path d="M72.4 800.5 L74.4 799.6 L76.4 798.7 L78.4 798.6 L80.4 799.3 L82.4 800.9 L84.4 803.1 L86.4 805.6 L88.4 808.0 L90.4 809.7 L92.4 810.1 L94.4 809.2 L96.4 807.7 L98.4 805.9 L100.4 803.4 L102.4 799.1 L104.4 793.0 L106.4 785.3 L108.4 776.2 L110.4 766.6 L112.4 756.6 L114.4 744.9 L116.4 728.9 L118.4 708.7 L120.4 687.0 L122.4 665.7 L124.4 645.4 L126.4 626.9 L128.4 610.2 L130.4 595.7 L132.4 582.6 L134.4 569.1 L136.4 554.2 L138.4 541.1 L140.4 534.9 L142.4 535.4 L144.4 538.1 L146.4 540.9 L148.4 543.5 L150.4 545.9 L152.4 547.5 L154.4 546.6 L156.4 543.4 L158.4 539.4 L160.4 535.9 L162.4 532.1 L164.4 527.3 L166.4 521.6 L168.4 515.6 L170.4 509.8 L172.4 503.9 L174.4 497.8 L176.4 492.1 L178.4 487.8 L180.4 485.1 L182.4 483.7 L184.4 483.6 L186.4 484.5 L188.4 486.3 L190.4 488.8 L192.4 491.9 L194.4 495.7 L196.4 500.2 L198.4 505.6 L200.4 512.6 L202.4 522.4 L204.4 534.8 L206.4 548.2 L208.4 561.9 L210.4 575.7 L212.4 589.6 L214.4 603.7 L216.4 618.3 L218.4 633.6 L220.4 649.6 L222.4 666.4 L224.4 683.0 L226.4 698.0 L228.4 711.6 L230.4 724.9 L232.4 738.2 L234.4 750.1 L236.4 758.9 L238.4 764.9 L240.4 768.3 L242.4 769.5 L244.4 768.4 L246.4 764.8 L248.4 759.2 L250.4 751.9 L252.4 743.1 L254.4 732.8 L256.4 721.5 L258.4 711.2 L260.4 703.9 L262.4 699.0 L264.4 696.1 L266.4 694.7 L268.4 694.1 L270.4 694.1 L272.4 695.0 L274.4 697.2 L276.4 700.8 L278.4 706.1 L280.4 712.8 L282.4 719.8 L284.4 726.2 L286.4 731.7 L288.4 736.0 L290.4 739.6 L292.4 743.4 L294.4 747.7 L296.4 751.2 L298.4 753.0 L300.4 753.2 L302.4 752.6 L304.4 751.3 L306.4 749.0 L308.4 745.4 L310.4 741.0 L312.4 736.4 L314.4 731.8 L316.4 727.6 L318.4 724.2 L320.4 722.5 L322.4 723.4 L324.4 726.3 L326.4 730.9 L328.4 736.8 L330.4 743.4 L332.4 750.5 L334.4 757.9 L336.4 765.3 L338.4 772.0 L340.4 776.8 L342.4 779.4 L344.4 779.6 L346.4 777.4 L348.4 773.4 L350.4 768.1 L352.4 762.4 L354.4 758.3 L356.4 756.4 L358.4 755.7 L360.4 755.4 L362.4 755.5 L364.4 756.8 L366.4 759.6 L368.4 763.3 L370.4 767.6 L372.4 772.2 L374.4 776.9 L376.4 781.4 L378.4 784.8 L380.4 786.9 L382.4 788.7 L384.4 791.3 L386.4 794.5 L388.4 797.9 L390.4 801.5 L392.4 805.6 L394.4 810.4 L396.4 815.7 L398.4 821.2 L400.4 826.5 L402.4 830.9 L404.4 834.5 L406.4 837.7 L408.4 841.1 L410.4 844.8 L412.4 848.6 L414.4 852.6 L416.4 856.9 L418.4 861.4 L420.4 866.1 L422.4 870.7 L424.4 875.2 L426.4 879.3 L428.4 883.1 L430.4 886.0 L432.4 887.9 L434.4 889.2 L436.4 890.2 L438.4 890.7 L440.4 890.0 L442.4 887.6 L444.4 883.6 L446.4 878.3 L448.4 872.0 L450.4 865.7 L452.4 859.5 L454.4 853.6 L456.4 847.8 L458.4 842.1 L460.4 836.6 L462.4 831.3 L464.4 826.7 L466.4 822.9 L468.4 819.8 L470.4 817.3 L472.4 815.3 L474.4 813.7 L476.4 812.5 L478.4 811.1 L480.4 809.2 L482.4 806.6 L484.4 802.9 L486.4 798.3 L488.4 793.0 L490.4 787.2 L492.4 781.1 L494.4 775.0 L496.4 768.6 L498.4 761.6 L500.4 754.5 L502.4 748.4 L504.4 744.0 L506.4 741.0 L508.4 739.3 L510.4 738.7 L512.4 739.4 L514.4 741.3 L516.4 743.1 L518.4 744.5 L520.4 745.8 L522.4 747.6 L524.4 749.6 L526.4 750.8 L528.4 750.7 L530.4 749.6 L532.4 747.6 L534.4 745.0 L536.4 742.3 L538.4 739.5 L540.4 737.2 L542.4 735.5 L544.4 735.0 L546.4 736.2 L548.4 739.0 L550.4 743.3 L552.4 749.0 L554.4 755.8 L556.4 763.5 L558.4 771.8 L560.4 780.4 L562.4 789.2 L564.4 798.5 L566.4 808.5 L568.4 818.9 L570.4 829.1 L572.4 839.1 L574.4 848.4 L576.4 857.1 L578.4 865.2 L580.4 873.1 L582.4 880.7 L584.4 888.1 L586.4 895.3 L588.4 902.0 L590.4 907.7 L592.4 911.5 L594.4 912.4 L596.4 911.0 L598.4 908.2 L600.4 904.4 L602.4 899.5 L604.4 893.7 L606.4 887.3 L608.4 880.7 L610.4 873.8 L612.4 865.9 L614.4 857.2 L616.4 848.8 L618.4 841.7 L620.4 835.8 L622.4 830.7 L624.4 826.4 L626.4 823.5 L628.4 822.4 L630.4 822.2 L632.4 822.1 L634.4 821.9 L636.4 821.9 L638.4 821.9 L640.4 821.9 L642.4 821.9 L644.4 822.0 L646.4 822.3 L648.4 822.5 L650.4 821.9 L652.4 819.9 L654.4 816.6 L656.4 811.9 L658.4 806.7 L660.4 801.9 L662.4 798.0 L664.4 794.8 L666.4 792.2 L668.4 790.0 L670.4 787.9 L672.4 785.8 L674.4 783.6 L676.4 781.4 L678.4 779.6 L680.4 778.8 L682.4 778.6 L684.4 778.8 L686.4 778.9 L688.4 779.0 L690.4 778.8 L692.4 778.5 L694.4 778.3 L696.4 778.2 L698.4 778.2 L700.4 778.3 L702.4 778.0 L704.4 776.8 L706.4 775.2 L708.4 773.7 L710.4 772.3 L712.4 770.5 L714.4 768.1 L716.4 765.1 L718.4 761.9 L720.4 758.8 L722.4 756.1 L724.4 754.2 L726.4 753.0 L728.4 752.3 L730.4 751.9 L732.4 751.3 L734.4 750.8 L736.4 750.5 L738.4 750.7 L740.4 751.4 L742.4 752.6 L744.4 754.1 L746.4 755.6 L748.4 757.2 L750.4 759.3 L752.4 762.0 L754.4 765.2 L756.4 768.4 L758.4 771.5 L760.4 774.1 L762.4 776.0 L764.4 777.3 L766.4 778.0 L768.4 778.2 L770.4 778.3 L772.4 778.2 L774.4 777.4 L776.4 775.7 L778.4 773.7 L780.4 771.8 L782.4 770.6 L784.4 770.6 L786.4 771.9 L788.4 773.4 L790.4 774.2 L792.4 774.4 L794.4 774.1 L796.4 773.6 L798.4 773.1 L800.4 772.8 L802.4 772.1 L804.4 770.4 L806.4 767.7 L808.4 764.4 L810.4 760.8 L812.4 757.5 L814.4 754.9 L816.4 752.8 L818.4 750.9 L820.4 748.9 L822.4 746.7 L824.4 744.3 L826.4 742.0 L828.4 740.3 L830.4 739.1 L832.4 738.2 L834.4 737.7 L836.4 737.5 L838.4 737.9 L840.4 738.3 L842.4 738.5 L844.4 738.6 L846.4 739.2 L848.4 740.5 L850.4 742.2 L852.4 744.3 L854.4 746.8 L856.4 749.9 L858.4 753.3 L860.4 756.1 L862.4 758.1 L864.4 759.8 L866.4 762.0 L868.4 764.5 L870.4 766.7 L872.4 768.2 L874.4 769.2 L876.4 769.6 L878.4 769.4 L880.4 768.4 L882.4 767.2 L884.4 766.9 L886.4 768.0 L888.4 769.6 L890.4 771.0 L892.4 772.0 L894.4 772.6 L896.4 773.0 L898.4 773.6 L900.4 774.8 L902.4 776.0 L904.4 776.8 L906.4 776.9 L908.4 776.1 L910.4 774.5 L912.4 772.5 L914.4 770.6 L916.4 768.8 L918.4 767.1 L920.4 765.1 L922.4 762.9 L924.4 760.2 L926.4 757.2 L928.4 754.3 L930.4 751.4 L932.4 749.0 L934.4 747.0 L936.4 745.0 L938.4 743.1 L940.4 741.4 L942.4 740.6 L944.4 740.9 L946.4 742.5 L948.4 745.3 L950.4 748.6 L952.4 751.7 L954.4 754.1 L956.4 755.4 L958.4 755.6 L960.4 755.4 L962.4 754.9 L964.4 754.3 L966.4 753.1 L968.4 751.0 L970.4 747.1 L972.4 741.2 L974.4 734.8 L976.4 728.9 L978.4 723.9 L980.4 720.1 L982.4 717.3 L984.4 715.4 L986.4 714.2 L988.4 713.2 L990.4 711.7 L992.4 710.3 L994.4 709.8 L996.4 710.4 L998.4 711.2 L1000.4 711.6 L1002.4 711.7 L1004.4 712.0 L1006.4 711.9 L1008.4 710.0 L1010.4 705.8 L1012.4 700.8 L1014.4 696.4 L1016.4 692.5 L1018.4 688.4 L1020.4 683.9 L1022.4 679.6 L1024.4 675.4 L1026.4 671.3 L1028.4 666.9 L1030.4 662.9 L1032.4 660.5 L1034.4 660.3 L1036.4 661.2 L1038.4 662.7 L1040.4 664.8 L1042.4 668.0 L1044.4 672.4 L1046.4 677.5 L1048.4 682.9 L1050.4 688.7 L1052.4 694.7 L1054.4 700.7 L1056.4 706.1 L1058.4 710.8 L1060.4 715.0 L1062.4 718.8 L1064.4 722.1 L1066.4 724.8 L1068.4 726.9 L1070.4 728.8 L1072.4 730.4 L1074.4 731.6 L1076.4 732.0 L1078.4 732.0 L1080.4 732.2 L1082.4 732.9 L1084.4 733.9 L1086.4 734.8 L1088.4 735.5 L1090.4 735.9 L1092.4 735.9 L1094.4 735.8 L1096.4 735.6 L1098.4 735.5 L1100.4 735.3 L1102.4 734.8 L1104.4 733.2 L1106.4 730.5 L1108.4 726.9 L1110.4 722.8 L1112.4 718.3 L1114.4 713.3 L1116.4 707.9 L1118.4 701.9 L1120.4 695.4 L1122.4 688.2 L1124.4 680.5 L1126.4 673.0 L1128.4 666.7 L1130.4 661.6 L1132.4 656.7 L1134.4 651.6 L1136.4 646.0 L1138.4 639.9 L1140.4 633.5 L1142.4 627.2 L1144.4 621.1 L1146.4 615.3 L1148.4 609.8 L1150.4 604.5 L1152.4 598.8 L1154.4 592.9 L1156.4 586.7 L1158.4 580.6 L1160.4 575.0 L1162.4 570.2 L1164.4 566.1 L1166.4 561.9 L1168.4 557.7 L1170.4 553.7 L1172.4 550.1 L1174.4 546.9 L1176.4 543.9 L1178.4 541.3 L1180.4 539.6 L1182.4 538.8 L1184.4 538.6 L1186.4 538.7 L1188.4 539.2 L1190.4 540.0 L1192.4 541.1 L1194.4 542.2 L1196.4 543.0 L1198.4 543.3 L1200.4 542.8 L1202.4 541.9 L1204.4 540.8 L1206.4 540.0 L1208.4 539.3 L1210.4 538.9 L1212.4 538.6 L1214.4 538.2 L1216.4 537.8 L1218.4 538.1 L1220.4 539.2 L1222.4 541.1 L1224.4 543.9 L1226.4 547.3 L1228.4 550.9 L1230.4 554.1 L1232.4 556.5 L1234.4 557.6 L1236.4 558.1 L1238.4 558.5 L1240.4 559.3 L1242.4 560.4 L1244.4 561.8 L1246.4 562.9 L1248.4 563.3 L1250.4 562.8 L1252.4 561.6 L1254.4 559.9 L1256.4 558.7 L1258.4 558.2 L1260.4 558.2 L1262.4 558.0 L1264.4 557.5 L1266.4 556.1 L1268.4 553.8 L1270.4 551.0 L1272.4 547.9 L1274.4 544.8 L1276.4 542.4 L1278.4 540.5 L1280.4 538.5 L1282.4 536.1 L1284.4 533.6 L1286.4 531.1 L1288.4 528.6 L1290.4 526.2 L1292.4 524.2 L1294.4 522.9 L1296.4 522.9 L1298.4 523.3 L1300.4 523.5 L1302.4 523.4 L1304.4 523.4 L1306.4 523.9 L1308.4 524.8 L1310.4 526.2 L1312.4 527.9 L1314.4 529.6 L1316.4 531.3 L1318.4 533.0 L1320.4 534.9 L1322.4 536.9 L1324.4 539.0 L1326.4 541.4 L1328.4 544.1 L1330.4 547.4 L1332.4 550.8 L1334.4 554.1 L1336.4 557.5 L1338.4 561.0 L1340.4 564.6 L1342.4 567.7 L1344.4 570.3 L1346.4 572.6 L1348.4 575.1 L1350.4 577.5 L1352.4 579.6 L1354.4 581.1 L1356.4 581.9 L1358.4 581.9 L1360.4 581.6 L1362.4 581.5 L1364.4 581.4 L1366.4 580.9 L1368.4 579.6 L1370.4 577.8 L1372.4 576.0 L1374.4 574.1 L1376.4 572.0 L1378.4 569.6 L1380.4 567.0 L1382.4 564.4 L1384.4 561.8 L1386.4 559.3 L1388.4 557.2 L1390.4 556.4 L1392.4 556.7 L1394.4 557.6 L1396.4 558.4 L1398.4 559.0 L1400.4 559.8 L1402.4 560.8 L1404.4 562.3 L1406.4 564.4 L1408.4 566.4 L1410.4 568.0 L1412.4 568.8 L1414.4 568.9 L1416.4 568.4 L1418.4 568.4 L1420.4 569.8 L1422.4 572.0 L1424.4 573.9 L1426.4 575.6 L1428.4 577.6 L1430.4 580.0 L1432.4 581.4 L1434.4 581.1 L1436.4 579.4 L1438.4 577.7 L1440.4 576.2 L1442.4 574.2 L1444.4 571.2 L1446.4 568.0 L1448.4 565.5 L1450.4 563.3 L1452.4 560.6 L1454.4 557.2 L1456.4 554.5 L1458.4 553.6 L1460.4 553.9 L1462.4 554.3 L1464.4 554.3 L1466.4 553.7 L1468.4 552.6 L1470.4 551.0 L1472.4 549.4 L1474.4 547.9 L1476.4 547.3 L1478.4 547.7 L1480.4 548.4 L1482.4 549.3 L1484.4 550.1 L1486.4 551.1 L1488.4 552.3 L1490.4 554.1 L1492.4 556.7 L1494.4 559.5 L1496.4 562.1 L1498.4 564.5 L1500.4 567.1 L1502.4 569.7 L1504.4 572.1 L1506.4 574.2 L1508.4 576.0 L1510.4 577.8 L1512.4 579.6 L1514.4 581.3 L1516.4 582.9 L1518.4 584.2 L1520.4 585.2 L1522.4 585.7 L1524.4 585.1 L1526.4 583.7 L1528.4 582.5 L1530.4 582.3 L1532.4 582.6 L1534.4 583.1 L1536.4 583.5 L1538.4 583.4 L1540.4 582.8 L1542.4 582.1 L1544.4 581.8 L1546.4 582.0 L1548.4 582.7 L1550.4 583.7 L1552.4 584.4 L1554.4 584.6 L1556.4 584.9 L1558.4 585.6 L1560.4 586.8 L1562.4 588.0 L1564.4 588.9 L1566.4 589.3 L1568.4 589.1 L1570.4 588.6 L1572.4 588.0 L1574.4 587.9 L1576.4 588.7 L1578.4 590.6 L1580.4 592.3 L1582.4 592.5 L1584.4 591.7 L1586.4 590.8 L1588.4 590.2 L1590.4 590.0 L1592.4 590.3 L1594.4 590.8 L1596.4 591.3 L1598.4 591.4 L1600.4 590.7 L1602.4 589.0 L1604.4 587.0 L1606.4 585.3 L1608.4 584.2 L1610.4 583.6 L1612.4 583.5 L1614.4 583.7 L1616.4 583.8 L1618.4 583.9 L1620.4 583.8 L1622.4 583.3 L1624.4 582.2 L1626.4 580.7 L1628.4 579.4 L1630.4 578.9 L1632.4 578.9 L1634.4 578.8 L1636.4 578.8 L1638.4 579.3 L1640.4 580.6 L1642.4 582.4 L1644.4 584.5 L1646.4 587.0 L1648.4 590.4 L1650.4 594.9 L1652.4 600.5 L1654.4 607.2 L1656.4 614.6 L1658.4 622.5 L1660.4 630.2 L1662.4 637.2 L1664.4 643.1 L1666.4 647.9 L1668.4 651.7 L1670.4 654.5 L1672.4 656.3 L1674.4 657.1 L1676.4 656.1 L1678.4 653.0 L1680.4 649.0 L1682.4 645.2 L1684.4 641.7 L1686.4 638.6 L1688.4 635.9 L1690.4 634.0 L1692.4 633.1 L1694.4 633.0 L1696.4 633.5 L1698.4 634.7 L1700.4 636.9 L1702.4 640.4 L1704.4 644.2 L1706.4 647.5 L1708.4 650.3 L1710.4 652.6 L1712.4 654.6 L1714.4 656.7 L1716.4 658.9 L1718.4 661.3 L1720.4 663.8 L1722.4 666.2 L1724.4 668.3 L1726.4 669.8 L1728.4 671.1 L1730.4 672.2 L1732.4 673.2 L1734.4 674.0 L1736.4 674.5 L1738.4 674.9 L1740.4 675.0 L1742.4 674.7 L1744.4 673.9 L1746.4 672.7 L1748.4 671.2 L1750.4 669.6 L1752.4 667.9 L1754.4 666.3 L1756.4 664.9 L1758.4 663.9 L1760.4 663.3 L1762.4 662.8 L1764.4 662.3 L1766.4 661.9 L1768.4 661.8 L1770.4 662.2 L1772.4 663.6 L1774.4 665.7" stroke="#a4e476" stroke-width="1.1" fill="none"/>
<path d="M77.2 794.2V802.5 M96.3 749.5V831.5 M101.0 776.0V782.6 M105.8 729.6V767.0 M110.6 707.0V737.0 M120.1 515.0V720.0 M139.2 510.8V571.6 M148.8 551.7V578.0 M153.5 561.0V563.0 M158.3 502.0V574.0 M163.1 476.0V507.0 M196.5 530.0V642.4 M239.5 752.0V823.0 M244.2 724.0V746.0 M249.0 703.5V726.0 M253.8 692.0V707.0 M258.5 660.0V698.0 M272.9 705.0V718.0 M292.0 748.0V759.0 M301.5 731.5V772.0 M311.0 711.0V731.5 M315.8 690.5V705.0 M334.9 800.0V815.0 M339.7 780.0V810.0 M344.5 744.5V776.0 M349.2 720.0V737.0 M363.6 774.0V802.0 M373.1 775.0V797.0 M406.5 843.6V861.0 M430.4 889.0V923.0 M435.1 871.0V889.0 M444.7 857.0V885.6 M449.5 839.6V858.3 M454.2 816.0V839.6 M459.0 803.6V816.0 M468.6 816.0V824.7 M478.1 804.9V813.6 M482.9 778.8V811.1 M487.7 763.9V773.8 M492.4 742.8V760.2 M497.2 727.9V746.5 M502.0 710.5V742.8 M521.1 751.5V780.0 M525.8 742.8V758.9 M530.6 729.1V742.8 M535.4 721.7V739.1 M544.9 734.1V746.5 M592.7 901.7V934.0 M597.4 878.1V930.2 M602.2 855.8V875.6 M607.0 834.7V863.2 M616.5 813.6V848.3 M621.3 808.6V816.0 M626.1 776.3V807.4 M640.4 814.8V847.1 M645.2 807.4V813.6 M654.7 804.9V808.1 M659.5 778.8V796.2 M664.3 762.7V783.8 M678.6 775.1V791.2 M688.1 775.1V777.6 M692.9 776.3V791.2 M702.4 778.8V783.8 M707.2 756.4V777.6 M716.8 742.8V762.7 M731.1 754.0V766.4 M735.8 736.1V756.4 M740.6 747.8V762.7 M759.7 790.0V804.9 M764.5 768.9V781.3 M769.3 758.9V773.8 M778.8 766.4V770.1 M793.1 767.6V785.0 M807.4 731.6V756.4 M826.5 735.3V746.5 M831.3 722.4V734.1 M845.6 741.5V752.7 M855.2 749.0V755.2 M864.7 766.4V785.0 M874.3 770.1V777.6 M879.0 747.8V771.3 M898.1 770.1V791.2 M907.7 756.4V771.3 M912.4 765.1V766.4 M922.0 749.0V773.8 M926.8 735.3V749.0 M931.5 718.7V737.8 M941.1 742.8V746.5 M955.4 763.9V793.7 M960.2 740.3V772.6 M969.7 734.1V736.6 M974.5 692.4V729.1 M993.6 708.0V731.6 M998.4 709.3V725.4 M1003.1 699.3V709.3 M1012.7 660.8V708.0 M1022.2 653.4V660.8 M1027.0 632.3V657.1 M1060.4 725.6V738.0 M1065.2 726.8V736.7 M1079.5 730.5V740.5 M1084.3 736.7V741.7 M1093.8 733.0V739.2 M1103.4 730.5V734.3 M1108.1 699.5V731.8 M1112.9 685.8V698.3 M1117.7 669.7V684.6 M1122.5 657.3V666.0 M1127.2 631.2V659.8 M1136.8 617.6V638.7 M1141.6 591.5V628.7 M1146.3 580.3V595.2 M1151.1 564.2V581.5 M1155.9 574.1V580.3 M1160.6 546.8V572.9 M1170.2 528.2V549.3 M1175.0 530.6V546.8 M1198.8 539.3V550.5 M1203.6 521.9V555.5 M1217.9 540.6V546.8 M1237.0 548.0V574.1 M1251.3 565.4V577.8 M1256.1 549.3V571.6 M1260.9 550.5V556.7 M1265.7 545.5V553.0 M1275.2 524.4V546.8 M1284.7 519.5V528.2 M1289.5 515.7V520.7 M1294.3 518.2V521.9 M1303.8 525.7V536.8 M1318.2 536.8V540.6 M1327.7 551.7V556.7 M1361.1 567.9V586.5 M1370.7 561.7V587.8 M1375.4 562.9V565.4 M1380.2 556.7V566.6 M1385.0 535.6V561.7 M1399.3 569.1V577.8 M1418.4 561.7V579.1 M1427.9 584.0V597.7 M1437.5 541.8V601.4 M1456.6 549.3V567.9 M1461.3 553.0V556.7 M1466.1 539.3V553.0 M1470.9 535.6V549.3 M1499.5 571.6V579.1 M1509.1 582.8V594.0 M1523.4 582.8V590.2 M1528.2 567.9V589.0 M1542.5 577.8V592.0 M1566.3 589.0V605.1 M1571.1 574.1V590.2 M1585.4 592.7V617.6 M1590.2 582.0V586.5 M1599.8 577.8V590.2 M1609.3 576.6V589.0 M1623.6 580.3V584.0 M1628.4 562.9V580.3 M1666.6 656.0V680.9 M1671.4 641.1V664.7 M1676.1 634.9V648.6 M1680.9 610.8V636.2 M1690.4 637.4V642.4 M1714.3 659.8V675.9 M1733.4 681.4V683.4 M1738.2 666.5V687.8 M1747.7 661.0V668.0" stroke="#f08080" stroke-width="1.2" fill="none"/>
<path d="M74.7 794.2h4.9v8.3h-4.9z M93.8 782.0h4.9v49.5h-4.9z M98.6 776.0h4.9v4.0h-4.9z M103.4 729.6h4.9v37.4h-4.9z M108.1 707.0h4.9v30.0h-4.9z M117.7 515.0h4.9v205.0h-4.9z M136.8 510.8h4.9v60.8h-4.9z M146.3 551.7h4.9v18.3h-4.9z M151.1 561.0h4.9v2.0h-4.9z M155.9 512.0h4.9v56.0h-4.9z M160.6 476.0h4.9v31.0h-4.9z M194.0 531.9h4.9v23.6h-4.9z M237.0 752.0h4.9v60.0h-4.9z M241.8 724.0h4.9v22.0h-4.9z M246.6 703.5h4.9v22.5h-4.9z M251.3 692.0h4.9v15.0h-4.9z M256.1 666.0h4.9v32.0h-4.9z M270.4 705.0h4.9v13.0h-4.9z M289.5 748.0h4.9v11.0h-4.9z M299.1 731.5h4.9v40.5h-4.9z M308.6 711.0h4.9v20.5h-4.9z M313.4 690.5h4.9v14.5h-4.9z M332.5 800.0h4.9v15.0h-4.9z M337.2 780.0h4.9v30.0h-4.9z M342.0 744.5h4.9v31.5h-4.9z M346.8 720.0h4.9v17.0h-4.9z M361.1 774.0h4.9v28.0h-4.9z M370.6 775.0h4.9v14.0h-4.9z M404.1 843.6h4.9v17.4h-4.9z M427.9 889.0h4.9v30.6h-4.9z M432.7 871.0h4.9v18.0h-4.9z M442.2 857.0h4.9v28.6h-4.9z M447.0 839.6h4.9v18.6h-4.9z M451.8 816.0h4.9v23.6h-4.9z M456.6 803.6h4.9v12.4h-4.9z M466.1 816.0h4.9v8.7h-4.9z M475.7 804.9h4.9v8.7h-4.9z M480.4 778.8h4.9v32.3h-4.9z M485.2 763.9h4.9v9.9h-4.9z M490.0 742.8h4.9v17.4h-4.9z M494.7 742.8h4.9v3.7h-4.9z M499.5 710.5h4.9v32.3h-4.9z M518.6 751.5h4.9v28.6h-4.9z M523.4 742.8h4.9v16.1h-4.9z M528.2 729.1h4.9v13.7h-4.9z M532.9 721.7h4.9v17.4h-4.9z M542.5 734.1h4.9v12.4h-4.9z M590.2 928.5h4.9v1.2h-4.9z M595.0 878.1h4.9v52.1h-4.9z M599.8 855.8h4.9v19.9h-4.9z M604.5 834.7h4.9v28.6h-4.9z M614.1 813.6h4.9v34.8h-4.9z M618.8 808.6h4.9v7.4h-4.9z M623.6 801.1h4.9v6.2h-4.9z M637.9 814.8h4.9v32.3h-4.9z M642.7 807.4h4.9v6.2h-4.9z M652.3 804.9h4.9v3.2h-4.9z M657.0 778.8h4.9v17.4h-4.9z M661.8 771.3h4.9v12.4h-4.9z M676.1 775.1h4.9v16.1h-4.9z M685.7 775.1h4.9v2.5h-4.9z M690.4 776.3h4.9v2.5h-4.9z M700.0 778.8h4.9v5.0h-4.9z M704.8 756.4h4.9v21.1h-4.9z M714.3 742.8h4.9v19.9h-4.9z M728.6 754.0h4.9v12.4h-4.9z M733.4 751.5h4.9v5.0h-4.9z M738.2 747.8h4.9v14.9h-4.9z M757.3 790.0h4.9v5.0h-4.9z M762.0 768.9h4.9v12.4h-4.9z M766.8 763.9h4.9v9.9h-4.9z M776.4 766.4h4.9v3.7h-4.9z M790.7 767.6h4.9v17.4h-4.9z M805.0 736.6h4.9v19.9h-4.9z M824.1 735.3h4.9v11.2h-4.9z M828.9 722.4h4.9v11.7h-4.9z M843.2 741.5h4.9v11.2h-4.9z M852.7 749.0h4.9v6.2h-4.9z M862.3 766.4h4.9v18.6h-4.9z M871.8 770.1h4.9v7.4h-4.9z M876.6 751.5h4.9v19.9h-4.9z M895.7 770.1h4.9v21.1h-4.9z M905.2 765.1h4.9v6.2h-4.9z M910.0 765.1h4.9v1.2h-4.9z M919.5 749.0h4.9v24.8h-4.9z M924.3 735.3h4.9v13.7h-4.9z M929.1 729.1h4.9v8.7h-4.9z M938.6 742.8h4.9v3.7h-4.9z M953.0 763.9h4.9v29.8h-4.9z M957.7 740.3h4.9v32.3h-4.9z M967.3 734.1h4.9v2.5h-4.9z M972.0 692.4h4.9v36.8h-4.9z M991.1 708.0h4.9v23.6h-4.9z M995.9 709.3h4.9v16.1h-4.9z M1000.7 699.3h4.9v9.9h-4.9z M1010.2 660.8h4.9v47.2h-4.9z M1019.8 653.4h4.9v7.4h-4.9z M1024.5 653.4h4.9v3.7h-4.9z M1058.0 725.6h4.9v12.4h-4.9z M1062.7 726.8h4.9v9.9h-4.9z M1077.1 730.5h4.9v9.9h-4.9z M1081.8 736.7h4.9v5.0h-4.9z M1091.4 733.0h4.9v6.2h-4.9z M1100.9 730.5h4.9v3.7h-4.9z M1105.7 699.5h4.9v32.3h-4.9z M1110.5 685.8h4.9v12.4h-4.9z M1115.2 669.7h4.9v14.9h-4.9z M1120.0 657.3h4.9v8.7h-4.9z M1124.8 631.2h4.9v28.6h-4.9z M1134.3 622.5h4.9v16.1h-4.9z M1139.1 591.5h4.9v37.2h-4.9z M1143.9 584.0h4.9v11.2h-4.9z M1148.6 570.4h4.9v11.2h-4.9z M1153.4 574.1h4.9v6.2h-4.9z M1158.2 546.8h4.9v26.1h-4.9z M1167.7 531.9h4.9v17.4h-4.9z M1172.5 530.6h4.9v16.1h-4.9z M1196.4 539.3h4.9v11.2h-4.9z M1201.2 525.7h4.9v18.6h-4.9z M1215.5 540.6h4.9v6.2h-4.9z M1234.6 548.0h4.9v26.1h-4.9z M1248.9 565.4h4.9v12.4h-4.9z M1253.7 549.3h4.9v22.3h-4.9z M1258.4 550.5h4.9v6.2h-4.9z M1263.2 545.5h4.9v7.4h-4.9z M1272.7 524.4h4.9v22.3h-4.9z M1282.3 519.5h4.9v8.7h-4.9z M1287.1 515.7h4.9v5.0h-4.9z M1291.8 518.2h4.9v3.7h-4.9z M1301.4 525.7h4.9v11.2h-4.9z M1315.7 536.8h4.9v3.7h-4.9z M1325.2 551.7h4.9v5.0h-4.9z M1358.7 567.9h4.9v18.6h-4.9z M1368.2 561.7h4.9v26.1h-4.9z M1373.0 562.9h4.9v2.5h-4.9z M1377.8 556.7h4.9v9.9h-4.9z M1382.5 535.6h4.9v26.1h-4.9z M1396.8 569.1h4.9v8.7h-4.9z M1415.9 561.7h4.9v8.7h-4.9z M1425.5 584.0h4.9v13.7h-4.9z M1435.0 541.8h4.9v59.6h-4.9z M1454.1 549.3h4.9v18.6h-4.9z M1458.9 553.0h4.9v3.7h-4.9z M1463.7 549.3h4.9v3.7h-4.9z M1468.4 535.6h4.9v13.7h-4.9z M1497.1 571.6h4.9v7.4h-4.9z M1506.6 582.8h4.9v11.2h-4.9z M1520.9 582.8h4.9v7.4h-4.9z M1525.7 567.9h4.9v21.1h-4.9z M1540.0 577.8h4.9v14.2h-4.9z M1563.9 589.0h4.9v16.1h-4.9z M1568.7 574.1h4.9v16.1h-4.9z M1583.0 592.7h4.9v24.8h-4.9z M1587.8 582.0h4.9v4.5h-4.9z M1597.3 584.0h4.9v6.2h-4.9z M1606.9 576.6h4.9v12.4h-4.9z M1621.2 580.3h4.9v3.7h-4.9z M1625.9 567.9h4.9v12.4h-4.9z M1664.1 669.7h4.9v6.2h-4.9z M1668.9 641.1h4.9v23.6h-4.9z M1673.7 634.9h4.9v13.7h-4.9z M1678.5 613.8h4.9v22.3h-4.9z M1688.0 637.4h4.9v5.0h-4.9z M1711.9 659.8h4.9v8.7h-4.9z M1731.0 681.4h4.9v2.0h-4.9z M1735.7 666.5h4.9v13.2h-4.9z M1745.3 661.0h4.9v7.0h-4.9z" fill="#f08080"/>
<path d="M72.4 789.0V794.0M72.4 801.0V801.0 M81.9 792.6V796.0M81.9 804.0V809.0 M86.7 805.0V805.0M86.7 825.7V825.7 M91.5 802.5V807.5M91.5 833.0V833.0 M115.4 703.5V703.5M115.4 720.0V720.0 M124.9 472.0V472.0M124.9 522.0V547.0 M129.7 468.6V511.0M129.7 529.0V537.0 M134.4 504.6V527.0M134.4 569.0V569.0 M144.0 509.5V520.7M144.0 559.0V559.0 M166.3 484.2h3.2 M171.0 484.2h3.2 M175.8 484.2h3.2 M180.6 484.2h3.2 M185.4 484.2h3.2 M191.7 483.5V483.5M191.7 514.0V514.0 M201.3 492.1V536.8M201.3 553.0V555.5 M206.0 582.8V590.0M206.0 644.9V644.9 M210.8 642.0V642.0M210.8 648.6V648.6 M215.6 613.0V647.5M215.6 680.5V680.5 M220.4 679.0V679.0M220.4 714.7V714.7 M225.1 703.5V703.5M225.1 765.0V765.0 M229.9 767.0V767.0M229.9 796.7V796.7 M234.7 774.0V774.0M234.7 817.0V830.0 M263.3 653.0V653.0M263.3 694.0V694.0 M268.1 694.0V694.0M268.1 713.0V713.0 M277.6 714.7V714.7M277.6 733.0V733.0 M282.4 700.0V724.0M282.4 757.6V757.6 M287.2 755.7V755.7M287.2 765.0V765.0 M296.7 748.0V748.0M296.7 765.0V765.0 M306.3 733.0V733.0M306.3 742.7V742.7 M320.6 692.0V692.0M320.6 724.0V724.0 M325.4 724.0V724.0M325.4 767.0V767.0 M330.1 770.6V770.6M330.1 817.5V826.0 M354.0 713.0V724.0M354.0 737.0V737.0 M358.8 747.0V747.0M358.8 797.0V797.0 M368.3 767.0V767.0M368.3 785.5V785.5 M377.9 778.0V778.0M377.9 796.7V796.7 M382.6 786.5V786.5M382.6 809.0V809.0 M387.4 799.0V799.0M387.4 815.0V815.0 M392.2 814.0V814.0M392.2 826.0V826.0 M397.0 822.5V822.5M397.0 838.7V838.7 M401.7 838.7V838.7M401.7 864.7V864.7 M411.3 836.0V851.0M411.3 858.5V858.5 M416.1 858.5V858.5M416.1 873.4V873.4 M420.8 868.5V868.5M420.8 895.6V895.6 M425.6 900.0V900.0M425.6 919.0V919.0 M439.9 870.7V870.7M439.9 885.6V885.6 M463.8 786.2V802.4M463.8 819.8V819.8 M473.3 803.6V803.6M473.3 814.8V814.8 M506.7 716.7V716.7M506.7 737.8V737.8 M511.5 735.3V735.3M511.5 754.0V754.0 M516.3 755.2V755.2M516.3 773.8V781.3 M540.2 716.2V719.2M540.2 739.1V739.1 M549.7 744.0V744.0M549.7 777.6V777.6 M554.5 782.5V782.5M554.5 803.6V808.6 M559.2 813.1V813.1M559.2 822.2V822.2 M564.0 822.2V822.2M564.0 842.1V842.1 M568.8 842.1V842.1M568.8 859.5V859.5 M573.6 863.2V863.2M573.6 899.2V899.2 M578.3 899.2V899.2M578.3 903.4V903.4 M583.1 880.6V880.6M583.1 912.9V912.9 M587.9 906.6V906.6M587.9 930.2V942.7 M611.7 829.7V829.7M611.7 852.0V852.0 M630.8 808.6V811.1M630.8 835.9V835.9 M635.6 839.6V839.6M635.6 849.6V858.3 M649.9 805.6V805.6M649.9 809.8V809.8 M669.0 769.4V769.4M669.0 781.3V781.3 M673.8 781.3V781.3M673.8 786.2V801.1 M683.3 764.4V764.4M683.3 778.8V778.8 M697.7 776.8V776.8M697.7 785.0V788.7 M712.0 754.5V754.5M712.0 761.4V761.4 M721.5 729.1V740.3M721.5 742.8V742.8 M726.3 741.0V741.0M726.3 758.9V758.9 M745.4 751.5V751.5M745.4 762.7V762.7 M750.2 763.9V763.9M750.2 775.1V775.1 M754.9 777.6V777.6M754.9 793.7V793.7 M774.0 771.3V771.3M774.0 776.3V783.8 M783.6 763.9V763.9M783.6 768.9V768.9 M788.3 770.1V770.1M788.3 794.9V794.9 M797.9 760.2V760.2M797.9 766.4V766.4 M802.7 746.5V762.7M802.7 767.6V767.6 M812.2 739.1V739.1M812.2 746.5V746.5 M817.0 740.3V740.3M817.0 744.0V752.7 M821.8 739.1V739.1M821.8 744.0V752.0 M836.1 727.9V727.9M836.1 739.1V739.1 M840.9 740.3V740.3M840.9 752.7V752.7 M850.4 740.3V740.3M850.4 754.0V754.0 M859.9 749.0V749.0M859.9 786.2V790.7 M869.5 768.9V768.9M869.5 776.3V776.3 M883.8 756.4V756.4M883.8 761.4V761.4 M888.6 775.1V775.1M888.6 791.2V800.6 M893.4 778.8V778.8M893.4 790.0V790.0 M902.9 761.4V766.4M902.9 771.3V771.3 M917.2 766.4V766.4M917.2 768.9V785.0 M936.3 726.6V726.6M936.3 744.0V744.0 M945.9 746.5V749.0M945.9 751.5V758.9 M950.6 756.4V756.4M950.6 778.8V778.8 M965.0 726.6V736.1M965.0 737.8V737.8 M979.3 691.9V691.9M979.3 700.6V700.6 M984.0 699.3V699.3M984.0 709.3V716.7 M988.8 708.0V708.0M988.8 731.6V731.6 M1007.9 698.1V698.1M1007.9 718.7V718.7 M1017.5 662.1V662.1M1017.5 665.8V665.8 M1031.8 655.9V655.9M1031.8 659.6V659.6 M1036.5 655.9V655.9M1036.5 673.3V673.3 M1041.3 674.7V674.7M1041.3 684.6V684.6 M1046.1 687.1V687.1M1046.1 710.7V710.7 M1050.9 704.5V704.5M1050.9 720.6V720.6 M1055.6 719.4V719.4M1055.6 735.5V735.5 M1070.0 720.6V725.6M1070.0 734.3V734.3 M1074.7 734.3V734.3M1074.7 740.5V740.5 M1089.0 738.0V738.0M1089.0 738.7V738.7 M1098.6 733.0V733.0M1098.6 738.0V738.0 M1132.0 634.9V634.9M1132.0 646.1V646.1 M1165.4 535.6V540.6M1165.4 545.5V545.5 M1179.7 534.4V534.4M1179.7 540.6V550.5 M1184.5 526.9V535.6M1184.5 543.1V543.1 M1189.3 544.3V544.3M1189.3 549.3V549.3 M1194.1 544.3V544.3M1194.1 548.0V548.0 M1208.4 518.2V530.6M1208.4 533.1V533.1 M1213.1 533.1V533.1M1213.1 546.8V546.8 M1222.7 553.0V553.0M1222.7 556.7V556.7 M1227.5 556.7V556.7M1227.5 569.1V569.1 M1232.2 565.4V565.4M1232.2 575.3V579.1 M1241.8 546.3V546.3M1241.8 548.8V548.8 M1246.6 554.2V554.2M1246.6 577.8V577.8 M1270.4 538.1V540.6M1270.4 545.5V545.5 M1280.0 520.7V525.7M1280.0 530.6V530.6 M1299.1 519.5V519.5M1299.1 535.6V535.6 M1308.6 523.2V523.2M1308.6 526.9V526.9 M1313.4 525.7V525.7M1313.4 538.1V538.1 M1322.9 534.4V534.4M1322.9 559.2V559.2 M1332.5 553.0V553.0M1332.5 569.1V569.1 M1337.2 566.6V566.6M1337.2 576.6V576.6 M1342.0 574.1V574.1M1342.0 582.8V582.8 M1346.8 569.1V574.1M1346.8 584.0V584.0 M1351.6 579.1V579.1M1351.6 584.0V584.0 M1356.3 580.3V580.3M1356.3 586.5V586.5 M1365.9 567.9V567.9M1365.9 587.8V587.8 M1389.7 533.1V533.1M1389.7 558.0V558.0 M1394.5 558.0V558.0M1394.5 576.6V576.6 M1404.1 562.9V562.9M1404.1 567.9V575.3 M1408.8 556.7V561.7M1408.8 565.4V565.4 M1413.6 564.2V564.2M1413.6 570.4V570.4 M1423.2 594.0V594.0M1423.2 600.9V600.9 M1432.7 584.0V584.0M1432.7 601.4V604.4 M1442.3 544.3V544.3M1442.3 549.3V549.3 M1447.0 549.3V549.3M1447.0 554.2V554.2 M1451.8 556.7V556.7M1451.8 566.6V566.6 M1475.7 534.9V534.9M1475.7 544.3V544.3 M1480.4 541.3V541.3M1480.4 560.4V560.4 M1485.2 560.4V560.4M1485.2 562.2V562.2 M1490.0 559.2V559.2M1490.0 561.7V566.6 M1494.8 562.9V562.9M1494.8 572.9V572.9 M1504.3 570.4V570.4M1504.3 594.0V594.0 M1513.8 575.3V575.3M1513.8 584.0V584.0 M1518.6 585.3V585.3M1518.6 590.2V596.9 M1532.9 567.9V567.9M1532.9 588.5V588.5 M1537.7 588.5V588.5M1537.7 591.5V595.2 M1547.3 576.6V576.6M1547.3 582.8V582.8 M1552.0 581.5V581.5M1552.0 584.0V584.0 M1556.8 581.0V581.0M1556.8 585.3V585.3 M1561.6 584.0V584.0M1561.6 608.9V612.6 M1575.9 567.1V567.1M1575.9 577.8V577.8 M1580.7 574.1V574.1M1580.7 620.8V620.8 M1595.0 565.4V574.1M1595.0 581.5V581.5 M1604.5 586.5V586.5M1604.5 592.0V592.0 M1614.1 574.1V574.1M1614.1 584.0V584.0 M1618.9 571.1V571.1M1618.9 584.0V584.0 M1633.2 569.1V569.1M1633.2 579.1V579.1 M1637.9 570.4V570.4M1637.9 580.3V580.3 M1642.7 579.1V579.1M1642.7 605.1V605.1 M1647.5 602.7V602.7M1647.5 606.4V606.4 M1652.3 603.9V603.9M1652.3 623.8V623.8 M1657.0 623.8V623.8M1657.0 668.5V668.5 M1661.8 664.7V668.5M1661.8 678.4V678.4 M1685.7 622.5V622.5M1685.7 637.4V637.4 M1695.2 636.2V636.2M1695.2 639.9V642.4 M1700.0 638.7V638.7M1700.0 646.1V646.1 M1704.8 643.6V643.6M1704.8 667.2V667.2 M1709.5 665.5V665.5M1709.5 669.0V669.0 M1719.1 658.5V658.5M1719.1 668.5V668.5 M1723.9 668.0V668.0M1723.9 677.1V677.1 M1728.6 677.9V677.9M1728.6 682.1V684.6 M1743.0 656.5V666.5M1743.0 668.5V668.5 M1750.9 661.8h3.2 M1755.7 661.8h3.2 M1760.4 661.8h3.2 M1765.2 661.8h3.2 M1770.0 661.8h3.2" stroke="#8fd3f0" stroke-width="1.2" fill="none"/>
<path d="M70.6 794.0h3.6v7.0h-3.6z M80.1 796.0h3.6v8.0h-3.6z M84.9 805.0h3.6v20.7h-3.6z M89.7 807.5h3.6v25.5h-3.6z M113.6 703.5h3.6v16.5h-3.6z M123.1 472.0h3.6v50.0h-3.6z M127.9 511.0h3.6v18.0h-3.6z M132.6 527.0h3.6v42.0h-3.6z M142.2 520.7h3.6v38.3h-3.6z M189.9 483.5h3.6v30.5h-3.6z M199.5 536.8h3.6v16.2h-3.6z M204.2 590.0h3.6v54.9h-3.6z M209.0 642.0h3.6v6.6h-3.6z M213.8 647.5h3.6v33.0h-3.6z M218.6 679.0h3.6v35.7h-3.6z M223.3 703.5h3.6v61.5h-3.6z M228.1 767.0h3.6v29.7h-3.6z M232.9 774.0h3.6v43.0h-3.6z M261.5 653.0h3.6v41.0h-3.6z M266.3 694.0h3.6v19.0h-3.6z M275.8 714.7h3.6v18.3h-3.6z M280.6 724.0h3.6v33.6h-3.6z M285.4 755.7h3.6v9.3h-3.6z M294.9 748.0h3.6v17.0h-3.6z M304.5 733.0h3.6v9.7h-3.6z M318.8 692.0h3.6v32.0h-3.6z M323.6 724.0h3.6v43.0h-3.6z M328.3 770.6h3.6v46.9h-3.6z M352.2 724.0h3.6v13.0h-3.6z M357.0 747.0h3.6v50.0h-3.6z M366.5 767.0h3.6v18.5h-3.6z M376.1 778.0h3.6v18.7h-3.6z M380.8 786.5h3.6v22.5h-3.6z M385.6 799.0h3.6v16.0h-3.6z M390.4 814.0h3.6v12.0h-3.6z M395.2 822.5h3.6v16.2h-3.6z M399.9 838.7h3.6v26.0h-3.6z M409.5 851.0h3.6v7.5h-3.6z M414.3 858.5h3.6v14.9h-3.6z M419.0 868.5h3.6v27.1h-3.6z M423.8 900.0h3.6v19.0h-3.6z M438.1 870.7h3.6v14.9h-3.6z M462.0 802.4h3.6v17.4h-3.6z M471.5 803.6h3.6v11.2h-3.6z M504.9 716.7h3.6v21.1h-3.6z M509.7 735.3h3.6v18.6h-3.6z M514.5 755.2h3.6v18.6h-3.6z M538.4 719.2h3.6v19.9h-3.6z M547.9 744.0h3.6v33.5h-3.6z M552.7 782.5h3.6v21.1h-3.6z M557.4 813.1h3.6v9.2h-3.6z M562.2 822.2h3.6v19.9h-3.6z M567.0 842.1h3.6v17.4h-3.6z M571.8 863.2h3.6v36.0h-3.6z M576.5 899.2h3.6v4.2h-3.6z M581.3 880.6h3.6v32.3h-3.6z M586.1 906.6h3.6v23.6h-3.6z M609.9 829.7h3.6v22.3h-3.6z M629.0 811.1h3.6v24.8h-3.6z M633.8 839.6h3.6v9.9h-3.6z M648.1 805.6h3.6v4.2h-3.6z M667.2 769.4h3.6v11.9h-3.6z M672.0 781.3h3.6v5.0h-3.6z M681.5 764.4h3.6v14.4h-3.6z M695.9 776.8h3.6v8.2h-3.6z M710.2 754.5h3.6v7.0h-3.6z M719.7 740.3h3.6v2.5h-3.6z M724.5 741.0h3.6v17.9h-3.6z M743.6 751.5h3.6v11.2h-3.6z M748.4 763.9h3.6v11.2h-3.6z M753.1 777.6h3.6v16.1h-3.6z M772.2 771.3h3.6v5.0h-3.6z M781.8 763.9h3.6v5.0h-3.6z M786.5 770.1h3.6v24.8h-3.6z M796.1 760.2h3.6v6.2h-3.6z M800.9 762.7h3.6v5.0h-3.6z M810.4 739.1h3.6v7.4h-3.6z M815.2 740.3h3.6v3.7h-3.6z M820.0 739.1h3.6v5.0h-3.6z M834.3 727.9h3.6v11.2h-3.6z M839.1 740.3h3.6v12.4h-3.6z M848.6 740.3h3.6v13.7h-3.6z M858.1 749.0h3.6v37.2h-3.6z M867.7 768.9h3.6v7.4h-3.6z M882.0 756.4h3.6v5.0h-3.6z M886.8 775.1h3.6v16.1h-3.6z M891.6 778.8h3.6v11.2h-3.6z M901.1 766.4h3.6v5.0h-3.6z M915.4 766.4h3.6v2.5h-3.6z M934.5 726.6h3.6v17.4h-3.6z M944.1 749.0h3.6v2.5h-3.6z M948.8 756.4h3.6v22.3h-3.6z M963.2 736.1h3.6v1.7h-3.6z M977.5 691.9h3.6v8.7h-3.6z M982.2 699.3h3.6v9.9h-3.6z M987.0 708.0h3.6v23.6h-3.6z M1006.1 698.1h3.6v20.6h-3.6z M1015.7 662.1h3.6v3.7h-3.6z M1030.0 655.9h3.6v3.7h-3.6z M1034.7 655.9h3.6v17.4h-3.6z M1039.5 674.7h3.6v9.9h-3.6z M1044.3 687.1h3.6v23.6h-3.6z M1049.1 704.5h3.6v16.1h-3.6z M1053.8 719.4h3.6v16.1h-3.6z M1068.2 725.6h3.6v8.7h-3.6z M1072.9 734.3h3.6v6.2h-3.6z M1087.2 738.0h3.6v1.5h-3.6z M1096.8 733.0h3.6v5.0h-3.6z M1130.2 634.9h3.6v11.2h-3.6z M1163.6 540.6h3.6v5.0h-3.6z M1177.9 534.4h3.6v6.2h-3.6z M1182.7 535.6h3.6v7.4h-3.6z M1187.5 544.3h3.6v5.0h-3.6z M1192.3 544.3h3.6v3.7h-3.6z M1206.6 530.6h3.6v2.5h-3.6z M1211.3 533.1h3.6v13.7h-3.6z M1220.9 553.0h3.6v3.7h-3.6z M1225.7 556.7h3.6v12.4h-3.6z M1230.4 565.4h3.6v9.9h-3.6z M1240.0 546.3h3.6v2.5h-3.6z M1244.8 554.2h3.6v23.6h-3.6z M1268.6 540.6h3.6v5.0h-3.6z M1278.2 525.7h3.6v5.0h-3.6z M1297.3 519.5h3.6v16.1h-3.6z M1306.8 523.2h3.6v3.7h-3.6z M1311.6 525.7h3.6v12.4h-3.6z M1321.1 534.4h3.6v24.8h-3.6z M1330.7 553.0h3.6v16.1h-3.6z M1335.4 566.6h3.6v9.9h-3.6z M1340.2 574.1h3.6v8.7h-3.6z M1345.0 574.1h3.6v9.9h-3.6z M1349.8 579.1h3.6v5.0h-3.6z M1354.5 580.3h3.6v6.2h-3.6z M1364.1 567.9h3.6v19.9h-3.6z M1387.9 533.1h3.6v24.8h-3.6z M1392.7 558.0h3.6v18.6h-3.6z M1402.3 562.9h3.6v5.0h-3.6z M1407.0 561.7h3.6v3.7h-3.6z M1411.8 564.2h3.6v6.2h-3.6z M1421.4 594.0h3.6v7.0h-3.6z M1430.9 584.0h3.6v17.4h-3.6z M1440.5 544.3h3.6v5.0h-3.6z M1445.2 549.3h3.6v5.0h-3.6z M1450.0 556.7h3.6v9.9h-3.6z M1473.9 534.9h3.6v9.4h-3.6z M1478.6 541.3h3.6v19.1h-3.6z M1483.4 560.4h3.6v1.7h-3.6z M1488.2 559.2h3.6v2.5h-3.6z M1493.0 562.9h3.6v9.9h-3.6z M1502.5 570.4h3.6v23.6h-3.6z M1512.0 575.3h3.6v8.7h-3.6z M1516.8 585.3h3.6v5.0h-3.6z M1531.1 567.9h3.6v20.6h-3.6z M1535.9 588.5h3.6v3.0h-3.6z M1545.5 576.6h3.6v6.2h-3.6z M1550.2 581.5h3.6v2.5h-3.6z M1555.0 581.0h3.6v4.2h-3.6z M1559.8 584.0h3.6v24.8h-3.6z M1574.1 567.1h3.6v10.7h-3.6z M1578.9 574.1h3.6v46.7h-3.6z M1593.2 574.1h3.6v7.4h-3.6z M1602.7 586.5h3.6v5.5h-3.6z M1612.3 574.1h3.6v9.9h-3.6z M1617.1 571.1h3.6v12.9h-3.6z M1631.4 569.1h3.6v9.9h-3.6z M1636.1 570.4h3.6v9.9h-3.6z M1640.9 579.1h3.6v26.1h-3.6z M1645.7 602.7h3.6v3.7h-3.6z M1650.5 603.9h3.6v19.9h-3.6z M1655.2 623.8h3.6v44.7h-3.6z M1660.0 668.5h3.6v9.9h-3.6z M1683.9 622.5h3.6v14.9h-3.6z M1693.4 636.2h3.6v3.7h-3.6z M1698.2 638.7h3.6v7.4h-3.6z M1703.0 643.6h3.6v23.6h-3.6z M1707.7 665.5h3.6v3.5h-3.6z M1717.3 658.5h3.6v9.9h-3.6z M1722.1 668.0h3.6v9.2h-3.6z M1726.8 677.9h3.6v4.2h-3.6z M1741.2 666.5h3.6v2.0h-3.6z" fill="#000" stroke="#8fd3f0" stroke-width="1.45"/>
<rect x="1774.5" y="661.8" width="3.8" height="37.5" fill="#000" stroke="#f2e64a" stroke-width="1.5"/>
<path d="M0 691.7H62.2L69.5 699.6L62.2 707.6H0Z" fill="#efe7d0"/>
<text x="3.4" y="703.6" font-family="DejaVu Sans, Liberation Sans, sans-serif" font-size="11" fill="#111">53,936.17</text>
</svg><svg class="abs" style="left:12px;top:6px" width="20" height="18" viewBox="0 0 20 18"><g fill="none" stroke="#c8c8c8" stroke-width="1.8"><ellipse cx="6.6" cy="11.6" rx="3.6" ry="2.6" transform="rotate(-40 6.6 11.6)"/><ellipse cx="12.6" cy="6.4" rx="3.6" ry="2.6" transform="rotate(-40 12.6 6.4)"/></g></svg>
<div class="sel" style="left:36px;top:4px;width:112px;height:22px"><span style="left:6px"><b class="k">マーケット</b></span><i></i></div>
<div class="sel" style="left:153px;top:4px;width:252px;height:22px"><span style="left:6px">日経225</span><i></i></div>
<div class="sel" style="left:411px;top:4px;width:75px;height:22px"><span style="left:6px">1分足</span><i></i></div>
<div class="btn g" style="left:492px;top:5px;width:18px;height:20px"><svg width="18" height="20"><path d="M11 5 L7 10 L11 15" fill="none" stroke="#ddd" stroke-width="1.6"/></svg></div>
<div class="btn g" style="left:511px;top:5px;width:18px;height:20px"><svg width="18" height="20"><path d="M7 5 L11 10 L7 15" fill="none" stroke="#ddd" stroke-width="1.6"/></svg></div>
<div class="btn b t" style="left:536px;top:5px;width:60px;height:20px">表示期間</div>
<div class="btn g t" style="left:603px;top:5px;width:60px;height:20px"><b class="k">テクニカル</b></div>
<div class="btn b t" style="left:670px;top:5px;width:52px;height:20px">通常</div>
<div class="btn g t" style="left:723px;top:5px;width:52px;height:20px">指数化</div>
<div class="btn g t" style="left:776px;top:5px;width:52px;height:20px"><b class="k">スプレッド</b></div>
<div class="btn g" style="left:835px;top:5px;width:20px;height:20px"><svg width="20" height="20" viewBox="0 0 20 20"><path d="M10.5 3.5V17M3.8 10.5H17.2" stroke="#e4e4e4" stroke-width="1.1" fill="none"/></svg></div>
<div class="btn g" style="left:862px;top:5px;width:20px;height:20px"><svg width="20" height="20" viewBox="0 0 20 20"><circle cx="9" cy="9" r="5.2" fill="none" stroke="#ddd" stroke-width="1.5"/><path d="M6.3 9H11.7M9 6.3V11.7" stroke="#ddd" stroke-width="1.5"/><path d="M13 13L16.5 16.5" stroke="#ddd" stroke-width="2"/></svg></div>
<div class="btn g" style="left:885px;top:5px;width:20px;height:20px"><svg width="20" height="20" viewBox="0 0 20 20"><circle cx="9" cy="9" r="5.2" fill="none" stroke="#777" stroke-width="1.5"/><path d="M6.3 9H11.7" stroke="#777" stroke-width="1.5"/><path d="M13 13L16.5 16.5" stroke="#777" stroke-width="2"/></svg></div>
<div class="btn g" style="left:912px;top:5px;width:20px;height:20px"><svg width="20" height="20" viewBox="0 0 20 20"><path d="M4 16 L5.5 11.5 L13.5 3.5 L16.5 6.5 L8.5 14.5 Z" fill="#ddd"/><path d="M7 12.5L14.5 5M8.2 13.8L15.6 6.2" stroke="#555" stroke-width="0.7"/></svg></div>
<div class="btn g" style="left:939px;top:5px;width:20px;height:20px"><svg width="20" height="20" viewBox="0 0 20 20"><path d="M2 8 L5 4 L8 12 L11 3 L13 8" fill="none" stroke="#ddd" stroke-width="1.6"/><path d="M12 8 L12 17 L14.2 14.8 L15.8 18 L17 17.4 L15.5 14.2 L18 14 Z" fill="#ddd"/></svg></div>
<div class="btn b" style="left:966px;top:5px;width:20px;height:20px"><svg width="20" height="20" viewBox="0 0 20 20"><text x="10" y="16.5" font-size="19" font-weight="normal" text-anchor="middle" fill="#fff" font-family="Liberation Sans, sans-serif">¥</text></svg></div>
<div class="btn g" style="left:993px;top:5px;width:20px;height:20px"><svg width="20" height="20" viewBox="0 0 20 20"><circle cx="10" cy="10" r="6.4" fill="#eee"/><rect x="9" y="8.6" width="2.2" height="5" fill="#444"/><circle cx="10.1" cy="6.6" r="1.3" fill="#444"/></svg></div>
<div class="btn g" style="left:1020px;top:5px;width:20px;height:20px"><svg width="20" height="20" viewBox="0 0 20 20"><text x="2" y="8" font-size="8" font-weight="bold" fill="#ddd" font-family="Liberation Sans, sans-serif">MY</text><path d="M8 9V18M12 8V17M16 9V18" stroke="#ddd" stroke-width="1"/><rect x="6.8" y="11" width="2.4" height="4.5" fill="#ddd"/><rect x="10.8" y="10.5" width="2.4" height="4.5" fill="#ddd"/><rect x="14.8" y="11" width="2.4" height="4.5" fill="#ddd"/></svg></div>
<div class="btn g" style="left:1047px;top:5px;width:20px;height:20px"><svg width="20" height="20" viewBox="0 0 20 20"><path d="M2.5 14.5 V11 L5 8.5 L6.5 10 L9 6 L10.5 8.5 L12 7 L13.5 9 L15 6.5 L17.5 10 V14.5 Z" fill="#ddd"/></svg></div>
<div class="btn g" style="left:1074px;top:5px;width:20px;height:20px"><svg width="20" height="20" viewBox="0 0 20 20"><path d="M4 15.5 L10.5 9 A3.6 3.6 0 0 1 14.8 4.2 L12.6 6.4 L13.6 8 L15.4 8.2 L17 6.4 A3.6 3.6 0 0 1 12 11 L5.8 17.2 A1.2 1.2 0 0 1 4 15.5 Z" fill="#ddd"/></svg></div>
<div class="btn g" style="left:1108px;top:5px;width:20px;height:20px"><svg width="20" height="20" viewBox="0 0 20 20"><path d="M6 10 V4 H12.5 L14.5 6.5 V10" fill="#444" stroke="#e4e4e4" stroke-width="1.4"/><rect x="3" y="9.5" width="14.5" height="6.5" fill="#e4e4e4"/><rect x="5" y="12" width="10.5" height="1.6" fill="#555"/></svg></div>
<div class="btn g" style="left:1135px;top:5px;width:20px;height:20px"><svg width="20" height="20" viewBox="0 0 20 20"><rect x="3.5" y="4.5" width="13" height="12" fill="none" stroke="#ddd" stroke-width="1.3"/><path d="M3.5 7.2H16.5" stroke="#ddd" stroke-width="1.3"/><path d="M10 9 L13 12.3 H11 V15 H9 V12.3 H7 Z" fill="#ddd"/></svg></div>
<div class="tx w" style="left:13px;top:37.5px">表示期間</div>
<div class="sel" style="left:71px;top:32px;width:77px;height:22px"><span style="left:4px">本数指定</span><i></i></div>
<div class="tx w" style="left:154px;top:37.5px">本数</div>
<div class="inp" style="left:186px;top:33px;width:42px;height:20px"><span>358</span></div>
<div class="btn g" style="left:229px;top:33px;width:14px;height:20px"><svg width="14" height="20"><path d="M3.5 8 H10.5 L7 13 Z" fill="#ddd"/></svg></div>
<div class="btn g" style="left:244px;top:33px;width:14px;height:20px"><svg width="14" height="20"><path d="M3.5 13 H10.5 L7 8 Z" fill="#ddd"/></svg></div>
<div class="tx w" style="left:264px;top:37.5px">表示期間：</div>
<div class="tx w" style="left:336px;top:37.5px;letter-spacing:0.68px;word-spacing:3px">2026/01/15 15:05 ～ 2026/01/16 15:30</div>
<div class="btn g" style="left:600px;top:33px;width:20px;height:20px"><svg width="20" height="20" viewBox="0 0 20 20"><path d="M6 5.5 H12 A3.5 3.5 0 0 1 12 12.5 H8.5" fill="none" stroke="#ddd" stroke-width="2.4"/><path d="M9.5 8.5 V16.5 L4 12.5 Z" fill="#ddd"/></svg></div>
<div class="tx" style="left:13px;top:67px;font-size:15.5px;color:#e27a8e">日経225</div>
<div class="tx c" style="left:320px;top:67px">現在値</div>
<div class="tx y" style="left:390px;top:67px">53,936.17</div>
<div class="tx gr" style="left:514px;top:67px">-174.33</div>
<div class="tx gr" style="left:619px;top:67px">-0.32%</div>
<div class="tx y" style="left:680px;top:67px">26/01/16&nbsp; 15:45</div>
<div class="tx c" style="left:13px;top:92px">始値</div>
<div class="tx y" style="left:76px;top:92px">54,071.28 09:00</div>
<div class="tx c" style="left:208px;top:92px">高値</div>
<div class="tx y" style="left:271px;top:92px">54,130.60 09:01</div>
<div class="tx c" style="left:403px;top:92px">安値</div>
<div class="tx y" style="left:466px;top:92px">53,706.79 10:22</div>
<div class="tx c" style="left:598px;top:92px">前日終値</div>
<div class="tx y" style="left:688px;top:92px">54,110.50</div>
<div class="tx c" style="left:767px;top:92px">出来高</div>
<div class="tx y" style="left:906px;top:92px">0</div>
<div class="abs" style="left:959.5px;top:28.5px;width:585px;height:57px;border:4px solid #e8316c;border-radius:8px;background:#000"></div>
<div class="abs pl" style="left:978px;top:42px;font-size:27px;color:#f2f2f2;letter-spacing:0.5px">実現損益</div>
<svg class="abs" style="left:1101px;top:44px" width="28" height="28" viewBox="0 0 28 28"><circle cx="14" cy="14" r="13" fill="#e0821e"/><circle cx="14" cy="14" r="13" fill="none" stroke="#b8600a" stroke-width="1.2"/><rect x="12.2" y="5.5" width="3.6" height="11" rx="1.2" fill="#fff"/><circle cx="14" cy="20.6" r="2" fill="#fff"/></svg>
<div class="abs pl" style="left:1174px;top:43px;font-size:27px;color:#5fd45f;letter-spacing:2.4px">-607,752円</div>
<div class="abs pl" style="left:1370px;top:43px;font-size:27px;color:#f2f2f2;letter-spacing:2.6px">2026/01/16</div><div class="tbl " style="left:404px;top:196px;height:292px"><div class="row" style="top:0px;height:42px"><div class="lab" style="height:41px"><div class="nm" style="">日経平均株価</div><svg class="xi" width="20" height="20" viewBox="0 0 20 20"><circle cx="10" cy="10" r="9.3" fill="#4aa3e8"/><path d="M5.8 5.2 L13.2 14.8 M14 5.2 L6 14.8" stroke="#fff" stroke-width="1.3" fill="none"/><path d="M5.2 5.2 H7.4 L14.8 14.8 H12.6 Z" fill="none" stroke="#fff" stroke-width="0.9"/></svg><div class="tag"><i class="ar"></i>寄与度</div><svg class="fl" width="28" height="28" viewBox="0 0 28 28"><circle cx="14" cy="14" r="13" fill="#8c8c8c"/><circle cx="14" cy="14" r="6.8" fill="#8a4a40"/></svg><div class="tm">01/16</div></div><svg class="mc" width="80" height="40" viewBox="0 0 80 40"><rect width="80" height="40" rx="2" fill="#e6e6e6"/><rect x="0" y="9" width="80" height="8" fill="#efefef"/><rect x="0" y="25" width="80" height="8" fill="#efefef"/><polygon points="0,15.5 0,22 3,23 6,25 9,30 11,27 13,28 16,31 18,26 21,25 25,24 31,24.5 31,15.5" fill="rgba(240,120,120,0.38)"/><polyline points="0,22 3,23 6,25 9,30 11,27 13,28 16,31 18,26 21,25 25,24 31,24.5" fill="none" stroke="#c9362c" stroke-width="1"/><polygon points="43,15.5 43,24 46,22 49,24 53,17 58,15.5 62,17 68,16.5 72,18 76,20 80,22 80,15.5" fill="rgba(240,120,120,0.38)"/><polyline points="43,24 46,22 49,24 53,17 58,15.5 62,17 68,16.5 72,18 76,20 80,22" fill="none" stroke="#c9362c" stroke-width="1"/><path d="M0 15.5H80" stroke="#5a78d8" stroke-width="1" stroke-dasharray="1 1.4"/><path d="M1 37.5H6M34 37.5H37M71 37.5H76" stroke="#aaa" stroke-width="1.2"/></svg><div class="wh" style="height:42px"><div class="val" style="color:#717171">53,936<small>.17</small></div><div class="chg" style="color:#c9362c">-174<small>.33</small></div><div class="pct" style="color:#c9362c"><i>▼</i>0.32<small>%</small></div><div class="hl" style="top:5px">H:54,130<small>.60</small></div><div class="hl" style="top:23px">L:53,706<small>.79</small></div></div></div><div class="row" style="top:42px;height:42px"><div class="lab" style="height:41px"><div class="nm" style="top:-2px">TOPIX</div><div class="tag yt"><i class="sq"></i>Y!</div><svg class="fl" width="28" height="28" viewBox="0 0 28 28"><circle cx="14" cy="14" r="13" fill="#8c8c8c"/><circle cx="14" cy="14" r="6.8" fill="#8a4a40"/></svg><div class="tm">01/16</div></div><svg class="mc" width="80" height="40" viewBox="0 0 80 40"><rect width="80" height="40" rx="2" fill="#e6e6e6"/><rect x="0" y="9" width="80" height="8" fill="#efefef"/><rect x="0" y="25" width="80" height="8" fill="#efefef"/><polygon points="0,16.5 0,19 3,21 6,25 10,30 13,26 15,28 18,24 22,22 27,20 31,22 31,16.5" fill="rgba(240,120,120,0.38)"/><polyline points="0,19 3,21 6,25 10,30 13,26 15,28 18,24 22,22 27,20 31,22" fill="none" stroke="#c9362c" stroke-width="1"/><polygon points="43,16.5 43,23 46,22 50,26 54,21 58,19 62,20 68,18 72,19 76,21 80,20 80,16.5" fill="rgba(240,120,120,0.38)"/><polyline points="43,23 46,22 50,26 54,21 58,19 62,20 68,18 72,19 76,21 80,20" fill="none" stroke="#c9362c" stroke-width="1"/><path d="M0 16.5H80" stroke="#5a78d8" stroke-width="1" stroke-dasharray="1 1.4"/><path d="M1 37.5H6M34 37.5H37M71 37.5H76" stroke="#aaa" stroke-width="1.2"/></svg><div class="wh" style="height:42px"><div class="val" style="color:#717171">3,658<small>.68</small></div><div class="chg" style="color:#c9362c">-10<small>.30</small></div><div class="pct" style="color:#c9362c"><i>▼</i>0.28<small>%</small></div><div class="hl" style="top:5px">H:3,666<small>.47</small></div><div class="hl" style="top:23px">L:3,642<small>.63</small></div></div></div><div class="row" style="top:84px;height:42px"><div class="lab" style="height:41px"><div class="nm" style="">JPX日経400</div><svg class="fl" width="28" height="28" viewBox="0 0 28 28"><circle cx="14" cy="14" r="13" fill="#8c8c8c"/><circle cx="14" cy="14" r="6.8" fill="#8a4a40"/></svg><div class="tm">01/16</div></div><svg class="mc" width="80" height="40" viewBox="0 0 80 40"><rect width="80" height="40" rx="2" fill="#e6e6e6"/><rect x="0" y="9" width="80" height="8" fill="#efefef"/><rect x="0" y="25" width="80" height="8" fill="#efefef"/><polygon points="0,11 0,13 3,15 6,18 10,22 13,19 15,21 18,18 22,17 27,15 31,16 31,11" fill="rgba(240,120,120,0.38)"/><polyline points="0,13 3,15 6,18 10,22 13,19 15,21 18,18 22,17 27,15 31,16" fill="none" stroke="#c9362c" stroke-width="1"/><polygon points="43,11 43,16 46,15.5 50,18 54,14 58,13 62,14 68,12 72,13 76,15 80,14 80,11" fill="rgba(240,120,120,0.38)"/><polyline points="43,16 46,15.5 50,18 54,14 58,13 62,14 68,12 72,13 76,15 80,14" fill="none" stroke="#c9362c" stroke-width="1"/><path d="M0 11H80" stroke="#5a78d8" stroke-width="1" stroke-dasharray="1 1.4"/><path d="M1 37.5H6M34 37.5H37M71 37.5H76" stroke="#aaa" stroke-width="1.2"/></svg><div class="wh" style="height:42px"><div class="val" style="color:#717171">32,942<small>.37</small></div><div class="chg" style="color:#c9362c">-90<small>.28</small></div><div class="pct" style="color:#c9362c"><i>▼</i>0.27<small>%</small></div><div class="hl" style="top:5px">H:33,016<small>.77</small></div><div class="hl" style="top:23px">L:32,809<small>.32</small></div></div></div><div class="row" style="top:126px;height:42px"><div class="lab" style="height:41px"><div class="nm" style="">グロース250</div><div class="tag yt"><i class="sq"></i>Y!</div><svg class="fl" width="28" height="28" viewBox="0 0 28 28"><circle cx="14" cy="14" r="13" fill="#8c8c8c"/><circle cx="14" cy="14" r="6.8" fill="#8a4a40"/></svg><div class="tm">01/16</div></div><svg class="mc" width="80" height="40" viewBox="0 0 80 40"><rect width="80" height="40" rx="2" fill="#e6e6e6"/><rect x="0" y="9" width="80" height="8" fill="#efefef"/><rect x="0" y="25" width="80" height="8" fill="#efefef"/><polygon points="0,14.5 0,13 1,8 2,9 3,14 3,14.5" fill="rgba(90,190,90,0.38)"/><polyline points="0,13 1,8 2,9 3,14" fill="none" stroke="#2e8a2e" stroke-width="1"/><polygon points="3,14.5 3,15 5,22 8,28 11,27 14,30 18,26 22,27 26,25 30,27 30,14.5" fill="rgba(240,120,120,0.38)"/><polyline points="3,15 5,22 8,28 11,27 14,30 18,26 22,27 26,25 30,27" fill="none" stroke="#c9362c" stroke-width="1"/><polygon points="43,14.5 43,24 46,23 50,26 54,23 58,22 64,21 70,20 75,18 80,15 80,14.5" fill="rgba(240,120,120,0.38)"/><polyline points="43,24 46,23 50,26 54,23 58,22 64,21 70,20 75,18 80,15" fill="none" stroke="#c9362c" stroke-width="1"/><path d="M0 14.5H80" stroke="#5a78d8" stroke-width="1" stroke-dasharray="1 1.4"/><path d="M1 37.5H6M34 37.5H37M71 37.5H76" stroke="#aaa" stroke-width="1.2"/></svg><div class="wh" style="height:42px"><div class="val" style="color:#717171">734<small>.02</small></div><div class="chg" style="color:#2e8a2e">+1<small>.81</small></div><div class="pct up" style="color:#2e8a2e"><i>▲</i>0.25<small>%</small></div><div class="hl" style="top:5px">H:738<small>.14</small></div><div class="hl" style="top:23px">L:723<small>.85</small></div></div></div><div class="row" style="top:168px;height:42px"><div class="lab" style="height:41px"><div class="nm" style="">為替 ドル円</div><div class="tag"><i class="ar"></i>為替</div><svg class="fl" width="28" height="28" viewBox="0 0 28 28"><defs><clipPath id="cpL"><rect x="0" y="0" width="14.5" height="28"/></clipPath><clipPath id="cpC"><circle cx="14" cy="14" r="13"/></clipPath></defs><g clip-path="url(#cpC)"><rect width="28" height="28" fill="#fff"/><circle cx="17.5" cy="14" r="6.8" fill="#c8402e"/><g clip-path="url(#cpL)"><rect width="15" height="28" fill="#fff"/><rect x="0" y="1" width="15" height="2" fill="#d0453a"/><rect x="0" y="5" width="15" height="2" fill="#d0453a"/><rect x="0" y="9" width="15" height="2" fill="#d0453a"/><rect x="0" y="13" width="15" height="2" fill="#d0453a"/><rect x="0" y="17" width="15" height="2" fill="#d0453a"/><rect x="0" y="21" width="15" height="2" fill="#d0453a"/><rect x="0" y="25" width="15" height="2" fill="#d0453a"/><rect x="0" y="0" width="15" height="15" fill="#3c5a9a"/><circle cx="2.0" cy="2.5" r="0.6" fill="#fff"/><circle cx="4.8" cy="2.5" r="0.6" fill="#fff"/><circle cx="7.6" cy="2.5" r="0.6" fill="#fff"/><circle cx="10.399999999999999" cy="2.5" r="0.6" fill="#fff"/><circle cx="13.2" cy="2.5" r="0.6" fill="#fff"/><circle cx="2.0" cy="5.5" r="0.6" fill="#fff"/><circle cx="4.8" cy="5.5" r="0.6" fill="#fff"/><circle cx="7.6" cy="5.5" r="0.6" fill="#fff"/><circle cx="10.399999999999999" cy="5.5" r="0.6" fill="#fff"/><circle cx="13.2" cy="5.5" r="0.6" fill="#fff"/><circle cx="2.0" cy="8.5" r="0.6" fill="#fff"/><circle cx="4.8" cy="8.5" r="0.6" fill="#fff"/><circle cx="7.6" cy="8.5" r="0.6" fill="#fff"/><circle cx="10.399999999999999" cy="8.5" r="0.6" fill="#fff"/><circle cx="13.2" cy="8.5" r="0.6" fill="#fff"/><circle cx="2.0" cy="11.5" r="0.6" fill="#fff"/><circle cx="4.8" cy="11.5" r="0.6" fill="#fff"/><circle cx="7.6" cy="11.5" r="0.6" fill="#fff"/><circle cx="10.399999999999999" cy="11.5" r="0.6" fill="#fff"/><circle cx="13.2" cy="11.5" r="0.6" fill="#fff"/></g></g></svg><div class="tm live">21:33</div></div><svg class="mc" width="80" height="40" viewBox="0 0 80 40"><rect width="80" height="40" rx="2" fill="#fff"/><polygon points="0,19 0,19 3,18 6,15.5 9,16 12,18.5 12,19" fill="rgba(90,190,90,0.38)"/><polyline points="0,19 3,18 6,15.5 9,16 12,18.5" fill="none" stroke="#2e8a2e" stroke-width="1"/><polygon points="12,19 12,19 16,20.5 22,20 28,18.5 34,17.5 40,18 45,18.5 49,23 53,22.5 58,21 62,21 66,24 72,24 80,25 80,19" fill="rgba(240,120,120,0.38)"/><polyline points="12,19 16,20.5 22,20 28,18.5 34,17.5 40,18 45,18.5 49,23 53,22.5 58,21 62,21 66,24 72,24 80,25" fill="none" stroke="#c9362c" stroke-width="1"/><path d="M1 37.5H4M6 37.5H12M16 37.5H22M26 37.5H32M36 37.5H42M47 37.5H51M57 37.5H61M67 37.5H71" stroke="#bbb" stroke-width="1.2"/></svg><div class="wh" style="height:42px"><div class="val" style="color:#000">158.17<small>7</small></div><div class="chg" style="color:#c9362c">-0.44<small>5</small></div><div class="pct" style="color:#c9362c"><i>▼</i>0.28<small>%</small></div><div class="hl" style="top:5px">H:158.69<small>9</small></div><div class="hl" style="top:23px">L:157.94<small>9</small></div></div></div><div class="row" style="top:210px;height:42px"><div class="lab" style="height:41px"><div class="nm" style="">為替 ユーロ円</div><div class="tag"><i class="ar"></i>為替</div><svg class="fl" width="28" height="28" viewBox="0 0 28 28"><defs><clipPath id="cpL"><rect x="0" y="0" width="14.5" height="28"/></clipPath><clipPath id="cpC"><circle cx="14" cy="14" r="13"/></clipPath></defs><g clip-path="url(#cpC)"><rect width="28" height="28" fill="#fff"/><circle cx="17.5" cy="14" r="6.8" fill="#c8402e"/><g clip-path="url(#cpL)"><rect width="15" height="28" fill="#fff"/><rect x="0" y="1" width="15" height="2" fill="#d0453a"/><rect x="0" y="5" width="15" height="2" fill="#d0453a"/><rect x="0" y="9" width="15" height="2" fill="#d0453a"/><rect x="0" y="13" width="15" height="2" fill="#d0453a"/><rect x="0" y="17" width="15" height="2" fill="#d0453a"/><rect x="0" y="21" width="15" height="2" fill="#d0453a"/><rect x="0" y="25" width="15" height="2" fill="#d0453a"/><rect x="0" y="0" width="15" height="15" fill="#3c5a9a"/><circle cx="2.0" cy="2.5" r="0.6" fill="#fff"/><circle cx="4.8" cy="2.5" r="0.6" fill="#fff"/><circle cx="7.6" cy="2.5" r="0.6" fill="#fff"/><circle cx="10.399999999999999" cy="2.5" r="0.6" fill="#fff"/><circle cx="13.2" cy="2.5" r="0.6" fill="#fff"/><circle cx="2.0" cy="5.5" r="0.6" fill="#fff"/><circle cx="4.8" cy="5.5" r="0.6" fill="#fff"/><circle cx="7.6" cy="5.5" r="0.6" fill="#fff"/><circle cx="10.399999999999999" cy="5.5" r="0.6" fill="#fff"/><circle cx="13.2" cy="5.5" r="0.6" fill="#fff"/><circle cx="2.0" cy="8.5" r="0.6" fill="#fff"/><circle cx="4.8" cy="8.5" r="0.6" fill="#fff"/><circle cx="7.6" cy="8.5" r="0.6" fill="#fff"/><circle cx="10.399999999999999" cy="8.5" r="0.6" fill="#fff"/><circle cx="13.2" cy="8.5" r="0.6" fill="#fff"/><circle cx="2.0" cy="11.5" r="0.6" fill="#fff"/><circle cx="4.8" cy="11.5" r="0.6" fill="#fff"/><circle cx="7.6" cy="11.5" r="0.6" fill="#fff"/><circle cx="10.399999999999999" cy="11.5" r="0.6" fill="#fff"/><circle cx="13.2" cy="11.5" r="0.6" fill="#fff"/></g></g></svg><div class="tm live">21:33</div></div><svg class="mc" width="80" height="40" viewBox="0 0 80 40"><rect width="80" height="40" rx="2" fill="#fff"/><polygon points="0,15 0,15 4,16 8,18 12,20 18,19.5 24,18.5 30,18 36,17.5 42,18 46,19 50,22 54,22.5 58,21 62,20.5 66,22 70,23.5 76,23 80,23 80,15" fill="rgba(240,120,120,0.38)"/><polyline points="0,15 4,16 8,18 12,20 18,19.5 24,18.5 30,18 36,17.5 42,18 46,19 50,22 54,22.5 58,21 62,20.5 66,22 70,23.5 76,23 80,23" fill="none" stroke="#c9362c" stroke-width="1"/><path d="M1 37.5H4M6 37.5H12M16 37.5H22M26 37.5H32M36 37.5H42M47 37.5H51M57 37.5H61M67 37.5H71" stroke="#bbb" stroke-width="1.2"/></svg><div class="wh" style="height:42px"><div class="val" style="color:#000">183.73<small>7</small></div><div class="chg" style="color:#c9362c">-0.37<small>5</small></div><div class="pct" style="color:#c9362c"><i>▼</i>0.20<small>%</small></div><div class="hl" style="top:5px">H:184.18<small>6</small></div><div class="hl" style="top:23px">L:183.45<small>4</small></div></div></div><div class="row lastrow" style="top:252px;height:40px"><div class="lab" style="height:39px"><div class="nm" style="font-size:14.5px;letter-spacing:-0.3px"><span class="cfdt">CFD</span>日経平均</div><svg class="xi" width="20" height="20" viewBox="0 0 20 20"><circle cx="10" cy="10" r="9.3" fill="#4aa3e8"/><path d="M5.8 5.2 L13.2 14.8 M14 5.2 L6 14.8" stroke="#fff" stroke-width="1.3" fill="none"/><path d="M5.2 5.2 H7.4 L14.8 14.8 H12.6 Z" fill="none" stroke="#fff" stroke-width="0.9"/></svg><svg class="fl" width="28" height="28" viewBox="0 0 28 28"><circle cx="14" cy="14" r="13" fill="#fff"/><circle cx="14" cy="14" r="6.8" fill="#c8402e"/></svg><div class="tm live">21:33</div></div><svg class="mc" width="80" height="40" viewBox="0 0 80 40"><rect width="80" height="40" rx="2" fill="#fff"/><rect x="40" y="0" width="22" height="40" fill="#f5e27a"/><polygon points="0,21 0,2 3,4 6,6 9,7 12,9 15,9 18,11 21,12 24,14 27,19 30,20.5 33,18 36,17 39,18 41,21 41,21" fill="rgba(90,190,90,0.38)"/><polyline points="0,2 3,4 6,6 9,7 12,9 15,9 18,11 21,12 24,14 27,19 30,20.5 33,18 36,17 39,18 41,21" fill="none" stroke="#2e8a2e" stroke-width="1"/><polygon points="41,21 41,21 43,25 46,24 49,23 52,21.5 52,21" fill="rgba(240,120,120,0.38)"/><polyline points="41,21 43,25 46,24 49,23 52,21.5" fill="none" stroke="#c9362c" stroke-width="1"/><polygon points="52,21 52,21 54,17 56,15.5 59,16 62,19 65,18 68,20 72,20.5 72,21" fill="rgba(90,190,90,0.38)"/><polyline points="52,21 54,17 56,15.5 59,16 62,19 65,18 68,20 72,20.5" fill="none" stroke="#2e8a2e" stroke-width="1"/><polygon points="72,21 72,21 76,22 80,25 80,21" fill="rgba(240,120,120,0.38)"/><polyline points="72,21 76,22 80,25" fill="none" stroke="#c9362c" stroke-width="1"/><path d="M1 37.5H4M6 37.5H12M16 37.5H22M26 37.5H32M36 37.5H42M47 37.5H51M57 37.5H61M67 37.5H71" stroke="#bbb" stroke-width="1.2"/></svg><div class="wh cfd" style="height:40px"><div class="val" style="color:#000">53,801<small>.80</small></div><div class="cfdbox"><span class="nk">日経比:</span><span class="cv" style="color:#c9362c">-134</span></div><div class="pct sm" style="color:#c9362c"><i>▼</i>0.25<small>%</small></div><div class="hl" style="top:5px">H:54,063<small></small></div><div class="hl" style="top:23px">L:53,791<small></small></div></div></div></div><div class="tbl t2" style="left:1181px;top:901px;height:251px"><div class="row" style="top:0px;height:42px"><div class="lab" style="height:41px"><div class="nm" style="font-size:12.5px;top:-1px;letter-spacing:-0.2px">日本国債10年利回り</div><div class="tag"><i class="ar"></i>国債 債券</div><svg class="fl" width="28" height="28" viewBox="0 0 28 28"><circle cx="14" cy="14" r="13" fill="#fff"/><circle cx="14" cy="14" r="6.8" fill="#c8402e"/></svg><div class="tm live">21:21</div></div><svg class="mc" width="80" height="40" viewBox="0 0 80 40"><rect width="80" height="40" rx="2" fill="#fff"/><polygon points="2,30 2,30 28,30 28,30" fill="rgba(240,120,120,0.38)"/><polyline points="2,30 28,30" fill="none" stroke="#c9362c" stroke-width="1"/><polygon points="28,30 28,30 29,17 32,16 36,15 40,14 44,12 46,9 48,12 52,13 56,12 60,10 64,9 70,10 75,9 80,9 80,30" fill="rgba(90,190,90,0.38)"/><polyline points="28,30 29,17 32,16 36,15 40,14 44,12 46,9 48,12 52,13 56,12 60,10 64,9 70,10 75,9 80,9" fill="none" stroke="#2e8a2e" stroke-width="1"/><path d="M1 37.5H4M6 37.5H12M16 37.5H22M26 37.5H32M36 37.5H42M47 37.5H51M57 37.5H61M67 37.5H71" stroke="#bbb" stroke-width="1.2"/></svg><div class="wh" style="height:42px"><div class="val" style="color:#000">2.187<small></small></div><div class="chg" style="color:#2e8a2e">+0.028<small></small></div><div class="pct up" style="color:#2e8a2e"><i>▲</i>1.30<small>%</small></div><div class="hl" style="top:5px">H:2.190<small></small></div><div class="hl" style="top:23px">L:2.168<small></small></div></div></div><div class="row" style="top:42px;height:42px"><div class="lab" style="height:41px"><div class="nm" style="">長期国債先物<span class="sub">大取</span></div><svg class="fl" width="28" height="28" viewBox="0 0 28 28"><circle cx="14" cy="14" r="13" fill="#fff"/><circle cx="14" cy="14" r="6.8" fill="#c8402e"/></svg><div class="tm live">21:16</div></div><svg class="mc" width="80" height="40" viewBox="0 0 80 40"><rect width="80" height="40" rx="2" fill="#fff"/><polygon points="0,13 0,16 3,15 6,13.5 9,15 12,14.5 16,16 20,15.5 24,16 28,17 32,18 36,19 40,18 44,19 48,20 51,24 53,25 56,19 60,18 64,17 68,19 72,20 76,19 80,20 80,13" fill="rgba(240,120,120,0.38)"/><polyline points="0,16 3,15 6,13.5 9,15 12,14.5 16,16 20,15.5 24,16 28,17 32,18 36,19 40,18 44,19 48,20 51,24 53,25 56,19 60,18 64,17 68,19 72,20 76,19 80,20" fill="none" stroke="#c9362c" stroke-width="1"/><path d="M1 37.5H4M6 37.5H12M16 37.5H22M26 37.5H32M36 37.5H42M47 37.5H51M57 37.5H61M67 37.5H71" stroke="#bbb" stroke-width="1.2"/></svg><div class="wh" style="height:42px"><div class="val" style="color:#000">131.83<small></small></div><div class="chg" style="color:#c9362c">-0.08<small></small></div><div class="pct flat" style="color:#c9362c"><i>▼</i>0.00<small>%</small></div><div class="hl" style="top:5px">H:131.93<small></small></div><div class="hl" style="top:23px">L:131.81<small></small></div></div></div><div class="row" style="top:84px;height:42px"><div class="lab" style="height:41px"><div class="nm" style="">日経VI</div><div class="tag"><i class="ar"></i>恐怖指数</div><svg class="fl" width="28" height="28" viewBox="0 0 28 28"><circle cx="14" cy="14" r="13" fill="#777"/><path d="M3 12 L12 4 M2 17 L9 22 L15 26 M9 22 L12 13 L3 12 M12 13 L12 4" stroke="#999" stroke-width="1.4" fill="none"/><ellipse cx="18" cy="12" rx="6.5" ry="5.5" fill="#333"/><rect x="15" y="15" width="6" height="5" rx="1" fill="#333"/><circle cx="16" cy="12" r="1.5" fill="#999"/><circle cx="20.5" cy="12" r="1.5" fill="#999"/></svg><div class="tm">01/16</div></div><svg class="mc" width="80" height="40" viewBox="0 0 80 40"><rect width="80" height="40" rx="2" fill="#e6e6e6"/><rect x="0" y="9" width="80" height="8" fill="#efefef"/><rect x="0" y="25" width="80" height="8" fill="#efefef"/><polygon points="0,17.5 0,17 2,15 5,13 8,14 11,13.5 14,15 17,16 19,17.5 19,17.5" fill="rgba(90,190,90,0.38)"/><polyline points="0,17 2,15 5,13 8,14 11,13.5 14,15 17,16 19,17.5" fill="none" stroke="#2e8a2e" stroke-width="1"/><polygon points="19,17.5 19,17.5 22,20 26,22 30,21 30,17.5" fill="rgba(240,120,120,0.38)"/><polyline points="19,17.5 22,20 26,22 30,21" fill="none" stroke="#c9362c" stroke-width="1"/><polygon points="36,17.5 36,19 40,24 44,26 48,27 52,26 56,27 60,24 64,20 68,19 72,21 76,20 80,22 80,17.5" fill="rgba(240,120,120,0.38)"/><polyline points="36,19 40,24 44,26 48,27 52,26 56,27 60,24 64,20 68,19 72,21 76,20 80,22" fill="none" stroke="#c9362c" stroke-width="1"/><path d="M0 17.5H80" stroke="#5a78d8" stroke-width="1" stroke-dasharray="1 1.4"/><path d="M1 37.5H6M34 37.5H37M71 37.5H76" stroke="#aaa" stroke-width="1.2"/></svg><div class="wh" style="height:42px"><div class="val" style="color:#717171">30.03<small></small></div><div class="chg" style="color:#c9362c">-0.22<small></small></div><div class="pct s2" style="color:#c9362c"><i>▼</i>0.73<small>%</small></div><div class="hl" style="top:5px">H:30.50<small></small></div><div class="hl" style="top:23px">L:29.01<small></small></div></div></div><div class="row" style="top:126px;height:42px"><div class="lab" style="height:41px"><div class="nm" style="">NT倍率</div><div class="tag"><i class="ar"></i>NT倍率</div><svg class="fl" width="28" height="28" viewBox="0 0 28 28"><circle cx="14" cy="14" r="13" fill="#8c8c8c"/><circle cx="14" cy="14" r="6.8" fill="#8a4a40"/></svg><div class="tm">01/16</div></div><svg class="mc" width="80" height="40" viewBox="0 0 80 40"><rect width="80" height="40" rx="2" fill="#e6e6e6"/><rect x="0" y="9" width="80" height="8" fill="#efefef"/><rect x="0" y="25" width="80" height="8" fill="#efefef"/><polygon points="0,18.5 0,19 4,20 8,19 8,18.5" fill="rgba(240,120,120,0.38)"/><polyline points="0,19 4,20 8,19" fill="none" stroke="#c9362c" stroke-width="1"/><polygon points="8,18.5 8,18.5 11,16 13,18.5 13,18.5" fill="rgba(90,190,90,0.38)"/><polyline points="8,18.5 11,16 13,18.5" fill="none" stroke="#2e8a2e" stroke-width="1"/><polygon points="13,18.5 13,19 18,21 24,22 30,22 30,18.5" fill="rgba(240,120,120,0.38)"/><polyline points="13,19 18,21 24,22 30,22" fill="none" stroke="#c9362c" stroke-width="1"/><polygon points="40,18.5 40,20 44,20 47,19 47,18.5" fill="rgba(240,120,120,0.38)"/><polyline points="40,20 44,20 47,19" fill="none" stroke="#c9362c" stroke-width="1"/><polygon points="47,18.5 47,18.5 50,16.5 54,17 58,16 62,17 66,18.5 66,18.5" fill="rgba(90,190,90,0.38)"/><polyline points="47,18.5 50,16.5 54,17 58,16 62,17 66,18.5" fill="none" stroke="#2e8a2e" stroke-width="1"/><polygon points="66,18.5 66,19 72,19.5 80,20 80,18.5" fill="rgba(240,120,120,0.38)"/><polyline points="66,19 72,19.5 80,20" fill="none" stroke="#c9362c" stroke-width="1"/><path d="M0 18.5H80" stroke="#5a78d8" stroke-width="1" stroke-dasharray="1 1.4"/><path d="M1 37.5H6M34 37.5H37M71 37.5H76" stroke="#aaa" stroke-width="1.2"/></svg><div class="wh" style="height:42px"><div class="val" style="color:#717171">14.74<small></small></div><div class="chg" style="color:#c9362c">-0.01<small></small></div><div class="pct" style="color:#c9362c"><i>▼</i>0.07<small>%</small></div><div class="hl" style="top:5px">H:14.79<small></small></div><div class="hl" style="top:23px">L:14.72<small></small></div></div></div><div class="row" style="top:168px;height:42px"><div class="lab" style="height:41px"><div class="nm" style="font-size:15.5px;letter-spacing:-0.3px">ドル建て日経平均</div><div class="tag"><i class="ar"></i>日経ドル</div><svg class="fl" width="28" height="28" viewBox="0 0 28 28"><circle cx="14" cy="14" r="13" fill="#8c8c8c"/><circle cx="14" cy="14" r="6.8" fill="#8a4a40"/></svg><div class="tm">01/16</div></div><svg class="mc" width="80" height="40" viewBox="0 0 80 40"><rect width="80" height="40" rx="2" fill="#e6e6e6"/><rect x="0" y="9" width="80" height="8" fill="#efefef"/><rect x="0" y="25" width="80" height="8" fill="#efefef"/><polygon points="0,10.5 0,14 2,22 5,21 8,25 10,28 13,24 16,23 19,26 22,22 26,20 30,19 30,10.5" fill="rgba(240,120,120,0.38)"/><polyline points="0,14 2,22 5,21 8,25 10,28 13,24 16,23 19,26 22,22 26,20 30,19" fill="none" stroke="#c9362c" stroke-width="1"/><polygon points="42,10.5 42,12 45,15 48,12 51,10.5 51,10.5" fill="rgba(240,120,120,0.38)"/><polyline points="42,12 45,15 48,12 51,10.5" fill="none" stroke="#c9362c" stroke-width="1"/><polygon points="51,10.5 51,10.5 53,6 56,5 59,6 62,7 65,6 68,7.5 72,10.5 72,10.5" fill="rgba(90,190,90,0.38)"/><polyline points="51,10.5 53,6 56,5 59,6 62,7 65,6 68,7.5 72,10.5" fill="none" stroke="#2e8a2e" stroke-width="1"/><polygon points="72,10.5 72,10.5 76,13 80,14 80,10.5" fill="rgba(240,120,120,0.38)"/><polyline points="72,10.5 76,13 80,14" fill="none" stroke="#c9362c" stroke-width="1"/><path d="M0 10.5H80" stroke="#5a78d8" stroke-width="1" stroke-dasharray="1 1.4"/><path d="M1 37.5H6M34 37.5H37M71 37.5H76" stroke="#aaa" stroke-width="1.2"/></svg><div class="wh" style="height:42px"><div class="val" style="color:#717171">340.53<small></small></div><div class="chg" style="color:#c9362c">-0.66<small></small></div><div class="pct" style="color:#c9362c"><i>▼</i>0.19<small>%</small></div><div class="hl" style="top:5px">H:341.99<small></small></div><div class="hl" style="top:23px">L:338.75<small></small></div></div></div><div class="row" style="top:210px;height:41px"><div class="lab" style="height:40px"><div class="nm" style="">東証REIT</div><svg class="fl" width="28" height="28" viewBox="0 0 28 28"><circle cx="14" cy="14" r="13" fill="#8c8c8c"/><circle cx="14" cy="14" r="6.8" fill="#8a4a40"/></svg><div class="tm">01/16</div></div><svg class="mc" width="80" height="40" viewBox="0 0 80 40"><rect width="80" height="40" rx="2" fill="#e6e6e6"/><rect x="0" y="9" width="80" height="8" fill="#efefef"/><rect x="0" y="25" width="80" height="8" fill="#efefef"/><polygon points="0,23 0,18 3,14 6,15 10,16 14,15 18,14 22,14.5 26,15 30,16 30,23" fill="rgba(90,190,90,0.38)"/><polyline points="0,18 3,14 6,15 10,16 14,15 18,14 22,14.5 26,15 30,16" fill="none" stroke="#2e8a2e" stroke-width="1"/><polygon points="43,23 43,15 48,16 54,15.5 60,16 66,15.5 72,14.5 76,14 80,14.5 80,23" fill="rgba(90,190,90,0.38)"/><polyline points="43,15 48,16 54,15.5 60,16 66,15.5 72,14.5 76,14 80,14.5" fill="none" stroke="#2e8a2e" stroke-width="1"/><path d="M0 23H80" stroke="#5a78d8" stroke-width="1" stroke-dasharray="1 1.4"/><path d="M1 37.5H6M34 37.5H37M71 37.5H76" stroke="#aaa" stroke-width="1.2"/></svg><div class="wh" style="height:41px"><div class="val" style="color:#717171">2,067<small>.93</small></div><div class="chg" style="color:#2e8a2e">+10<small>.84</small></div><div class="pct up" style="color:#2e8a2e"><i>▲</i>0.53<small>%</small></div><div class="hl" style="top:5px">H:2,068<small>.86</small></div><div class="hl" style="top:23px">L:2,057<small>.33</small></div></div></div></div>
</body></html>
